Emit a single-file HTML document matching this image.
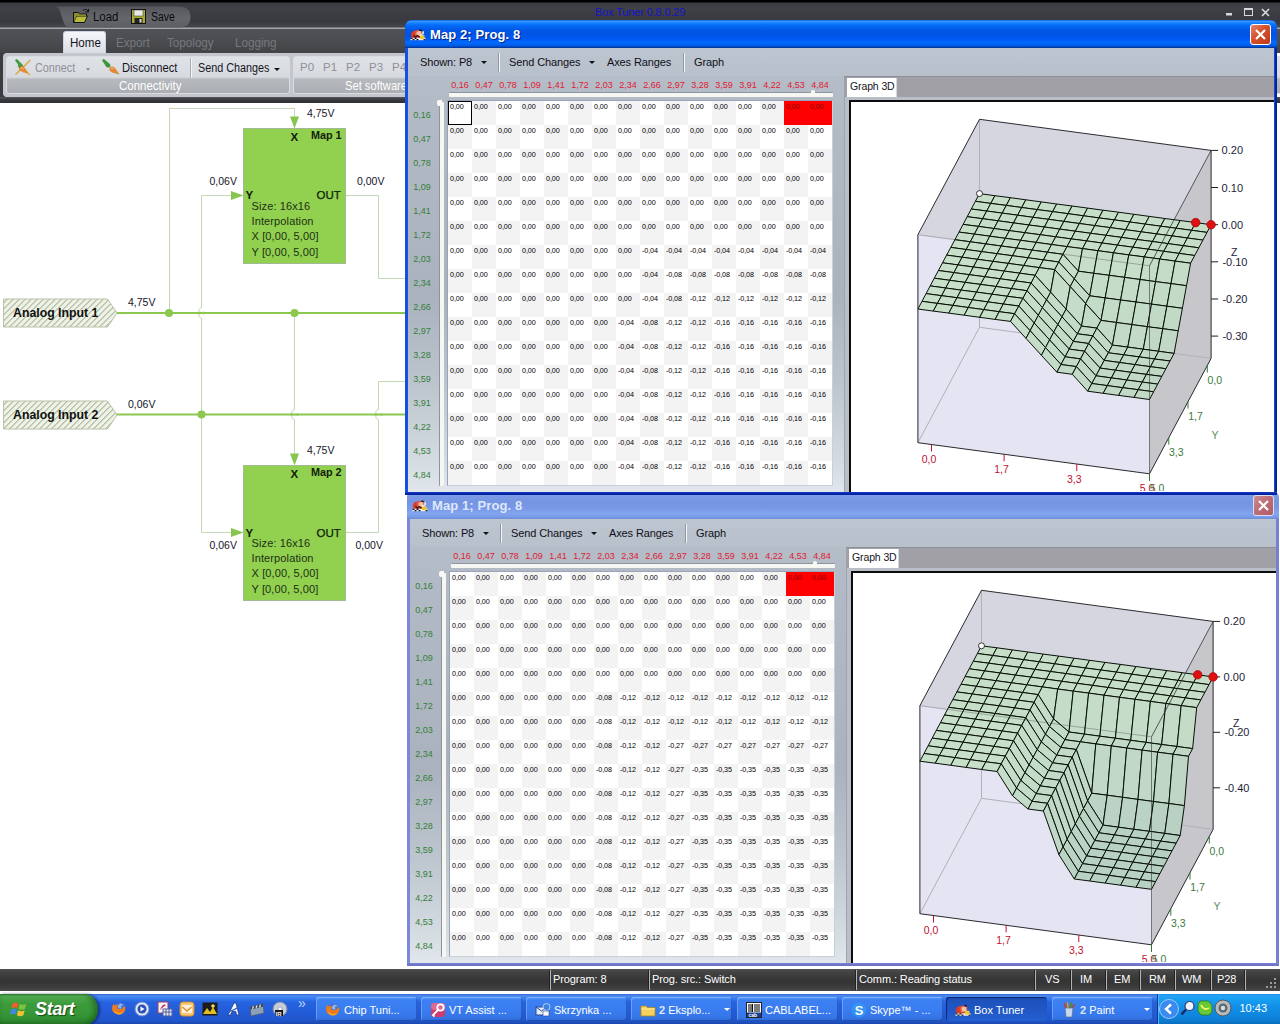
<!DOCTYPE html>
<html lang="en"><head><meta charset="utf-8"><title>Box Tuner 0.8.0.29</title>
<style>
html,body{margin:0;padding:0;}
body{width:1280px;height:1024px;overflow:hidden;position:relative;background:#fff;
 font-family:"Liberation Sans","DejaVu Sans",sans-serif;font-size:11px;color:#000;}
.abs{position:absolute;}
div,span{box-sizing:border-box;}
.t{position:absolute;white-space:nowrap;line-height:1;}
.rb{transform:scaleX(0.9);transform-origin:0 0;}
/* ---------- main app chrome ---------- */
#topbar{left:0;top:0;width:1280px;height:29px;background:linear-gradient(#000 0,#000 2px,#3a3b40 3px,#404146 8px,#3b3c41 16px,#393a3f 22px,#46474c 27px,#a4a7ac 28px,#a4a7ac 29px);}
#qat{left:55px;top:6px;width:136px;height:22px;border-radius:3px 12px 12px 3px / 3px 11px 11px 3px;background:linear-gradient(#505156,#5f6065 55%,#58595e);}
#qatcut{left:48px;top:6px;width:24px;height:22px;background:linear-gradient(#36373c,#2c2d31 60%,#3e3f44);border-radius:0 14px 0 0;transform:skewX(25deg);}
#tabrow{left:0;top:29px;width:1280px;height:24px;background:linear-gradient(#515256,#4b4c50 50%,#424347);}
#ribbon{left:3px;top:53px;width:1274px;height:44px;background:#c3c7cd;border-radius:4px 0 0 4px;}
#ribbon .grp{position:absolute;top:3px;height:38px;border-radius:3px;border:1px solid #d9dce1;background:linear-gradient(#dfe2e7 0,#d7dadf 20px,#c9ccd1 21px,#b6b9be 22px,#a9acb1 38px);overflow:hidden;}
#under{left:0;top:97px;width:1280px;height:6px;background:linear-gradient(#55565a,#3a3b3f 40%,#2e2f33);}
#hometab{left:63px;top:31px;width:43px;height:23px;border-radius:3px 3px 0 0;background:linear-gradient(#f4f6f9,#e4e7ec 60%,#d9dce2);border:1px solid #c9d3e2;border-bottom:none;}
/* ---------- status bar ---------- */
#status{left:0;top:969px;width:1280px;height:22px;background:linear-gradient(#505050 0,#434343 3px,#343434 12px,#3c3c3c 18px,#484848 22px);color:#fff;font-size:11px;}
#status .sep{position:absolute;top:1px;width:2px;height:20px;background:linear-gradient(90deg,#222 50%,#b4b4b4 50%);}
/* ---------- XP taskbar ---------- */
#taskbar{left:0;top:994px;width:1280px;height:30px;background:linear-gradient(#3168d5 0,#4e8cf0 2px,#3a80f3 4px,#2663e0 8px,#245edb 14px,#2258d2 22px,#2055c9 27px,#1941a5 31px);}
.tb{position:absolute;top:3px;height:24px;width:101px;border-radius:3px;background:linear-gradient(#5a9cff 0,#3c81f3 3px,#3a7df0 12px,#3576e8 20px,#2f6bd9 24px);box-shadow:inset 1px 1px 0 rgba(255,255,255,.25), inset -1px -1px 0 rgba(0,0,40,.25);color:#fff;font-size:11px;}
.tb.act{background:linear-gradient(#1c4fb3 0,#1e52bd 4px,#2058c6 14px,#2460cf 24px);box-shadow:inset 1px 1px 1px rgba(0,0,40,.55);}
.tb .lbl{position:absolute;left:28px;top:7px;white-space:nowrap;line-height:12px;}
.tb .ic{position:absolute;left:9px;top:5px;width:16px;height:16px;}
/* ---------- XP windows ---------- */
.win{position:absolute;overflow:hidden;}
.win .title{position:absolute;left:0;top:0;right:0;height:28px;}
.win.active .title{background:linear-gradient(#0058ee 0%,#3a93ff 4%,#288eff 8%,#127dff 12%,#036ffc 18%,#0262ee 26%,#0057e5 36%,#0054e3 46%,#0055eb 60%,#005bf5 70%,#026afe 80%,#0062ef 88%,#0052d6 94%,#0040ab 97%,#003092 100%);}
.win.inact .title{background:linear-gradient(#6f8fdc 0%,#8aa7ec 8%,#7b9ae6 18%,#7595e2 40%,#7898e5 60%,#82a5f0 80%,#7a9ce8 92%,#6c8cd8 100%);}
.win .ttext{position:absolute;left:25px;top:7px;color:#fff;font-weight:bold;font-size:13px;letter-spacing:0.1px;white-space:nowrap;line-height:15px;text-shadow:1px 1px 0 rgba(0,0,60,.6);}
.client{position:absolute;}
.tbtext{position:absolute;top:8px;font-size:11px;white-space:nowrap;line-height:13px;color:#101018;letter-spacing:-0.12px;}
.tbsep{position:absolute;top:5px;width:2px;height:19px;background:linear-gradient(90deg,#8f97a3 50%,#f4f6f8 50%);}
.caret{position:absolute;width:0;height:0;border-left:3px solid transparent;border-right:3px solid transparent;border-top:3px solid #101018;}
.cell{position:absolute;width:24px;height:24px;font-size:7.2px;line-height:8px;padding:2px 0 0 2px;color:#000;white-space:nowrap;overflow:hidden;letter-spacing:-0.1px;}
.hx{position:absolute;width:24px;text-align:center;font-size:9px;line-height:9px;color:#e02030;white-space:nowrap;}
.hy{position:absolute;width:24px;text-align:center;font-size:9px;line-height:9px;color:#35803a;white-space:nowrap;}
</style></head><body>
<div id="topbar" class="abs"></div>
<svg class="abs" style="left:50px;top:5px" width="146" height="24" viewBox="50 5 146 24"><defs><linearGradient id="qg" x1="0" y1="0" x2="0" y2="1"><stop offset="0" stop-color="#56575c"/><stop offset="0.550" stop-color="#65666b"/><stop offset="1" stop-color="#5e5f64"/></linearGradient></defs>
<path d="M55 6.500H179Q190.500 6.500 190.500 17Q190.500 27.500 179 27.500H69C61 27.500 63 6.500 55 6.500Z" fill="url(#qg)"/></svg>
<svg class="abs" style="left:72px;top:8px" width="20" height="18" viewBox="0 0 20 18">
<path d="M1.5 4.5h5l1 1.5h7v2" fill="none" stroke="#111" stroke-width="1"/>
<path d="M1.5 4.5v10h11l3-6.5h-11l-3 6.5z" fill="#b8bc3c" stroke="#111" stroke-width="1" stroke-linejoin="round"/>
<path d="M2 5h4.5l1 1.5h6.5v1.5h-9.5l-2.5 5.5z" fill="#8a8e2a"/>
<path d="M11 2.5c1.5-1.5 3.5-1.500 5 0.500" fill="none" stroke="#111" stroke-width="1"/>
<path d="M16.500 1v3h-3" fill="none" stroke="#111" stroke-width="1"/>
</svg>
<div class="t rb" style="left:92.500px;top:11px;font-size:12px;color:#0a0a0c;transform:scaleX(.95)">Load</div>
<svg class="abs" style="left:131px;top:9px" width="15" height="15" viewBox="0 0 15 15">
<rect x="0.500" y="0.500" width="14" height="14" fill="#a8ac30" stroke="#111"/>
<rect x="3" y="1" width="9" height="6" fill="#e8e8e8" stroke="#333" stroke-width="0.500"/>
<rect x="3.500" y="9" width="8" height="5" fill="#222"/>
<rect x="8.500" y="10" width="2" height="3.500" fill="#ddd"/>
</svg>
<div class="t rb" style="left:150.500px;top:11px;font-size:12px;color:#0a0a0c;transform:scaleX(.87)">Save</div>
<div class="t" style="left:595px;top:7px;font-size:11px;color:#1414c8;letter-spacing:-0.15px">Box Tuner 0.8.0.29</div>
<svg class="abs" style="left:1222px;top:5px" width="52" height="16" viewBox="0 0 52 16">
<rect x="4" y="8" width="6" height="2.500" fill="#d8d8d8"/>
<rect x="22.500" y="3.500" width="8" height="7" fill="none" stroke="#d8d8d8" stroke-width="1"/><rect x="22" y="3" width="9" height="2" fill="#d8d8d8"/>
<path d="M40 4l7 7M47 4l-7 7" stroke="#d8d8d8" stroke-width="1.600"/>
</svg>
<div id="tabrow" class="abs"></div>
<div id="hometab" class="abs"></div>
<div class="t rb" style="left:69.500px;top:37px;font-size:12px;color:#15151d;transform:scaleX(.965)">Home</div>
<div class="t rb" style="left:116px;top:37px;font-size:12px;color:#77787d;transform:scaleX(.972)">Export</div>
<div class="t rb" style="left:167px;top:37px;font-size:12px;color:#77787d;transform:scaleX(.972)">Topology</div>
<div class="t rb" style="left:235px;top:37px;font-size:12px;color:#77787d;transform:scaleX(.972)">Logging</div>
<div class="abs" style="left:0;top:53px;width:6px;height:44px;background:#3b3c40"></div>
<div id="ribbon" class="abs">
<div class="grp" style="left:3px;width:284px"></div>
<div class="grp" style="left:290px;width:990px"></div>
</div>
<svg class="abs" style="left:13px;top:58px" width="20" height="18" viewBox="0 0 20 18">
<path d="M3 16L17 2.500" stroke="#d9ac4c" stroke-width="1.700" stroke-linecap="round"/>
<path d="M12 13L16.500 16.500" stroke="#e2b85e" stroke-width="1.700" stroke-linecap="round"/>
<path d="M2.300 2.300L3.800 1.300L9.300 6.800Q10.300 8.800 8.800 10L6.300 10Q4.800 8.300 5.300 6.300Z" fill="#3fa03a" stroke="#2c7a2a" stroke-width="0.500"/>
<path d="M6.500 9.500Q9 7.800 11 9.300L14.800 14.800L13.300 14.600Q9.500 14.300 7 12.300Q6 11 6.500 9.500Z" fill="#ec8c30" stroke="#c8701c" stroke-width="0.500"/>
<path d="M7.500 10.300q1.500-.8 2.800 0" stroke="#f8c880" stroke-width="0.900" fill="none"/>
</svg>
<div class="t rb" style="left:34.500px;top:62px;font-size:12px;color:#8e9096">Connect</div>
<div class="caret" style="left:86px;top:68px;border-top-color:#8e9096;border-left-width:2.500px;border-right-width:2.500px"></div>
<svg class="abs" style="left:101px;top:58px" width="20" height="18" viewBox="0 0 20 18">
<path d="M1.300 2.300L2.800 1.300L8.300 5.800Q9.800 7.300 8.800 8.800L6.800 9.300Q4.800 8.800 4.300 6.800Z" fill="#3a9a36" stroke="#2a7828" stroke-width="0.500"/>
<path d="M8.800 9.800Q11 7.800 13.500 9.800L17.300 15.500L15.500 15.300Q11.500 14.800 9.300 12.800Q8.300 11.300 8.800 9.800Z" fill="#ea8a30" stroke="#c46c1c" stroke-width="0.500"/>
<path d="M9.800 10.500q1.500-1 3 0" stroke="#f8c880" stroke-width="0.900" fill="none"/>
<path d="M15.500 14.500l2 1.500" stroke="#b8a040" stroke-width="1.200" stroke-linecap="round"/>
</svg>
<div class="t rb" style="left:122px;top:62px;font-size:12px;color:#15151d;transform:scaleX(.933)">Disconnect</div>
<div class="abs" style="left:190px;top:58px;width:2px;height:20px;background:linear-gradient(90deg,#a8abb1 50%,#f2f4f6 50%)"></div>
<div class="t rb" style="left:198px;top:62px;font-size:12px;color:#15151d">Send Changes</div>
<div class="caret" style="left:274px;top:68px"></div>
<div class="t rb" style="left:118.500px;top:80px;font-size:12px;color:#fff;transform:scaleX(.955)">Connectivity</div>
<div class="t" style="left:300px;top:62px;font-size:11.500px;color:#8e9096">P0</div>
<div class="t" style="left:323px;top:62px;font-size:11.500px;color:#8e9096">P1</div>
<div class="t" style="left:346px;top:62px;font-size:11.500px;color:#8e9096">P2</div>
<div class="t" style="left:369px;top:62px;font-size:11.500px;color:#8e9096">P3</div>
<div class="t" style="left:392px;top:62px;font-size:11.500px;color:#8e9096">P4</div>
<div class="t rb" style="left:345px;top:80px;font-size:12px;color:#fff;transform:scaleX(.93)">Set software</div>
<div id="under" class="abs"></div>
<svg class="abs" style="left:0;top:103px" width="410" height="865" viewBox="0 103 410 865" font-family='"Liberation Sans","DejaVu Sans",sans-serif'>
<defs><pattern id="hatch" width="4.240" height="4.240" patternUnits="userSpaceOnUse" patternTransform="rotate(-45)">
<rect width="4.240" height="4.240" fill="#eef3e6"/><rect width="4.240" height="0.950" fill="#a3ad96"/></pattern></defs>
<path d="M169.500 313V108.500H294.500V118" fill="none" stroke="#c3d8b4" stroke-width="1"/>
<path d="M201.500 414V195.500H233" fill="none" stroke="#c3d8b4" stroke-width="1"/>
<path d="M294.500 313V455" fill="none" stroke="#c3d8b4" stroke-width="1"/>
<path d="M201.500 415V532.500H233" fill="none" stroke="#c3d8b4" stroke-width="1"/>
<path d="M346 195.500H378.500V278.500H410" fill="none" stroke="#c3d8b4" stroke-width="1"/>
<path d="M346 532.500H378.500V381.500H410" fill="none" stroke="#c3d8b4" stroke-width="1"/>
<path d="M116 313H410" stroke="#8cc850" stroke-width="2.200" fill="none"/>
<path d="M116 414.500H410" stroke="#8cc850" stroke-width="2.200" fill="none"/>
<rect x="199.0" y="308" width="5" height="10" fill="#fff"/>
<path d="M201.5 307q-4 3-2.500 6q-1.500 3 2.500 6" fill="none" stroke="#c3d8b4" stroke-width="1"/>
<path d="M197.5 313H205.5" stroke="#8cc850" stroke-width="2.200"/>
<rect x="292.0" y="409.5" width="5" height="10" fill="#fff"/>
<path d="M294.5 408.5q-4 3-2.500 6q-1.500 3 2.500 6" fill="none" stroke="#c3d8b4" stroke-width="1"/>
<path d="M290.5 414.5H298.5" stroke="#8cc850" stroke-width="2.200"/>
<rect x="376.0" y="409.5" width="5" height="10" fill="#fff"/>
<path d="M378.5 408.5q-4 3-2.500 6q-1.500 3 2.500 6" fill="none" stroke="#c3d8b4" stroke-width="1"/>
<path d="M374.5 414.5H382.5" stroke="#8cc850" stroke-width="2.200"/>
<circle cx="169" cy="313" r="4" fill="#8cc850"/>
<circle cx="294.5" cy="313" r="4" fill="#8cc850"/>
<circle cx="201.5" cy="414.5" r="4" fill="#8cc850"/>
<path d="M3.500 299H107.500L117 313L107.500 327H3.500Z" fill="url(#hatch)" stroke="#b7c2a6" stroke-width="1"/>
<text x="13" y="317" font-size="12.300" font-weight="bold" fill="#111">Analog Input 1</text>
<path d="M3.500 401H107.500L117 415L107.500 429H3.500Z" fill="url(#hatch)" stroke="#b7c2a6" stroke-width="1"/>
<text x="13" y="419" font-size="12.300" font-weight="bold" fill="#111">Analog Input 2</text>
<text x="128" y="306" font-size="10.500" fill="#15152a">4,75V</text>
<text x="128" y="408" font-size="10.500" fill="#15152a">0,06V</text>
<rect x="243.500" y="128.5" width="102" height="135" fill="#92d050" stroke="#a3b895" stroke-width="1"/>
<path d="M290 116.5H299L294.500 128.5Z" fill="#86c64e"/>
<path d="M231 191.0V200.0L243.500 195.5Z" fill="#86c64e"/>
<text x="290.500" y="140.5" font-size="11.500" font-weight="bold" fill="#10200c">X</text>
<text x="311" y="139.0" font-size="10.800" font-weight="bold" fill="#10200c">Map 1</text>
<text x="245.500" y="199.0" font-size="11.500" font-weight="bold" fill="#10200c">Y</text>
<text x="316.500" y="199.0" font-size="11.500" fill="#10200c" stroke="#10200c" stroke-width="0.250">OUT</text>
<text x="251.500" y="210.0" font-size="11" letter-spacing="0.120" fill="#1c3014">Size: 16x16</text>
<text x="251.500" y="225.2" font-size="11" letter-spacing="0.120" fill="#1c3014">Interpolation</text>
<text x="251.500" y="240.4" font-size="11" letter-spacing="0.120" fill="#1c3014">X [0,00, 5,00]</text>
<text x="251.500" y="255.6" font-size="11" letter-spacing="0.120" fill="#1c3014">Y [0,00, 5,00]</text>
<text x="307" y="117" font-size="10.500" fill="#15152a">4,75V</text>
<text x="209.500" y="185" font-size="10.500" fill="#15152a">0,06V</text>
<text x="357" y="185" font-size="10.500" fill="#15152a">0,00V</text>
<rect x="243.500" y="465.5" width="102" height="135" fill="#92d050" stroke="#a3b895" stroke-width="1"/>
<path d="M290 453.5H299L294.500 465.5Z" fill="#86c64e"/>
<path d="M231 528.0V537.0L243.500 532.5Z" fill="#86c64e"/>
<text x="290.500" y="477.5" font-size="11.500" font-weight="bold" fill="#10200c">X</text>
<text x="311" y="476.0" font-size="10.800" font-weight="bold" fill="#10200c">Map 2</text>
<text x="245.500" y="537.0" font-size="11.500" font-weight="bold" fill="#10200c">Y</text>
<text x="316.500" y="537.0" font-size="11.500" fill="#10200c" stroke="#10200c" stroke-width="0.250">OUT</text>
<text x="251.500" y="547.0" font-size="11" letter-spacing="0.120" fill="#1c3014">Size: 16x16</text>
<text x="251.500" y="562.2" font-size="11" letter-spacing="0.120" fill="#1c3014">Interpolation</text>
<text x="251.500" y="577.4" font-size="11" letter-spacing="0.120" fill="#1c3014">X [0,00, 5,00]</text>
<text x="251.500" y="592.6" font-size="11" letter-spacing="0.120" fill="#1c3014">Y [0,00, 5,00]</text>
<text x="307" y="454" font-size="10.500" fill="#15152a">4,75V</text>
<text x="209.500" y="549" font-size="10.500" fill="#15152a">0,06V</text>
<text x="355.5" y="549" font-size="10.500" fill="#15152a">0,00V</text>
</svg>
<div id="status" class="abs">
<div class="sep" style="left:549px"></div>
<div class="sep" style="left:648px"></div>
<div class="sep" style="left:855px"></div>
<div class="sep" style="left:1034px"></div>
<div class="sep" style="left:1070px"></div>
<div class="sep" style="left:1105px"></div>
<div class="sep" style="left:1139px"></div>
<div class="sep" style="left:1174px"></div>
<div class="sep" style="left:1210px"></div>
<div class="sep" style="left:1244px"></div>
<div class="t" style="left:553px;top:5px;font-size:11px;letter-spacing:-0.1px">Program: 8</div>
<div class="t" style="left:652px;top:5px;font-size:11px;letter-spacing:-0.1px">Prog. src.: Switch</div>
<div class="t" style="left:859px;top:5px;font-size:11px;letter-spacing:-0.1px">Comm.: Reading status</div>
<div class="t" style="left:1045px;top:5px;font-size:11px;letter-spacing:-0.1px">VS</div>
<div class="t" style="left:1080px;top:5px;font-size:11px;letter-spacing:-0.1px">IM</div>
<div class="t" style="left:1114px;top:5px;font-size:11px;letter-spacing:-0.1px">EM</div>
<div class="t" style="left:1149px;top:5px;font-size:11px;letter-spacing:-0.1px">RM</div>
<div class="t" style="left:1182px;top:5px;font-size:11px;letter-spacing:-0.1px">WM</div>
<div class="t" style="left:1217px;top:5px;font-size:11px;letter-spacing:-0.1px">P28</div>
<svg class="abs" style="left:1266px;top:9px" width="12" height="12"><g fill="#9a9a9a"><rect x="8" y="0" width="2" height="2"/><rect x="4" y="4" width="2" height="2"/><rect x="8" y="4" width="2" height="2"/><rect x="0" y="8" width="2" height="2"/><rect x="4" y="8" width="2" height="2"/><rect x="8" y="8" width="2" height="2"/></g></svg>
</div>
<div class="abs" style="left:0;top:991px;width:1280px;height:3px;background:#fff"></div>
<div id="taskbar" class="abs">
<div class="abs" style="left:0;top:0;width:98px;height:31px;border-radius:0 14px 14px 0 / 0 16px 16px 0;background:linear-gradient(#2f8b2f 0,#5cb85a 2px,#48a746 5px,#3c9c3b 10px,#389838 18px,#319031 25px,#2a7e2b 31px);box-shadow:inset -3px 0 6px rgba(0,40,0,.45), 2px 0 3px rgba(0,0,60,.5)"></div>
<svg class="abs" style="left:10px;top:6px" width="20" height="19" viewBox="0 0 20 19">
<path d="M2.500 3.500q3-2 6 0l-1.300 5q-3-2-6 0z" fill="#e8602c"/>
<path d="M9.800 3.800q3 2 6.500 0l-1.300 5q-3.500 2-6.500 0z" fill="#7ec242"/>
<path d="M1 9.800q3-2 6 0l-1.300 5q-3-2-6 0z" fill="#3f8ae0"/>
<path d="M8.200 10.200q3 2 6.500 0l-1.300 5q-3.500 2-6.500 0z" fill="#f2c030"/>
</svg>
<div class="t" style="left:35px;top:6px;font-size:18px;font-weight:bold;font-style:italic;color:#fff;text-shadow:1px 1px 1px rgba(0,40,0,.7);letter-spacing:-0.3px">Start</div>
<svg class="abs" style="left:111px;top:7px" width="16" height="16" viewBox="0 0 16 16"><circle cx="8.500" cy="7.500" r="6" fill="#3f6fd2"/><path d="M9 2.500q2.500 0 4 2q-2-.5-3 .5q1 1.500 0 2.500q-2 .5-3-1q-.5-2 2-4z" fill="#8fb4ee"/><path d="M1 7.500q0-3 2-5q0 1.500 1 2q1.500-1 3.500-.5q-1.500 1-1.500 2.500q1 2.500 4 1.500q2-.5 2.500-2.500q1 .5 1.500-.5q1 4-1.500 6.500q-3 3-7 1.500q-4.500-1.500-4.500-5.500z" fill="#ee7a1c"/><path d="M2.500 9q1 4 5.500 4.500q3.500 0 5-3q-2 2-5 1.500q-3.500-.5-5.500-3z" fill="#f8a828"/></svg>
<svg class="abs" style="left:134px;top:7px" width="16" height="16" viewBox="0 0 16 16"><circle cx="8" cy="8" r="7" fill="#dfe8f4" stroke="#6a8cc8"/><circle cx="8" cy="8" r="4.500" fill="#2c50b8"/><path d="M6.500 5.500v5l4-2.500z" fill="#fff"/></svg>
<svg class="abs" style="left:157px;top:7px" width="16" height="16" viewBox="0 0 16 16"><rect x="1" y="1" width="10" height="11" fill="#f4f4f8" stroke="#a04060"/><path d="M3 9q3-7 6-5q-2 1-6 5z" fill="#d02050"/><rect x="6" y="8" width="9" height="7" fill="#e8e8f0" stroke="#5060a0"/><path d="M6 11h9M9 8v7M12 8v7" stroke="#5060a0"/></svg>
<svg class="abs" style="left:179px;top:7px" width="16" height="16" viewBox="0 0 16 16"><rect x="1" y="1" width="14" height="14" rx="3" fill="#f6c874" stroke="#d88a28"/><rect x="3" y="4" width="10" height="8" rx="1" fill="#fdf0d8"/><path d="M3.500 6l4.500 4l4.500-4" fill="none" stroke="#e09030" stroke-width="1.400"/></svg>
<svg class="abs" style="left:202px;top:7px" width="16" height="16" viewBox="0 0 16 16"><rect x="0.500" y="1.500" width="15" height="13" fill="#1c1c1c"/><path d="M1 13l4-6l3 4l3-5l4 7z" fill="#e0c020"/><circle cx="11" cy="5" r="1.800" fill="#f0e060"/></svg>
<svg class="abs" style="left:226px;top:7px" width="16" height="16" viewBox="0 0 16 16"><path d="M2 14l6-12h2l3 12h-2.500l-.7-3.500h-3.800l-1.500 3.500z" fill="#f8f8ff" stroke="#1c3a90" stroke-width="0.800"/><path d="M1 11q7-1 14-7" stroke="#3060c0" stroke-width="1.300" fill="none"/></svg>
<svg class="abs" style="left:249px;top:7px" width="16" height="16" viewBox="0 0 16 16"><path d="M1 6l13-3l1 9l-13 3z" fill="#8ca0b8" stroke="#4a5a70" stroke-width="0.700"/><path d="M1 6l13-3l.3 2.500l-13 3z" fill="#3a4658"/><path d="M3.500 7.800l1-2.500M7 7l1-2.500M10.500 6.200l1-2.500" stroke="#e8ecf0" stroke-width="1.200"/></svg>
<svg class="abs" style="left:272px;top:7px" width="16" height="16" viewBox="0 0 16 16"><circle cx="8" cy="8" r="7" fill="#c8ccd8" stroke="#8088a0"/><circle cx="8" cy="8" r="2" fill="#fff" stroke="#8088a0" stroke-width="0.600"/><rect x="3" y="9" width="8" height="6" fill="#181820"/><text x="3.500" y="14.500" font-size="6" font-weight="bold" fill="#fff" font-family="Liberation Sans, sans-serif">IR</text></svg>
<div class="t" style="left:298px;top:2px;font-size:14px;color:#bcd6ff;letter-spacing:-1px">&#187;</div>
<div class="tb" style="left:316px"><svg class="ic" viewBox="0 0 16 16"><circle cx="8.500" cy="7.500" r="6" fill="#3f6fd2"/><path d="M9 2.500q2.500 0 4 2q-2-.5-3 .5q1 1.500 0 2.500q-2 .5-3-1q-.5-2 2-4z" fill="#8fb4ee"/><path d="M1 7.500q0-3 2-5q0 1.500 1 2q1.500-1 3.500-.5q-1.500 1-1.500 2.500q1 2.500 4 1.500q2-.5 2.500-2.500q1 .5 1.500-.5q1 4-1.500 6.500q-3 3-7 1.500q-4.500-1.500-4.500-5.500z" fill="#ee7a1c"/><path d="M2.500 9q1 4 5.500 4.500q3.500 0 5-3q-2 2-5 1.500q-3.500-.5-5.500-3z" fill="#f8a828"/></svg><div class="lbl">Chip Tuni...</div></div>
<div class="tb" style="left:421px"><svg class="ic" viewBox="0 0 16 16"><rect x="1" y="1" width="14" height="14" rx="3" fill="#cc3c70"/><rect x="1" y="1" width="14" height="7" rx="3" fill="#dc6a94"/><circle cx="10.500" cy="5.500" r="3.200" fill="none" stroke="#fff" stroke-width="1.800"/><path d="M8.500 7.500l-5.500 5.500l1.500 1.500" fill="none" stroke="#fff" stroke-width="1.800"/></svg><div class="lbl">VT Assist ...</div></div>
<div class="tb" style="left:526px"><svg class="ic" viewBox="0 0 16 16"><rect x="1" y="5" width="11" height="8" fill="#e8eef8" stroke="#2a4a98"/><path d="M1 5l5.500 4l5.500-4" fill="none" stroke="#2a4a98"/><circle cx="11.500" cy="5" r="3.500" fill="#4080e0" stroke="#fff" stroke-width="0.600"/><rect x="8" y="9" width="6" height="5" fill="#f8f8f8" stroke="#2a4a98" stroke-width="0.600"/></svg><div class="lbl">Skrzynka ...</div></div>
<div class="tb" style="left:631px"><svg class="ic" viewBox="0 0 16 16"><path d="M1 4h5l1.500 1.500h7.500v8.500h-14z" fill="#f4d060" stroke="#b08818" stroke-width="0.800"/><path d="M1 7h14" stroke="#fbe890"/></svg><div class="lbl"><b style="color:#dfe6f6">2</b> Eksplo...</div></div>
<div class="tb" style="left:737px"><svg class="ic" viewBox="0 0 16 16"><rect x="0.500" y="0.500" width="15" height="15" fill="#fff" stroke="#222"/><path d="M3 2v8M5 2v8M6.500 2v8M9 2v8M11 2v8M13 2v8" stroke="#111" stroke-width="1.100"/><rect x="1" y="10.500" width="14" height="4.500" fill="#1a3c8c"/><text x="2.500" y="14.500" font-size="5" font-weight="bold" fill="#fff" font-family="Liberation Sans, sans-serif">cab</text></svg><div class="lbl">CABLABEL...</div></div>
<div class="tb" style="left:842px"><svg class="ic" viewBox="0 0 16 16"><circle cx="8" cy="8" r="7.500" fill="#2fa4f4" fill-opacity="0.550"/><text x="3.800" y="12.800" font-size="13" font-weight="bold" fill="#f4fbff" font-family="Liberation Sans, sans-serif">S</text></svg><div class="lbl">Skype&#8482; - ...</div></div>
<div class="tb act" style="left:946px"><svg class="ic" viewBox="0 0 16 16"><g transform="translate(0,2.500)"><ellipse cx="5.800" cy="5.800" rx="5" ry="4.300" fill="#d83a22"/><path d="M4 2.500q3.500-2.500 7-1l1.500 1.500l-1 5h-6z" fill="#e0523a"/><path d="M6.500 3q2-1.500 4.500-.8l.8 4.800h-5z" fill="#f2c2a8"/><path d="M9 .8q1.500-.8 3 .3l-.5 1.200q-1.200-.8-2.500-.5z" fill="#201010"/><rect x=".5" y="8.800" width="15" height="2.400" fill="#f6f6fa"/><path d="M.5 8.800h2v1.200h-2zM4.500 8.800h2v1.200h-2zM2.500 10h2v1.200h-2zM6.500 10h2v1.200h-2zM13.500 10h2v1.200h-2z" fill="#161620"/><rect x="10" y="6.200" width="4.500" height="4" fill="#e8c838"/></g></svg><div class="lbl">Box Tuner</div></div>
<div class="tb" style="left:1052px"><svg class="ic" viewBox="0 0 16 16"><path d="M4 6h8l-1 9h-6z" fill="#c8d8f0" stroke="#5a6a90" stroke-width="0.700"/><path d="M5 6l-2-5M7 6l-.5-5.500M9 6l1.500-5.500M11 6l2.500-4" stroke="#c04020" stroke-width="1.400"/><path d="M7 6l-.5-5.500" stroke="#e0a020" stroke-width="1.400"/><path d="M9 6l1.500-5.500" stroke="#3a9a3a" stroke-width="1.400"/></svg><div class="lbl"><b style="color:#dfe6f6">2</b> Paint</div></div>
<div class="caret" style="left:724px;top:14px;border-top-color:#fff"></div>
<div class="caret" style="left:1144px;top:14px;border-top-color:#fff"></div>
<div class="abs" style="left:1157px;top:0;width:123px;height:31px;background:linear-gradient(#1c8ee6 0,#27a4f5 2px,#17a0f2 5px,#1290e8 12px,#0f85dd 22px,#0c78cc 28px,#0a62b0 31px);box-shadow:inset 1px 0 0 #0a3a8a, inset 2px 0 0 #4ab8ff"></div>
<svg class="abs" style="left:1158px;top:4px" width="22" height="22" viewBox="0 0 22 22"><circle cx="11" cy="11" r="9.500" fill="#3a8af0" stroke="#9ccaff" stroke-width="1"/><path d="M13 6.500l-5 4.500l5 4.500" fill="none" stroke="#fff" stroke-width="2.400"/></svg>
<svg class="abs" style="left:1180px;top:6px" width="16" height="16" viewBox="0 0 16 16"><circle cx="9.500" cy="6" r="4.500" fill="#eef4ff" stroke="#2a3a70" stroke-width="1.200"/><path d="M6 9.500l-4.500 5" stroke="#1a2860" stroke-width="2.400"/></svg>
<svg class="abs" style="left:1197px;top:6px" width="16" height="16" viewBox="0 0 16 16"><path d="M3 1h8l4 4v7l-3 3h-8l-3-4v-7z" fill="#68c838" stroke="#2a7a18" stroke-width="0.800"/><path d="M4 5q3 6 8 3" fill="none" stroke="#f4f860" stroke-width="1.800"/></svg>
<svg class="abs" style="left:1214px;top:5px" width="18" height="18" viewBox="0 0 18 18"><circle cx="9" cy="9" r="8" fill="#b8bcc0" stroke="#50585c"/><circle cx="9" cy="9" r="4.500" fill="#5a6a70"/><circle cx="9" cy="9" r="2.200" fill="#d8e0e4"/></svg>
<div class="t" style="left:1239.500px;top:9px;font-size:11px;color:#fff">10:43</div>
</div>
<div class="win inact" style="left:407px;top:491px;width:872px;height:475px;background:#7b86dc;border-radius:7px 7px 0 0">
<div class="abs" style="right:0;top:28px;width:3px;bottom:0;background:#7480d2"></div>
<div class="abs" style="left:0;right:0;height:3px;bottom:0;background:linear-gradient(#8084d4 0,#7478cc 1px,#6c70c4 3px)"></div>
<div class="title"></div>
<svg class="abs" style="left:5px;top:9px" width="16" height="12" viewBox="0 0 16 12">
<ellipse cx="5.800" cy="5.800" rx="5" ry="4.300" fill="#d83a22"/>
<path d="M4 2.500q3.500-2.500 7-1l1.500 1.500l-1 5h-6z" fill="#e0523a"/>
<path d="M6.500 3q2-1.500 4.500-.8l.8 4.800h-5z" fill="#f2c2a8"/>
<path d="M9 .8q1.500-.8 3 .3l-.5 1.200q-1.200-.8-2.500-.5z" fill="#201010"/>
<path d="M12.300 2.500l1.700-.3l-.3 3.300l-1.400.3z" fill="#f4f4f8"/>
<rect x=".5" y="8.800" width="15" height="2.400" fill="#f6f6fa"/>
<path d="M.5 8.800h2v1.200h-2zM4.500 8.800h2v1.200h-2zM2.500 10h2v1.200h-2zM6.500 10h2v1.200h-2zM13.500 10h2v1.200h-2z" fill="#161620"/>
<path d="M3.500 6.500l2 1.500l2-1.500l2 1.500" stroke="#301010" stroke-width="1.100" fill="none"/>
<rect x="10" y="6.200" width="4.500" height="4" fill="#e8c838"/>
<rect x="10" y="5.200" width="2.500" height="1.500" fill="#f8f0d0"/>
</svg>
<div class="ttext" style="color:#dfe7fb;text-shadow:none">Map 1; Prog. 8</div>
<div class="abs" style="right:5px;top:4px;width:21px;height:21px;border-radius:3px;background:linear-gradient(135deg,#cc8c94 0,#bc6c74 50%,#b05c66 100%);border:1px solid #d8e0f8;"><svg width="19" height="19" viewBox="0 0 19 19" style="position:absolute;left:0;top:0"><path d="M5 5l9 9M14 5l-9 9" stroke="#fff" stroke-width="2.200"/></svg></div>
<div class="client" style="left:3px;top:28px;width:866px;height:444px;background:linear-gradient(#b7bfcb 0,#b2bac6 60px,#aab2be 250px,#bdc5ce 340px,#d6dde3 420px,#e0e6ec 443px);overflow:hidden">
<div class="abs" style="left:0;top:0;width:866px;height:28px;background:linear-gradient(#bdc5d0,#b8c0cb)"></div>
<div class="abs" style="left:436px;top:28px;width:430px;height:416px;background:#b3bbc7"></div>
<div class="tbtext" style="left:12px">Shown: P8</div>
<div class="caret" style="left:73px;top:13px"></div>
<div class="tbsep" style="left:90px"></div>
<div class="tbtext" style="left:101px">Send Changes</div>
<div class="caret" style="left:181px;top:13px"></div>
<div class="tbtext" style="left:199px">Axes Ranges</div>
<div class="tbsep" style="left:275px"></div>
<div class="tbtext" style="left:286px">Graph</div>
<div class="hx" style="left:40px;top:33px">0,16</div>
<div class="hx" style="left:64px;top:33px">0,47</div>
<div class="hx" style="left:88px;top:33px">0,78</div>
<div class="hx" style="left:112px;top:33px">1,09</div>
<div class="hx" style="left:136px;top:33px">1,41</div>
<div class="hx" style="left:160px;top:33px">1,72</div>
<div class="hx" style="left:184px;top:33px">2,03</div>
<div class="hx" style="left:208px;top:33px">2,34</div>
<div class="hx" style="left:232px;top:33px">2,66</div>
<div class="hx" style="left:256px;top:33px">2,97</div>
<div class="hx" style="left:280px;top:33px">3,28</div>
<div class="hx" style="left:304px;top:33px">3,59</div>
<div class="hx" style="left:328px;top:33px">3,91</div>
<div class="hx" style="left:352px;top:33px">4,22</div>
<div class="hx" style="left:376px;top:33px">4,53</div>
<div class="hx" style="left:400px;top:33px">4,84</div>
<div class="abs" style="left:41px;top:44px;width:384px;height:5px;background:#f6f6f2;border-top:1px solid #8c949e;border-radius:1px"></div>
<div class="abs" style="left:403px;top:42px;width:4px;height:6px;background:#f8f8f4;border-radius:2px 2px 0 0"></div>
<div class="abs" style="left:31px;top:54px;width:5px;height:384px;background:#f6f6f2;border-left:1px solid #8c949e;border-radius:1px"></div>
<div class="abs" style="left:29px;top:52px;width:5px;height:6px;background:#f8f8f4;border-radius:2px 0 0 2px"></div>
<div class="hy" style="left:2px;top:63px">0,16</div>
<div class="hy" style="left:2px;top:87px">0,47</div>
<div class="hy" style="left:2px;top:111px">0,78</div>
<div class="hy" style="left:2px;top:135px">1,09</div>
<div class="hy" style="left:2px;top:159px">1,41</div>
<div class="hy" style="left:2px;top:183px">1,72</div>
<div class="hy" style="left:2px;top:207px">2,03</div>
<div class="hy" style="left:2px;top:231px">2,34</div>
<div class="hy" style="left:2px;top:255px">2,66</div>
<div class="hy" style="left:2px;top:279px">2,97</div>
<div class="hy" style="left:2px;top:303px">3,28</div>
<div class="hy" style="left:2px;top:327px">3,59</div>
<div class="hy" style="left:2px;top:351px">3,91</div>
<div class="hy" style="left:2px;top:375px">4,22</div>
<div class="hy" style="left:2px;top:399px">4,53</div>
<div class="hy" style="left:2px;top:423px">4,84</div>
<div class="abs" style="left:39px;top:52px;width:386px;height:386px;background:#fff;border:1px solid #98a4b8;border-right-color:#c8d0dc;border-bottom-color:#c8d0dc">
<div class="cell" style="left:0px;top:0px;background:#fff;color:#000">0,00</div>
<div class="cell" style="left:24px;top:0px;background:#f3f3f3;color:#000">0,00</div>
<div class="cell" style="left:48px;top:0px;background:#fff;color:#000">0,00</div>
<div class="cell" style="left:72px;top:0px;background:#f3f3f3;color:#000">0,00</div>
<div class="cell" style="left:96px;top:0px;background:#fff;color:#000">0,00</div>
<div class="cell" style="left:120px;top:0px;background:#f3f3f3;color:#000">0,00</div>
<div class="cell" style="left:144px;top:0px;background:#fff;color:#000">0,00</div>
<div class="cell" style="left:168px;top:0px;background:#f3f3f3;color:#000">0,00</div>
<div class="cell" style="left:192px;top:0px;background:#fff;color:#000">0,00</div>
<div class="cell" style="left:216px;top:0px;background:#f3f3f3;color:#000">0,00</div>
<div class="cell" style="left:240px;top:0px;background:#fff;color:#000">0,00</div>
<div class="cell" style="left:264px;top:0px;background:#f3f3f3;color:#000">0,00</div>
<div class="cell" style="left:288px;top:0px;background:#fff;color:#000">0,00</div>
<div class="cell" style="left:312px;top:0px;background:#f3f3f3;color:#000">0,00</div>
<div class="cell" style="left:336px;top:0px;background:#ff0000;color:#8a0000">0,00</div>
<div class="cell" style="left:360px;top:0px;background:#ff0000;color:#8a0000">0,00</div>
<div class="cell" style="left:0px;top:24px;background:#f3f3f3;color:#000">0,00</div>
<div class="cell" style="left:24px;top:24px;background:#fff;color:#000">0,00</div>
<div class="cell" style="left:48px;top:24px;background:#f3f3f3;color:#000">0,00</div>
<div class="cell" style="left:72px;top:24px;background:#fff;color:#000">0,00</div>
<div class="cell" style="left:96px;top:24px;background:#f3f3f3;color:#000">0,00</div>
<div class="cell" style="left:120px;top:24px;background:#fff;color:#000">0,00</div>
<div class="cell" style="left:144px;top:24px;background:#f3f3f3;color:#000">0,00</div>
<div class="cell" style="left:168px;top:24px;background:#fff;color:#000">0,00</div>
<div class="cell" style="left:192px;top:24px;background:#f3f3f3;color:#000">0,00</div>
<div class="cell" style="left:216px;top:24px;background:#fff;color:#000">0,00</div>
<div class="cell" style="left:240px;top:24px;background:#f3f3f3;color:#000">0,00</div>
<div class="cell" style="left:264px;top:24px;background:#fff;color:#000">0,00</div>
<div class="cell" style="left:288px;top:24px;background:#f3f3f3;color:#000">0,00</div>
<div class="cell" style="left:312px;top:24px;background:#fff;color:#000">0,00</div>
<div class="cell" style="left:336px;top:24px;background:#f3f3f3;color:#000">0,00</div>
<div class="cell" style="left:360px;top:24px;background:#fff;color:#000">0,00</div>
<div class="cell" style="left:0px;top:48px;background:#fff;color:#000">0,00</div>
<div class="cell" style="left:24px;top:48px;background:#f3f3f3;color:#000">0,00</div>
<div class="cell" style="left:48px;top:48px;background:#fff;color:#000">0,00</div>
<div class="cell" style="left:72px;top:48px;background:#f3f3f3;color:#000">0,00</div>
<div class="cell" style="left:96px;top:48px;background:#fff;color:#000">0,00</div>
<div class="cell" style="left:120px;top:48px;background:#f3f3f3;color:#000">0,00</div>
<div class="cell" style="left:144px;top:48px;background:#fff;color:#000">0,00</div>
<div class="cell" style="left:168px;top:48px;background:#f3f3f3;color:#000">0,00</div>
<div class="cell" style="left:192px;top:48px;background:#fff;color:#000">0,00</div>
<div class="cell" style="left:216px;top:48px;background:#f3f3f3;color:#000">0,00</div>
<div class="cell" style="left:240px;top:48px;background:#fff;color:#000">0,00</div>
<div class="cell" style="left:264px;top:48px;background:#f3f3f3;color:#000">0,00</div>
<div class="cell" style="left:288px;top:48px;background:#fff;color:#000">0,00</div>
<div class="cell" style="left:312px;top:48px;background:#f3f3f3;color:#000">0,00</div>
<div class="cell" style="left:336px;top:48px;background:#fff;color:#000">0,00</div>
<div class="cell" style="left:360px;top:48px;background:#f3f3f3;color:#000">0,00</div>
<div class="cell" style="left:0px;top:72px;background:#f3f3f3;color:#000">0,00</div>
<div class="cell" style="left:24px;top:72px;background:#fff;color:#000">0,00</div>
<div class="cell" style="left:48px;top:72px;background:#f3f3f3;color:#000">0,00</div>
<div class="cell" style="left:72px;top:72px;background:#fff;color:#000">0,00</div>
<div class="cell" style="left:96px;top:72px;background:#f3f3f3;color:#000">0,00</div>
<div class="cell" style="left:120px;top:72px;background:#fff;color:#000">0,00</div>
<div class="cell" style="left:144px;top:72px;background:#f3f3f3;color:#000">0,00</div>
<div class="cell" style="left:168px;top:72px;background:#fff;color:#000">0,00</div>
<div class="cell" style="left:192px;top:72px;background:#f3f3f3;color:#000">0,00</div>
<div class="cell" style="left:216px;top:72px;background:#fff;color:#000">0,00</div>
<div class="cell" style="left:240px;top:72px;background:#f3f3f3;color:#000">0,00</div>
<div class="cell" style="left:264px;top:72px;background:#fff;color:#000">0,00</div>
<div class="cell" style="left:288px;top:72px;background:#f3f3f3;color:#000">0,00</div>
<div class="cell" style="left:312px;top:72px;background:#fff;color:#000">0,00</div>
<div class="cell" style="left:336px;top:72px;background:#f3f3f3;color:#000">0,00</div>
<div class="cell" style="left:360px;top:72px;background:#fff;color:#000">0,00</div>
<div class="cell" style="left:0px;top:96px;background:#fff;color:#000">0,00</div>
<div class="cell" style="left:24px;top:96px;background:#f3f3f3;color:#000">0,00</div>
<div class="cell" style="left:48px;top:96px;background:#fff;color:#000">0,00</div>
<div class="cell" style="left:72px;top:96px;background:#f3f3f3;color:#000">0,00</div>
<div class="cell" style="left:96px;top:96px;background:#fff;color:#000">0,00</div>
<div class="cell" style="left:120px;top:96px;background:#f3f3f3;color:#000">0,00</div>
<div class="cell" style="left:144px;top:96px;background:#fff;color:#000">0,00</div>
<div class="cell" style="left:168px;top:96px;background:#f3f3f3;color:#000">0,00</div>
<div class="cell" style="left:192px;top:96px;background:#fff;color:#000">0,00</div>
<div class="cell" style="left:216px;top:96px;background:#f3f3f3;color:#000">0,00</div>
<div class="cell" style="left:240px;top:96px;background:#fff;color:#000">0,00</div>
<div class="cell" style="left:264px;top:96px;background:#f3f3f3;color:#000">0,00</div>
<div class="cell" style="left:288px;top:96px;background:#fff;color:#000">0,00</div>
<div class="cell" style="left:312px;top:96px;background:#f3f3f3;color:#000">0,00</div>
<div class="cell" style="left:336px;top:96px;background:#fff;color:#000">0,00</div>
<div class="cell" style="left:360px;top:96px;background:#f3f3f3;color:#000">0,00</div>
<div class="cell" style="left:0px;top:120px;background:#f3f3f3;color:#000">0,00</div>
<div class="cell" style="left:24px;top:120px;background:#fff;color:#000">0,00</div>
<div class="cell" style="left:48px;top:120px;background:#f3f3f3;color:#000">0,00</div>
<div class="cell" style="left:72px;top:120px;background:#fff;color:#000">0,00</div>
<div class="cell" style="left:96px;top:120px;background:#f3f3f3;color:#000">0,00</div>
<div class="cell" style="left:120px;top:120px;background:#fff;color:#000">0,00</div>
<div class="cell" style="left:144px;top:120px;background:#f3f3f3;color:#000">-0,08</div>
<div class="cell" style="left:168px;top:120px;background:#fff;color:#000">-0,12</div>
<div class="cell" style="left:192px;top:120px;background:#f3f3f3;color:#000">-0,12</div>
<div class="cell" style="left:216px;top:120px;background:#fff;color:#000">-0,12</div>
<div class="cell" style="left:240px;top:120px;background:#f3f3f3;color:#000">-0,12</div>
<div class="cell" style="left:264px;top:120px;background:#fff;color:#000">-0,12</div>
<div class="cell" style="left:288px;top:120px;background:#f3f3f3;color:#000">-0,12</div>
<div class="cell" style="left:312px;top:120px;background:#fff;color:#000">-0,12</div>
<div class="cell" style="left:336px;top:120px;background:#f3f3f3;color:#000">-0,12</div>
<div class="cell" style="left:360px;top:120px;background:#fff;color:#000">-0,12</div>
<div class="cell" style="left:0px;top:144px;background:#fff;color:#000">0,00</div>
<div class="cell" style="left:24px;top:144px;background:#f3f3f3;color:#000">0,00</div>
<div class="cell" style="left:48px;top:144px;background:#fff;color:#000">0,00</div>
<div class="cell" style="left:72px;top:144px;background:#f3f3f3;color:#000">0,00</div>
<div class="cell" style="left:96px;top:144px;background:#fff;color:#000">0,00</div>
<div class="cell" style="left:120px;top:144px;background:#f3f3f3;color:#000">0,00</div>
<div class="cell" style="left:144px;top:144px;background:#fff;color:#000">-0,08</div>
<div class="cell" style="left:168px;top:144px;background:#f3f3f3;color:#000">-0,12</div>
<div class="cell" style="left:192px;top:144px;background:#fff;color:#000">-0,12</div>
<div class="cell" style="left:216px;top:144px;background:#f3f3f3;color:#000">-0,12</div>
<div class="cell" style="left:240px;top:144px;background:#fff;color:#000">-0,12</div>
<div class="cell" style="left:264px;top:144px;background:#f3f3f3;color:#000">-0,12</div>
<div class="cell" style="left:288px;top:144px;background:#fff;color:#000">-0,12</div>
<div class="cell" style="left:312px;top:144px;background:#f3f3f3;color:#000">-0,12</div>
<div class="cell" style="left:336px;top:144px;background:#fff;color:#000">-0,12</div>
<div class="cell" style="left:360px;top:144px;background:#f3f3f3;color:#000">-0,12</div>
<div class="cell" style="left:0px;top:168px;background:#f3f3f3;color:#000">0,00</div>
<div class="cell" style="left:24px;top:168px;background:#fff;color:#000">0,00</div>
<div class="cell" style="left:48px;top:168px;background:#f3f3f3;color:#000">0,00</div>
<div class="cell" style="left:72px;top:168px;background:#fff;color:#000">0,00</div>
<div class="cell" style="left:96px;top:168px;background:#f3f3f3;color:#000">0,00</div>
<div class="cell" style="left:120px;top:168px;background:#fff;color:#000">0,00</div>
<div class="cell" style="left:144px;top:168px;background:#f3f3f3;color:#000">-0,08</div>
<div class="cell" style="left:168px;top:168px;background:#fff;color:#000">-0,12</div>
<div class="cell" style="left:192px;top:168px;background:#f3f3f3;color:#000">-0,12</div>
<div class="cell" style="left:216px;top:168px;background:#fff;color:#000">-0,27</div>
<div class="cell" style="left:240px;top:168px;background:#f3f3f3;color:#000">-0,27</div>
<div class="cell" style="left:264px;top:168px;background:#fff;color:#000">-0,27</div>
<div class="cell" style="left:288px;top:168px;background:#f3f3f3;color:#000">-0,27</div>
<div class="cell" style="left:312px;top:168px;background:#fff;color:#000">-0,27</div>
<div class="cell" style="left:336px;top:168px;background:#f3f3f3;color:#000">-0,27</div>
<div class="cell" style="left:360px;top:168px;background:#fff;color:#000">-0,27</div>
<div class="cell" style="left:0px;top:192px;background:#fff;color:#000">0,00</div>
<div class="cell" style="left:24px;top:192px;background:#f3f3f3;color:#000">0,00</div>
<div class="cell" style="left:48px;top:192px;background:#fff;color:#000">0,00</div>
<div class="cell" style="left:72px;top:192px;background:#f3f3f3;color:#000">0,00</div>
<div class="cell" style="left:96px;top:192px;background:#fff;color:#000">0,00</div>
<div class="cell" style="left:120px;top:192px;background:#f3f3f3;color:#000">0,00</div>
<div class="cell" style="left:144px;top:192px;background:#fff;color:#000">-0,08</div>
<div class="cell" style="left:168px;top:192px;background:#f3f3f3;color:#000">-0,12</div>
<div class="cell" style="left:192px;top:192px;background:#fff;color:#000">-0,12</div>
<div class="cell" style="left:216px;top:192px;background:#f3f3f3;color:#000">-0,27</div>
<div class="cell" style="left:240px;top:192px;background:#fff;color:#000">-0,35</div>
<div class="cell" style="left:264px;top:192px;background:#f3f3f3;color:#000">-0,35</div>
<div class="cell" style="left:288px;top:192px;background:#fff;color:#000">-0,35</div>
<div class="cell" style="left:312px;top:192px;background:#f3f3f3;color:#000">-0,35</div>
<div class="cell" style="left:336px;top:192px;background:#fff;color:#000">-0,35</div>
<div class="cell" style="left:360px;top:192px;background:#f3f3f3;color:#000">-0,35</div>
<div class="cell" style="left:0px;top:216px;background:#f3f3f3;color:#000">0,00</div>
<div class="cell" style="left:24px;top:216px;background:#fff;color:#000">0,00</div>
<div class="cell" style="left:48px;top:216px;background:#f3f3f3;color:#000">0,00</div>
<div class="cell" style="left:72px;top:216px;background:#fff;color:#000">0,00</div>
<div class="cell" style="left:96px;top:216px;background:#f3f3f3;color:#000">0,00</div>
<div class="cell" style="left:120px;top:216px;background:#fff;color:#000">0,00</div>
<div class="cell" style="left:144px;top:216px;background:#f3f3f3;color:#000">-0,08</div>
<div class="cell" style="left:168px;top:216px;background:#fff;color:#000">-0,12</div>
<div class="cell" style="left:192px;top:216px;background:#f3f3f3;color:#000">-0,12</div>
<div class="cell" style="left:216px;top:216px;background:#fff;color:#000">-0,27</div>
<div class="cell" style="left:240px;top:216px;background:#f3f3f3;color:#000">-0,35</div>
<div class="cell" style="left:264px;top:216px;background:#fff;color:#000">-0,35</div>
<div class="cell" style="left:288px;top:216px;background:#f3f3f3;color:#000">-0,35</div>
<div class="cell" style="left:312px;top:216px;background:#fff;color:#000">-0,35</div>
<div class="cell" style="left:336px;top:216px;background:#f3f3f3;color:#000">-0,35</div>
<div class="cell" style="left:360px;top:216px;background:#fff;color:#000">-0,35</div>
<div class="cell" style="left:0px;top:240px;background:#fff;color:#000">0,00</div>
<div class="cell" style="left:24px;top:240px;background:#f3f3f3;color:#000">0,00</div>
<div class="cell" style="left:48px;top:240px;background:#fff;color:#000">0,00</div>
<div class="cell" style="left:72px;top:240px;background:#f3f3f3;color:#000">0,00</div>
<div class="cell" style="left:96px;top:240px;background:#fff;color:#000">0,00</div>
<div class="cell" style="left:120px;top:240px;background:#f3f3f3;color:#000">0,00</div>
<div class="cell" style="left:144px;top:240px;background:#fff;color:#000">-0,08</div>
<div class="cell" style="left:168px;top:240px;background:#f3f3f3;color:#000">-0,12</div>
<div class="cell" style="left:192px;top:240px;background:#fff;color:#000">-0,12</div>
<div class="cell" style="left:216px;top:240px;background:#f3f3f3;color:#000">-0,27</div>
<div class="cell" style="left:240px;top:240px;background:#fff;color:#000">-0,35</div>
<div class="cell" style="left:264px;top:240px;background:#f3f3f3;color:#000">-0,35</div>
<div class="cell" style="left:288px;top:240px;background:#fff;color:#000">-0,35</div>
<div class="cell" style="left:312px;top:240px;background:#f3f3f3;color:#000">-0,35</div>
<div class="cell" style="left:336px;top:240px;background:#fff;color:#000">-0,35</div>
<div class="cell" style="left:360px;top:240px;background:#f3f3f3;color:#000">-0,35</div>
<div class="cell" style="left:0px;top:264px;background:#f3f3f3;color:#000">0,00</div>
<div class="cell" style="left:24px;top:264px;background:#fff;color:#000">0,00</div>
<div class="cell" style="left:48px;top:264px;background:#f3f3f3;color:#000">0,00</div>
<div class="cell" style="left:72px;top:264px;background:#fff;color:#000">0,00</div>
<div class="cell" style="left:96px;top:264px;background:#f3f3f3;color:#000">0,00</div>
<div class="cell" style="left:120px;top:264px;background:#fff;color:#000">0,00</div>
<div class="cell" style="left:144px;top:264px;background:#f3f3f3;color:#000">-0,08</div>
<div class="cell" style="left:168px;top:264px;background:#fff;color:#000">-0,12</div>
<div class="cell" style="left:192px;top:264px;background:#f3f3f3;color:#000">-0,12</div>
<div class="cell" style="left:216px;top:264px;background:#fff;color:#000">-0,27</div>
<div class="cell" style="left:240px;top:264px;background:#f3f3f3;color:#000">-0,35</div>
<div class="cell" style="left:264px;top:264px;background:#fff;color:#000">-0,35</div>
<div class="cell" style="left:288px;top:264px;background:#f3f3f3;color:#000">-0,35</div>
<div class="cell" style="left:312px;top:264px;background:#fff;color:#000">-0,35</div>
<div class="cell" style="left:336px;top:264px;background:#f3f3f3;color:#000">-0,35</div>
<div class="cell" style="left:360px;top:264px;background:#fff;color:#000">-0,35</div>
<div class="cell" style="left:0px;top:288px;background:#fff;color:#000">0,00</div>
<div class="cell" style="left:24px;top:288px;background:#f3f3f3;color:#000">0,00</div>
<div class="cell" style="left:48px;top:288px;background:#fff;color:#000">0,00</div>
<div class="cell" style="left:72px;top:288px;background:#f3f3f3;color:#000">0,00</div>
<div class="cell" style="left:96px;top:288px;background:#fff;color:#000">0,00</div>
<div class="cell" style="left:120px;top:288px;background:#f3f3f3;color:#000">0,00</div>
<div class="cell" style="left:144px;top:288px;background:#fff;color:#000">-0,08</div>
<div class="cell" style="left:168px;top:288px;background:#f3f3f3;color:#000">-0,12</div>
<div class="cell" style="left:192px;top:288px;background:#fff;color:#000">-0,12</div>
<div class="cell" style="left:216px;top:288px;background:#f3f3f3;color:#000">-0,27</div>
<div class="cell" style="left:240px;top:288px;background:#fff;color:#000">-0,35</div>
<div class="cell" style="left:264px;top:288px;background:#f3f3f3;color:#000">-0,35</div>
<div class="cell" style="left:288px;top:288px;background:#fff;color:#000">-0,35</div>
<div class="cell" style="left:312px;top:288px;background:#f3f3f3;color:#000">-0,35</div>
<div class="cell" style="left:336px;top:288px;background:#fff;color:#000">-0,35</div>
<div class="cell" style="left:360px;top:288px;background:#f3f3f3;color:#000">-0,35</div>
<div class="cell" style="left:0px;top:312px;background:#f3f3f3;color:#000">0,00</div>
<div class="cell" style="left:24px;top:312px;background:#fff;color:#000">0,00</div>
<div class="cell" style="left:48px;top:312px;background:#f3f3f3;color:#000">0,00</div>
<div class="cell" style="left:72px;top:312px;background:#fff;color:#000">0,00</div>
<div class="cell" style="left:96px;top:312px;background:#f3f3f3;color:#000">0,00</div>
<div class="cell" style="left:120px;top:312px;background:#fff;color:#000">0,00</div>
<div class="cell" style="left:144px;top:312px;background:#f3f3f3;color:#000">-0,08</div>
<div class="cell" style="left:168px;top:312px;background:#fff;color:#000">-0,12</div>
<div class="cell" style="left:192px;top:312px;background:#f3f3f3;color:#000">-0,12</div>
<div class="cell" style="left:216px;top:312px;background:#fff;color:#000">-0,27</div>
<div class="cell" style="left:240px;top:312px;background:#f3f3f3;color:#000">-0,35</div>
<div class="cell" style="left:264px;top:312px;background:#fff;color:#000">-0,35</div>
<div class="cell" style="left:288px;top:312px;background:#f3f3f3;color:#000">-0,35</div>
<div class="cell" style="left:312px;top:312px;background:#fff;color:#000">-0,35</div>
<div class="cell" style="left:336px;top:312px;background:#f3f3f3;color:#000">-0,35</div>
<div class="cell" style="left:360px;top:312px;background:#fff;color:#000">-0,35</div>
<div class="cell" style="left:0px;top:336px;background:#fff;color:#000">0,00</div>
<div class="cell" style="left:24px;top:336px;background:#f3f3f3;color:#000">0,00</div>
<div class="cell" style="left:48px;top:336px;background:#fff;color:#000">0,00</div>
<div class="cell" style="left:72px;top:336px;background:#f3f3f3;color:#000">0,00</div>
<div class="cell" style="left:96px;top:336px;background:#fff;color:#000">0,00</div>
<div class="cell" style="left:120px;top:336px;background:#f3f3f3;color:#000">0,00</div>
<div class="cell" style="left:144px;top:336px;background:#fff;color:#000">-0,08</div>
<div class="cell" style="left:168px;top:336px;background:#f3f3f3;color:#000">-0,12</div>
<div class="cell" style="left:192px;top:336px;background:#fff;color:#000">-0,12</div>
<div class="cell" style="left:216px;top:336px;background:#f3f3f3;color:#000">-0,27</div>
<div class="cell" style="left:240px;top:336px;background:#fff;color:#000">-0,35</div>
<div class="cell" style="left:264px;top:336px;background:#f3f3f3;color:#000">-0,35</div>
<div class="cell" style="left:288px;top:336px;background:#fff;color:#000">-0,35</div>
<div class="cell" style="left:312px;top:336px;background:#f3f3f3;color:#000">-0,35</div>
<div class="cell" style="left:336px;top:336px;background:#fff;color:#000">-0,35</div>
<div class="cell" style="left:360px;top:336px;background:#f3f3f3;color:#000">-0,35</div>
<div class="cell" style="left:0px;top:360px;background:#f3f3f3;color:#000">0,00</div>
<div class="cell" style="left:24px;top:360px;background:#fff;color:#000">0,00</div>
<div class="cell" style="left:48px;top:360px;background:#f3f3f3;color:#000">0,00</div>
<div class="cell" style="left:72px;top:360px;background:#fff;color:#000">0,00</div>
<div class="cell" style="left:96px;top:360px;background:#f3f3f3;color:#000">0,00</div>
<div class="cell" style="left:120px;top:360px;background:#fff;color:#000">0,00</div>
<div class="cell" style="left:144px;top:360px;background:#f3f3f3;color:#000">-0,08</div>
<div class="cell" style="left:168px;top:360px;background:#fff;color:#000">-0,12</div>
<div class="cell" style="left:192px;top:360px;background:#f3f3f3;color:#000">-0,12</div>
<div class="cell" style="left:216px;top:360px;background:#fff;color:#000">-0,27</div>
<div class="cell" style="left:240px;top:360px;background:#f3f3f3;color:#000">-0,35</div>
<div class="cell" style="left:264px;top:360px;background:#fff;color:#000">-0,35</div>
<div class="cell" style="left:288px;top:360px;background:#f3f3f3;color:#000">-0,35</div>
<div class="cell" style="left:312px;top:360px;background:#fff;color:#000">-0,35</div>
<div class="cell" style="left:336px;top:360px;background:#f3f3f3;color:#000">-0,35</div>
<div class="cell" style="left:360px;top:360px;background:#fff;color:#000">-0,35</div>
</div>
<div class="abs" style="left:436px;top:28px;width:434px;height:21px;background:#a0a0a6;border-top:1px solid #8e9098"></div>
<div class="abs" style="left:436px;top:49px;width:434px;height:444px;background:#b9bec7;border-left:1px solid #9ea4b0"></div>
<div class="abs" style="left:439px;top:30px;width:50px;height:19px;background:#fff;border-right:1px solid #d8d8dc"></div>
<div class="t" style="left:442px;top:33px;font-size:10.500px;color:#15151d;letter-spacing:-0.12px">Graph 3D</div>
<div class="abs" style="left:441px;top:52px;width:430px;height:444px;background:#fff;border-left:2px solid #0c0c0c;border-top:2px solid #0c0c0c"></div>
</div>
</div>
<svg class="abs" style="left:853px;top:573px;width:423px;height:389px" viewBox="853 573 423 389" font-family='"Liberation Sans","DejaVu Sans",sans-serif'>
<polygon points="981.5,590.3 1213.1,621.4 1213.1,829.4 1151.5,944.8 919.9,913.7 919.9,705.7" fill="#d6d6e0"/>
<polygon points="919.9,705.7 1151.5,736.8 1151.5,944.8 919.9,913.7" fill="#e4e4f2"/>
<polygon points="1151.5,736.8 1213.1,621.4 1213.1,829.4 1151.5,944.8" fill="#c7c7cb"/>
<line x1="981.5" y1="590.3" x2="981.5" y2="798.3" stroke="#b0b0ba" stroke-width="1"/>
<line x1="981.5" y1="798.3" x2="1213.1" y2="829.4" stroke="#b0b0ba" stroke-width="1"/>
<line x1="981.5" y1="798.3" x2="919.9" y2="913.7" stroke="#b0b0ba" stroke-width="1"/>
<polygon points="981.5,645.8 996.9,647.8 992.8,655.5 977.4,653.5" fill="rgb(198,223,198)" fill-opacity="0.93" stroke="#061006" stroke-width="1" stroke-linejoin="round"/>
<polygon points="996.9,647.8 1012.4,649.9 1008.3,657.6 992.8,655.5" fill="rgb(198,223,198)" fill-opacity="0.93" stroke="#061006" stroke-width="1" stroke-linejoin="round"/>
<polygon points="1012.4,649.9 1027.8,652.0 1023.7,659.7 1008.3,657.6" fill="rgb(198,223,198)" fill-opacity="0.93" stroke="#061006" stroke-width="1" stroke-linejoin="round"/>
<polygon points="1027.8,652.0 1043.3,654.1 1039.2,661.8 1023.7,659.7" fill="rgb(198,223,198)" fill-opacity="0.93" stroke="#061006" stroke-width="1" stroke-linejoin="round"/>
<polygon points="1043.3,654.1 1058.7,656.1 1054.6,663.8 1039.2,661.8" fill="rgb(198,223,198)" fill-opacity="0.93" stroke="#061006" stroke-width="1" stroke-linejoin="round"/>
<polygon points="1058.7,656.1 1074.1,658.2 1070.0,665.9 1054.6,663.8" fill="rgb(198,223,198)" fill-opacity="0.93" stroke="#061006" stroke-width="1" stroke-linejoin="round"/>
<polygon points="1074.1,658.2 1089.6,660.3 1085.5,668.0 1070.0,665.9" fill="rgb(198,223,198)" fill-opacity="0.93" stroke="#061006" stroke-width="1" stroke-linejoin="round"/>
<polygon points="1089.6,660.3 1105.0,662.4 1100.9,670.0 1085.5,668.0" fill="rgb(198,223,198)" fill-opacity="0.93" stroke="#061006" stroke-width="1" stroke-linejoin="round"/>
<polygon points="1105.0,662.4 1120.5,664.4 1116.4,672.1 1100.9,670.0" fill="rgb(198,223,198)" fill-opacity="0.93" stroke="#061006" stroke-width="1" stroke-linejoin="round"/>
<polygon points="1120.5,664.4 1135.9,666.5 1131.8,674.2 1116.4,672.1" fill="rgb(198,223,198)" fill-opacity="0.93" stroke="#061006" stroke-width="1" stroke-linejoin="round"/>
<polygon points="1135.9,666.5 1151.3,668.6 1147.2,676.3 1131.8,674.2" fill="rgb(198,223,198)" fill-opacity="0.93" stroke="#061006" stroke-width="1" stroke-linejoin="round"/>
<polygon points="1151.3,668.6 1166.8,670.6 1162.7,678.3 1147.2,676.3" fill="rgb(198,223,198)" fill-opacity="0.93" stroke="#061006" stroke-width="1" stroke-linejoin="round"/>
<polygon points="1166.8,670.6 1182.2,672.7 1178.1,680.4 1162.7,678.3" fill="rgb(198,223,198)" fill-opacity="0.93" stroke="#061006" stroke-width="1" stroke-linejoin="round"/>
<polygon points="1182.2,672.7 1197.7,674.8 1193.6,682.5 1178.1,680.4" fill="rgb(198,223,198)" fill-opacity="0.93" stroke="#061006" stroke-width="1" stroke-linejoin="round"/>
<polygon points="1197.7,674.8 1213.1,676.9 1209.0,684.6 1193.6,682.5" fill="rgb(198,223,198)" fill-opacity="0.93" stroke="#061006" stroke-width="1" stroke-linejoin="round"/>
<polygon points="977.4,653.5 992.8,655.5 988.7,663.2 973.3,661.2" fill="rgb(198,223,198)" fill-opacity="0.93" stroke="#061006" stroke-width="1" stroke-linejoin="round"/>
<polygon points="992.8,655.5 1008.3,657.6 1004.2,665.3 988.7,663.2" fill="rgb(198,223,198)" fill-opacity="0.93" stroke="#061006" stroke-width="1" stroke-linejoin="round"/>
<polygon points="1008.3,657.6 1023.7,659.7 1019.6,667.4 1004.2,665.3" fill="rgb(198,223,198)" fill-opacity="0.93" stroke="#061006" stroke-width="1" stroke-linejoin="round"/>
<polygon points="1023.7,659.7 1039.2,661.8 1035.0,669.4 1019.6,667.4" fill="rgb(198,223,198)" fill-opacity="0.93" stroke="#061006" stroke-width="1" stroke-linejoin="round"/>
<polygon points="1039.2,661.8 1054.6,663.8 1050.5,671.5 1035.0,669.4" fill="rgb(198,223,198)" fill-opacity="0.93" stroke="#061006" stroke-width="1" stroke-linejoin="round"/>
<polygon points="1054.6,663.8 1070.0,665.9 1065.9,673.6 1050.5,671.5" fill="rgb(198,223,198)" fill-opacity="0.93" stroke="#061006" stroke-width="1" stroke-linejoin="round"/>
<polygon points="1070.0,665.9 1085.5,668.0 1081.4,675.7 1065.9,673.6" fill="rgb(198,223,198)" fill-opacity="0.93" stroke="#061006" stroke-width="1" stroke-linejoin="round"/>
<polygon points="1085.5,668.0 1100.9,670.0 1096.8,677.7 1081.4,675.7" fill="rgb(198,223,198)" fill-opacity="0.93" stroke="#061006" stroke-width="1" stroke-linejoin="round"/>
<polygon points="1100.9,670.0 1116.4,672.1 1112.2,679.8 1096.8,677.7" fill="rgb(198,223,198)" fill-opacity="0.93" stroke="#061006" stroke-width="1" stroke-linejoin="round"/>
<polygon points="1116.4,672.1 1131.8,674.2 1127.7,681.9 1112.2,679.8" fill="rgb(198,223,198)" fill-opacity="0.93" stroke="#061006" stroke-width="1" stroke-linejoin="round"/>
<polygon points="1131.8,674.2 1147.2,676.3 1143.1,684.0 1127.7,681.9" fill="rgb(198,223,198)" fill-opacity="0.93" stroke="#061006" stroke-width="1" stroke-linejoin="round"/>
<polygon points="1147.2,676.3 1162.7,678.3 1158.6,686.0 1143.1,684.0" fill="rgb(198,223,198)" fill-opacity="0.93" stroke="#061006" stroke-width="1" stroke-linejoin="round"/>
<polygon points="1162.7,678.3 1178.1,680.4 1174.0,688.1 1158.6,686.0" fill="rgb(198,223,198)" fill-opacity="0.93" stroke="#061006" stroke-width="1" stroke-linejoin="round"/>
<polygon points="1178.1,680.4 1193.6,682.5 1189.4,690.2 1174.0,688.1" fill="rgb(198,223,198)" fill-opacity="0.93" stroke="#061006" stroke-width="1" stroke-linejoin="round"/>
<polygon points="1193.6,682.5 1209.0,684.6 1204.9,692.3 1189.4,690.2" fill="rgb(198,223,198)" fill-opacity="0.93" stroke="#061006" stroke-width="1" stroke-linejoin="round"/>
<polygon points="973.3,661.2 988.7,663.2 984.6,670.9 969.2,668.8" fill="rgb(198,223,198)" fill-opacity="0.93" stroke="#061006" stroke-width="1" stroke-linejoin="round"/>
<polygon points="988.7,663.2 1004.2,665.3 1000.1,673.0 984.6,670.9" fill="rgb(198,223,198)" fill-opacity="0.93" stroke="#061006" stroke-width="1" stroke-linejoin="round"/>
<polygon points="1004.2,665.3 1019.6,667.4 1015.5,675.1 1000.1,673.0" fill="rgb(198,223,198)" fill-opacity="0.93" stroke="#061006" stroke-width="1" stroke-linejoin="round"/>
<polygon points="1019.6,667.4 1035.0,669.4 1030.9,677.1 1015.5,675.1" fill="rgb(198,223,198)" fill-opacity="0.93" stroke="#061006" stroke-width="1" stroke-linejoin="round"/>
<polygon points="1035.0,669.4 1050.5,671.5 1046.4,679.2 1030.9,677.1" fill="rgb(198,223,198)" fill-opacity="0.93" stroke="#061006" stroke-width="1" stroke-linejoin="round"/>
<polygon points="1050.5,671.5 1065.9,673.6 1061.8,681.3 1046.4,679.2" fill="rgb(198,223,198)" fill-opacity="0.93" stroke="#061006" stroke-width="1" stroke-linejoin="round"/>
<polygon points="1065.9,673.6 1081.4,675.7 1077.3,683.4 1061.8,681.3" fill="rgb(198,223,198)" fill-opacity="0.93" stroke="#061006" stroke-width="1" stroke-linejoin="round"/>
<polygon points="1081.4,675.7 1096.8,677.7 1092.7,685.4 1077.3,683.4" fill="rgb(198,223,198)" fill-opacity="0.93" stroke="#061006" stroke-width="1" stroke-linejoin="round"/>
<polygon points="1096.8,677.7 1112.2,679.8 1108.1,687.5 1092.7,685.4" fill="rgb(198,223,198)" fill-opacity="0.93" stroke="#061006" stroke-width="1" stroke-linejoin="round"/>
<polygon points="1112.2,679.8 1127.7,681.9 1123.6,689.6 1108.1,687.5" fill="rgb(198,223,198)" fill-opacity="0.93" stroke="#061006" stroke-width="1" stroke-linejoin="round"/>
<polygon points="1127.7,681.9 1143.1,684.0 1139.0,691.7 1123.6,689.6" fill="rgb(198,223,198)" fill-opacity="0.93" stroke="#061006" stroke-width="1" stroke-linejoin="round"/>
<polygon points="1143.1,684.0 1158.6,686.0 1154.5,693.7 1139.0,691.7" fill="rgb(198,223,198)" fill-opacity="0.93" stroke="#061006" stroke-width="1" stroke-linejoin="round"/>
<polygon points="1158.6,686.0 1174.0,688.1 1169.9,695.8 1154.5,693.7" fill="rgb(198,223,198)" fill-opacity="0.93" stroke="#061006" stroke-width="1" stroke-linejoin="round"/>
<polygon points="1174.0,688.1 1189.4,690.2 1185.3,697.9 1169.9,695.8" fill="rgb(198,223,198)" fill-opacity="0.93" stroke="#061006" stroke-width="1" stroke-linejoin="round"/>
<polygon points="1189.4,690.2 1204.9,692.3 1200.8,699.9 1185.3,697.9" fill="rgb(198,223,198)" fill-opacity="0.93" stroke="#061006" stroke-width="1" stroke-linejoin="round"/>
<polygon points="969.2,668.8 984.6,670.9 980.5,678.6 965.1,676.5" fill="rgb(198,223,198)" fill-opacity="0.93" stroke="#061006" stroke-width="1" stroke-linejoin="round"/>
<polygon points="984.6,670.9 1000.1,673.0 996.0,680.7 980.5,678.6" fill="rgb(198,223,198)" fill-opacity="0.93" stroke="#061006" stroke-width="1" stroke-linejoin="round"/>
<polygon points="1000.1,673.0 1015.5,675.1 1011.4,682.8 996.0,680.7" fill="rgb(198,223,198)" fill-opacity="0.93" stroke="#061006" stroke-width="1" stroke-linejoin="round"/>
<polygon points="1015.5,675.1 1030.9,677.1 1026.8,684.8 1011.4,682.8" fill="rgb(198,223,198)" fill-opacity="0.93" stroke="#061006" stroke-width="1" stroke-linejoin="round"/>
<polygon points="1030.9,677.1 1046.4,679.2 1042.3,686.9 1026.8,684.8" fill="rgb(198,223,198)" fill-opacity="0.93" stroke="#061006" stroke-width="1" stroke-linejoin="round"/>
<polygon points="1046.4,679.2 1061.8,681.3 1057.7,689.0 1042.3,686.9" fill="rgb(198,223,198)" fill-opacity="0.93" stroke="#061006" stroke-width="1" stroke-linejoin="round"/>
<polygon points="1061.8,681.3 1077.3,683.4 1073.2,691.1 1057.7,689.0" fill="rgb(198,223,198)" fill-opacity="0.93" stroke="#061006" stroke-width="1" stroke-linejoin="round"/>
<polygon points="1077.3,683.4 1092.7,685.4 1088.6,693.1 1073.2,691.1" fill="rgb(198,223,198)" fill-opacity="0.93" stroke="#061006" stroke-width="1" stroke-linejoin="round"/>
<polygon points="1092.7,685.4 1108.1,687.5 1104.0,695.2 1088.6,693.1" fill="rgb(198,223,198)" fill-opacity="0.93" stroke="#061006" stroke-width="1" stroke-linejoin="round"/>
<polygon points="1108.1,687.5 1123.6,689.6 1119.5,697.3 1104.0,695.2" fill="rgb(198,223,198)" fill-opacity="0.93" stroke="#061006" stroke-width="1" stroke-linejoin="round"/>
<polygon points="1123.6,689.6 1139.0,691.7 1134.9,699.3 1119.5,697.3" fill="rgb(198,223,198)" fill-opacity="0.93" stroke="#061006" stroke-width="1" stroke-linejoin="round"/>
<polygon points="1139.0,691.7 1154.5,693.7 1150.4,701.4 1134.9,699.3" fill="rgb(198,223,198)" fill-opacity="0.93" stroke="#061006" stroke-width="1" stroke-linejoin="round"/>
<polygon points="1154.5,693.7 1169.9,695.8 1165.8,703.5 1150.4,701.4" fill="rgb(198,223,198)" fill-opacity="0.93" stroke="#061006" stroke-width="1" stroke-linejoin="round"/>
<polygon points="1169.9,695.8 1185.3,697.9 1181.2,705.6 1165.8,703.5" fill="rgb(198,223,198)" fill-opacity="0.93" stroke="#061006" stroke-width="1" stroke-linejoin="round"/>
<polygon points="1185.3,697.9 1200.8,699.9 1196.7,707.6 1181.2,705.6" fill="rgb(198,223,198)" fill-opacity="0.93" stroke="#061006" stroke-width="1" stroke-linejoin="round"/>
<polygon points="965.1,676.5 980.5,678.6 976.4,686.3 961.0,684.2" fill="rgb(198,223,198)" fill-opacity="0.93" stroke="#061006" stroke-width="1" stroke-linejoin="round"/>
<polygon points="980.5,678.6 996.0,680.7 991.8,688.4 976.4,686.3" fill="rgb(198,223,198)" fill-opacity="0.93" stroke="#061006" stroke-width="1" stroke-linejoin="round"/>
<polygon points="996.0,680.7 1011.4,682.8 1007.3,690.5 991.8,688.4" fill="rgb(198,223,198)" fill-opacity="0.93" stroke="#061006" stroke-width="1" stroke-linejoin="round"/>
<polygon points="1011.4,682.8 1026.8,684.8 1022.7,692.5 1007.3,690.5" fill="rgb(198,223,198)" fill-opacity="0.93" stroke="#061006" stroke-width="1" stroke-linejoin="round"/>
<polygon points="1026.8,684.8 1042.3,686.9 1038.2,694.6 1022.7,692.5" fill="rgb(198,223,198)" fill-opacity="0.93" stroke="#061006" stroke-width="1" stroke-linejoin="round"/>
<polygon points="1042.3,686.9 1057.7,689.0 1053.6,718.9 1038.2,694.6" fill="rgb(197,222,198)" fill-opacity="0.93" stroke="#061006" stroke-width="1" stroke-linejoin="round"/>
<polygon points="1057.7,689.0 1073.2,691.1 1069.0,732.0 1053.6,718.9" fill="rgb(196,221,199)" fill-opacity="0.93" stroke="#061006" stroke-width="1" stroke-linejoin="round"/>
<polygon points="1073.2,691.1 1088.6,693.1 1084.5,734.1 1069.0,732.0" fill="rgb(196,221,199)" fill-opacity="0.93" stroke="#061006" stroke-width="1" stroke-linejoin="round"/>
<polygon points="1088.6,693.1 1104.0,695.2 1099.9,736.2 1084.5,734.1" fill="rgb(196,221,199)" fill-opacity="0.93" stroke="#061006" stroke-width="1" stroke-linejoin="round"/>
<polygon points="1104.0,695.2 1119.5,697.3 1115.4,738.2 1099.9,736.2" fill="rgb(196,221,199)" fill-opacity="0.93" stroke="#061006" stroke-width="1" stroke-linejoin="round"/>
<polygon points="1119.5,697.3 1134.9,699.3 1130.8,740.3 1115.4,738.2" fill="rgb(196,221,199)" fill-opacity="0.93" stroke="#061006" stroke-width="1" stroke-linejoin="round"/>
<polygon points="1134.9,699.3 1150.4,701.4 1146.2,742.4 1130.8,740.3" fill="rgb(196,221,199)" fill-opacity="0.93" stroke="#061006" stroke-width="1" stroke-linejoin="round"/>
<polygon points="1150.4,701.4 1165.8,703.5 1161.7,744.5 1146.2,742.4" fill="rgb(196,221,199)" fill-opacity="0.93" stroke="#061006" stroke-width="1" stroke-linejoin="round"/>
<polygon points="1165.8,703.5 1181.2,705.6 1177.1,746.5 1161.7,744.5" fill="rgb(196,221,199)" fill-opacity="0.93" stroke="#061006" stroke-width="1" stroke-linejoin="round"/>
<polygon points="1181.2,705.6 1196.7,707.6 1192.6,748.6 1177.1,746.5" fill="rgb(196,221,199)" fill-opacity="0.93" stroke="#061006" stroke-width="1" stroke-linejoin="round"/>
<polygon points="961.0,684.2 976.4,686.3 972.3,694.0 956.9,691.9" fill="rgb(198,223,198)" fill-opacity="0.93" stroke="#061006" stroke-width="1" stroke-linejoin="round"/>
<polygon points="976.4,686.3 991.8,688.4 987.7,696.1 972.3,694.0" fill="rgb(198,223,198)" fill-opacity="0.93" stroke="#061006" stroke-width="1" stroke-linejoin="round"/>
<polygon points="991.8,688.4 1007.3,690.5 1003.2,698.1 987.7,696.1" fill="rgb(198,223,198)" fill-opacity="0.93" stroke="#061006" stroke-width="1" stroke-linejoin="round"/>
<polygon points="1007.3,690.5 1022.7,692.5 1018.6,700.2 1003.2,698.1" fill="rgb(198,223,198)" fill-opacity="0.93" stroke="#061006" stroke-width="1" stroke-linejoin="round"/>
<polygon points="1022.7,692.5 1038.2,694.6 1034.1,702.3 1018.6,700.2" fill="rgb(198,223,198)" fill-opacity="0.93" stroke="#061006" stroke-width="1" stroke-linejoin="round"/>
<polygon points="1038.2,694.6 1053.6,718.9 1049.5,726.6 1034.1,702.3" fill="rgb(196,221,198)" fill-opacity="0.93" stroke="#061006" stroke-width="1" stroke-linejoin="round"/>
<polygon points="1053.6,718.9 1069.0,732.0 1064.9,739.7 1049.5,726.6" fill="rgb(193,219,197)" fill-opacity="0.93" stroke="#061006" stroke-width="1" stroke-linejoin="round"/>
<polygon points="1069.0,732.0 1084.5,734.1 1080.4,741.8 1064.9,739.7" fill="rgb(192,217,196)" fill-opacity="0.93" stroke="#061006" stroke-width="1" stroke-linejoin="round"/>
<polygon points="1084.5,734.1 1099.9,736.2 1095.8,743.9 1080.4,741.8" fill="rgb(192,217,196)" fill-opacity="0.93" stroke="#061006" stroke-width="1" stroke-linejoin="round"/>
<polygon points="1099.9,736.2 1115.4,738.2 1111.3,745.9 1095.8,743.9" fill="rgb(192,217,196)" fill-opacity="0.93" stroke="#061006" stroke-width="1" stroke-linejoin="round"/>
<polygon points="1115.4,738.2 1130.8,740.3 1126.7,748.0 1111.3,745.9" fill="rgb(192,217,196)" fill-opacity="0.93" stroke="#061006" stroke-width="1" stroke-linejoin="round"/>
<polygon points="1130.8,740.3 1146.2,742.4 1142.1,750.1 1126.7,748.0" fill="rgb(192,217,196)" fill-opacity="0.93" stroke="#061006" stroke-width="1" stroke-linejoin="round"/>
<polygon points="1146.2,742.4 1161.7,744.5 1157.6,752.2 1142.1,750.1" fill="rgb(192,217,196)" fill-opacity="0.93" stroke="#061006" stroke-width="1" stroke-linejoin="round"/>
<polygon points="1161.7,744.5 1177.1,746.5 1173.0,754.2 1157.6,752.2" fill="rgb(192,217,196)" fill-opacity="0.93" stroke="#061006" stroke-width="1" stroke-linejoin="round"/>
<polygon points="1177.1,746.5 1192.6,748.6 1188.5,756.3 1173.0,754.2" fill="rgb(192,217,196)" fill-opacity="0.93" stroke="#061006" stroke-width="1" stroke-linejoin="round"/>
<polygon points="956.9,691.9 972.3,694.0 968.2,701.7 952.8,699.6" fill="rgb(198,223,198)" fill-opacity="0.93" stroke="#061006" stroke-width="1" stroke-linejoin="round"/>
<polygon points="972.3,694.0 987.7,696.1 983.6,703.8 968.2,701.7" fill="rgb(198,223,198)" fill-opacity="0.93" stroke="#061006" stroke-width="1" stroke-linejoin="round"/>
<polygon points="987.7,696.1 1003.2,698.1 999.1,705.8 983.6,703.8" fill="rgb(198,223,198)" fill-opacity="0.93" stroke="#061006" stroke-width="1" stroke-linejoin="round"/>
<polygon points="1003.2,698.1 1018.6,700.2 1014.5,707.9 999.1,705.8" fill="rgb(198,223,198)" fill-opacity="0.93" stroke="#061006" stroke-width="1" stroke-linejoin="round"/>
<polygon points="1018.6,700.2 1034.1,702.3 1030.0,710.0 1014.5,707.9" fill="rgb(198,223,198)" fill-opacity="0.93" stroke="#061006" stroke-width="1" stroke-linejoin="round"/>
<polygon points="1034.1,702.3 1049.5,726.6 1045.4,734.2 1030.0,710.0" fill="rgb(196,221,198)" fill-opacity="0.93" stroke="#061006" stroke-width="1" stroke-linejoin="round"/>
<polygon points="1049.5,726.6 1064.9,739.7 1060.8,747.4 1045.4,734.2" fill="rgb(193,219,197)" fill-opacity="0.93" stroke="#061006" stroke-width="1" stroke-linejoin="round"/>
<polygon points="1064.9,739.7 1080.4,741.8 1076.3,749.5 1060.8,747.4" fill="rgb(192,217,196)" fill-opacity="0.93" stroke="#061006" stroke-width="1" stroke-linejoin="round"/>
<polygon points="1080.4,741.8 1095.8,743.9 1091.7,793.2 1076.3,749.5" fill="rgb(191,217,198)" fill-opacity="0.93" stroke="#061006" stroke-width="1" stroke-linejoin="round"/>
<polygon points="1095.8,743.9 1111.3,745.9 1107.2,795.2 1091.7,793.2" fill="rgb(190,215,197)" fill-opacity="0.93" stroke="#061006" stroke-width="1" stroke-linejoin="round"/>
<polygon points="1111.3,745.9 1126.7,748.0 1122.6,797.3 1107.2,795.2" fill="rgb(190,215,197)" fill-opacity="0.93" stroke="#061006" stroke-width="1" stroke-linejoin="round"/>
<polygon points="1126.7,748.0 1142.1,750.1 1138.0,799.4 1122.6,797.3" fill="rgb(190,215,197)" fill-opacity="0.93" stroke="#061006" stroke-width="1" stroke-linejoin="round"/>
<polygon points="1142.1,750.1 1157.6,752.2 1153.5,801.5 1138.0,799.4" fill="rgb(190,215,197)" fill-opacity="0.93" stroke="#061006" stroke-width="1" stroke-linejoin="round"/>
<polygon points="1157.6,752.2 1173.0,754.2 1168.9,803.5 1153.5,801.5" fill="rgb(190,215,197)" fill-opacity="0.93" stroke="#061006" stroke-width="1" stroke-linejoin="round"/>
<polygon points="1173.0,754.2 1188.5,756.3 1184.4,805.6 1168.9,803.5" fill="rgb(190,215,197)" fill-opacity="0.93" stroke="#061006" stroke-width="1" stroke-linejoin="round"/>
<polygon points="952.8,699.6 968.2,701.7 964.1,709.4 948.6,707.3" fill="rgb(198,223,198)" fill-opacity="0.93" stroke="#061006" stroke-width="1" stroke-linejoin="round"/>
<polygon points="968.2,701.7 983.6,703.8 979.5,711.5 964.1,709.4" fill="rgb(198,223,198)" fill-opacity="0.93" stroke="#061006" stroke-width="1" stroke-linejoin="round"/>
<polygon points="983.6,703.8 999.1,705.8 995.0,713.5 979.5,711.5" fill="rgb(198,223,198)" fill-opacity="0.93" stroke="#061006" stroke-width="1" stroke-linejoin="round"/>
<polygon points="999.1,705.8 1014.5,707.9 1010.4,715.6 995.0,713.5" fill="rgb(198,223,198)" fill-opacity="0.93" stroke="#061006" stroke-width="1" stroke-linejoin="round"/>
<polygon points="1014.5,707.9 1030.0,710.0 1025.8,717.7 1010.4,715.6" fill="rgb(198,223,198)" fill-opacity="0.93" stroke="#061006" stroke-width="1" stroke-linejoin="round"/>
<polygon points="1030.0,710.0 1045.4,734.2 1041.3,741.9 1025.8,717.7" fill="rgb(196,221,198)" fill-opacity="0.93" stroke="#061006" stroke-width="1" stroke-linejoin="round"/>
<polygon points="1045.4,734.2 1060.8,747.4 1056.7,755.1 1041.3,741.9" fill="rgb(193,219,197)" fill-opacity="0.93" stroke="#061006" stroke-width="1" stroke-linejoin="round"/>
<polygon points="1060.8,747.4 1076.3,749.5 1072.2,757.2 1056.7,755.1" fill="rgb(192,217,196)" fill-opacity="0.93" stroke="#061006" stroke-width="1" stroke-linejoin="round"/>
<polygon points="1076.3,749.5 1091.7,793.2 1087.6,800.9 1072.2,757.2" fill="rgb(190,215,197)" fill-opacity="0.93" stroke="#061006" stroke-width="1" stroke-linejoin="round"/>
<polygon points="1091.7,793.2 1107.2,795.2 1103.0,825.1 1087.6,800.9" fill="rgb(184,211,194)" fill-opacity="0.93" stroke="#061006" stroke-width="1" stroke-linejoin="round"/>
<polygon points="1107.2,795.2 1122.6,797.3 1118.5,827.2 1103.0,825.1" fill="rgb(183,210,194)" fill-opacity="0.93" stroke="#061006" stroke-width="1" stroke-linejoin="round"/>
<polygon points="1122.6,797.3 1138.0,799.4 1133.9,829.3 1118.5,827.2" fill="rgb(183,210,194)" fill-opacity="0.93" stroke="#061006" stroke-width="1" stroke-linejoin="round"/>
<polygon points="1138.0,799.4 1153.5,801.5 1149.4,831.3 1133.9,829.3" fill="rgb(183,210,194)" fill-opacity="0.93" stroke="#061006" stroke-width="1" stroke-linejoin="round"/>
<polygon points="1153.5,801.5 1168.9,803.5 1164.8,833.4 1149.4,831.3" fill="rgb(183,210,194)" fill-opacity="0.93" stroke="#061006" stroke-width="1" stroke-linejoin="round"/>
<polygon points="1168.9,803.5 1184.4,805.6 1180.2,835.5 1164.8,833.4" fill="rgb(183,210,194)" fill-opacity="0.93" stroke="#061006" stroke-width="1" stroke-linejoin="round"/>
<polygon points="948.6,707.3 964.1,709.4 960.0,717.1 944.5,715.0" fill="rgb(198,223,198)" fill-opacity="0.93" stroke="#061006" stroke-width="1" stroke-linejoin="round"/>
<polygon points="964.1,709.4 979.5,711.5 975.4,719.2 960.0,717.1" fill="rgb(198,223,198)" fill-opacity="0.93" stroke="#061006" stroke-width="1" stroke-linejoin="round"/>
<polygon points="979.5,711.5 995.0,713.5 990.9,721.2 975.4,719.2" fill="rgb(198,223,198)" fill-opacity="0.93" stroke="#061006" stroke-width="1" stroke-linejoin="round"/>
<polygon points="995.0,713.5 1010.4,715.6 1006.3,723.3 990.9,721.2" fill="rgb(198,223,198)" fill-opacity="0.93" stroke="#061006" stroke-width="1" stroke-linejoin="round"/>
<polygon points="1010.4,715.6 1025.8,717.7 1021.7,725.4 1006.3,723.3" fill="rgb(198,223,198)" fill-opacity="0.93" stroke="#061006" stroke-width="1" stroke-linejoin="round"/>
<polygon points="1025.8,717.7 1041.3,741.9 1037.2,749.6 1021.7,725.4" fill="rgb(196,221,198)" fill-opacity="0.93" stroke="#061006" stroke-width="1" stroke-linejoin="round"/>
<polygon points="1041.3,741.9 1056.7,755.1 1052.6,762.8 1037.2,749.6" fill="rgb(193,219,197)" fill-opacity="0.93" stroke="#061006" stroke-width="1" stroke-linejoin="round"/>
<polygon points="1056.7,755.1 1072.2,757.2 1068.1,764.9 1052.6,762.8" fill="rgb(192,217,196)" fill-opacity="0.93" stroke="#061006" stroke-width="1" stroke-linejoin="round"/>
<polygon points="1072.2,757.2 1087.6,800.9 1083.5,808.5 1068.1,764.9" fill="rgb(190,215,197)" fill-opacity="0.93" stroke="#061006" stroke-width="1" stroke-linejoin="round"/>
<polygon points="1087.6,800.9 1103.0,825.1 1098.9,832.8 1083.5,808.5" fill="rgb(183,210,194)" fill-opacity="0.93" stroke="#061006" stroke-width="1" stroke-linejoin="round"/>
<polygon points="1103.0,825.1 1118.5,827.2 1114.4,834.9 1098.9,832.8" fill="rgb(180,208,192)" fill-opacity="0.93" stroke="#061006" stroke-width="1" stroke-linejoin="round"/>
<polygon points="1118.5,827.2 1133.9,829.3 1129.8,837.0 1114.4,834.9" fill="rgb(180,208,192)" fill-opacity="0.93" stroke="#061006" stroke-width="1" stroke-linejoin="round"/>
<polygon points="1133.9,829.3 1149.4,831.3 1145.3,839.0 1129.8,837.0" fill="rgb(180,208,192)" fill-opacity="0.93" stroke="#061006" stroke-width="1" stroke-linejoin="round"/>
<polygon points="1149.4,831.3 1164.8,833.4 1160.7,841.1 1145.3,839.0" fill="rgb(180,208,192)" fill-opacity="0.93" stroke="#061006" stroke-width="1" stroke-linejoin="round"/>
<polygon points="1164.8,833.4 1180.2,835.5 1176.1,843.2 1160.7,841.1" fill="rgb(180,208,192)" fill-opacity="0.93" stroke="#061006" stroke-width="1" stroke-linejoin="round"/>
<polygon points="944.5,715.0 960.0,717.1 955.9,724.8 940.4,722.7" fill="rgb(198,223,198)" fill-opacity="0.93" stroke="#061006" stroke-width="1" stroke-linejoin="round"/>
<polygon points="960.0,717.1 975.4,719.2 971.3,726.8 955.9,724.8" fill="rgb(198,223,198)" fill-opacity="0.93" stroke="#061006" stroke-width="1" stroke-linejoin="round"/>
<polygon points="975.4,719.2 990.9,721.2 986.8,728.9 971.3,726.8" fill="rgb(198,223,198)" fill-opacity="0.93" stroke="#061006" stroke-width="1" stroke-linejoin="round"/>
<polygon points="990.9,721.2 1006.3,723.3 1002.2,731.0 986.8,728.9" fill="rgb(198,223,198)" fill-opacity="0.93" stroke="#061006" stroke-width="1" stroke-linejoin="round"/>
<polygon points="1006.3,723.3 1021.7,725.4 1017.6,733.1 1002.2,731.0" fill="rgb(198,223,198)" fill-opacity="0.93" stroke="#061006" stroke-width="1" stroke-linejoin="round"/>
<polygon points="1021.7,725.4 1037.2,749.6 1033.1,757.3 1017.6,733.1" fill="rgb(196,221,198)" fill-opacity="0.93" stroke="#061006" stroke-width="1" stroke-linejoin="round"/>
<polygon points="1037.2,749.6 1052.6,762.8 1048.5,770.5 1033.1,757.3" fill="rgb(193,219,197)" fill-opacity="0.93" stroke="#061006" stroke-width="1" stroke-linejoin="round"/>
<polygon points="1052.6,762.8 1068.1,764.9 1064.0,772.6 1048.5,770.5" fill="rgb(192,217,196)" fill-opacity="0.93" stroke="#061006" stroke-width="1" stroke-linejoin="round"/>
<polygon points="1068.1,764.9 1083.5,808.5 1079.4,816.2 1064.0,772.6" fill="rgb(190,215,197)" fill-opacity="0.93" stroke="#061006" stroke-width="1" stroke-linejoin="round"/>
<polygon points="1083.5,808.5 1098.9,832.8 1094.8,840.5 1079.4,816.2" fill="rgb(183,210,194)" fill-opacity="0.93" stroke="#061006" stroke-width="1" stroke-linejoin="round"/>
<polygon points="1098.9,832.8 1114.4,834.9 1110.3,842.6 1094.8,840.5" fill="rgb(180,208,192)" fill-opacity="0.93" stroke="#061006" stroke-width="1" stroke-linejoin="round"/>
<polygon points="1114.4,834.9 1129.8,837.0 1125.7,844.6 1110.3,842.6" fill="rgb(180,208,192)" fill-opacity="0.93" stroke="#061006" stroke-width="1" stroke-linejoin="round"/>
<polygon points="1129.8,837.0 1145.3,839.0 1141.2,846.7 1125.7,844.6" fill="rgb(180,208,192)" fill-opacity="0.93" stroke="#061006" stroke-width="1" stroke-linejoin="round"/>
<polygon points="1145.3,839.0 1160.7,841.1 1156.6,848.8 1141.2,846.7" fill="rgb(180,208,192)" fill-opacity="0.93" stroke="#061006" stroke-width="1" stroke-linejoin="round"/>
<polygon points="1160.7,841.1 1176.1,843.2 1172.0,850.9 1156.6,848.8" fill="rgb(180,208,192)" fill-opacity="0.93" stroke="#061006" stroke-width="1" stroke-linejoin="round"/>
<polygon points="940.4,722.7 955.9,724.8 951.8,732.5 936.3,730.4" fill="rgb(198,223,198)" fill-opacity="0.93" stroke="#061006" stroke-width="1" stroke-linejoin="round"/>
<polygon points="955.9,724.8 971.3,726.8 967.2,734.5 951.8,732.5" fill="rgb(198,223,198)" fill-opacity="0.93" stroke="#061006" stroke-width="1" stroke-linejoin="round"/>
<polygon points="971.3,726.8 986.8,728.9 982.6,736.6 967.2,734.5" fill="rgb(198,223,198)" fill-opacity="0.93" stroke="#061006" stroke-width="1" stroke-linejoin="round"/>
<polygon points="986.8,728.9 1002.2,731.0 998.1,738.7 982.6,736.6" fill="rgb(198,223,198)" fill-opacity="0.93" stroke="#061006" stroke-width="1" stroke-linejoin="round"/>
<polygon points="1002.2,731.0 1017.6,733.1 1013.5,740.8 998.1,738.7" fill="rgb(198,223,198)" fill-opacity="0.93" stroke="#061006" stroke-width="1" stroke-linejoin="round"/>
<polygon points="1017.6,733.1 1033.1,757.3 1029.0,765.0 1013.5,740.8" fill="rgb(196,221,198)" fill-opacity="0.93" stroke="#061006" stroke-width="1" stroke-linejoin="round"/>
<polygon points="1033.1,757.3 1048.5,770.5 1044.4,778.2 1029.0,765.0" fill="rgb(193,219,197)" fill-opacity="0.93" stroke="#061006" stroke-width="1" stroke-linejoin="round"/>
<polygon points="1048.5,770.5 1064.0,772.6 1059.8,780.3 1044.4,778.2" fill="rgb(192,217,196)" fill-opacity="0.93" stroke="#061006" stroke-width="1" stroke-linejoin="round"/>
<polygon points="1064.0,772.6 1079.4,816.2 1075.3,823.9 1059.8,780.3" fill="rgb(190,215,197)" fill-opacity="0.93" stroke="#061006" stroke-width="1" stroke-linejoin="round"/>
<polygon points="1079.4,816.2 1094.8,840.5 1090.7,848.2 1075.3,823.9" fill="rgb(183,210,194)" fill-opacity="0.93" stroke="#061006" stroke-width="1" stroke-linejoin="round"/>
<polygon points="1094.8,840.5 1110.3,842.6 1106.2,850.3 1090.7,848.2" fill="rgb(180,208,192)" fill-opacity="0.93" stroke="#061006" stroke-width="1" stroke-linejoin="round"/>
<polygon points="1110.3,842.6 1125.7,844.6 1121.6,852.3 1106.2,850.3" fill="rgb(180,208,192)" fill-opacity="0.93" stroke="#061006" stroke-width="1" stroke-linejoin="round"/>
<polygon points="1125.7,844.6 1141.2,846.7 1137.0,854.4 1121.6,852.3" fill="rgb(180,208,192)" fill-opacity="0.93" stroke="#061006" stroke-width="1" stroke-linejoin="round"/>
<polygon points="1141.2,846.7 1156.6,848.8 1152.5,856.5 1137.0,854.4" fill="rgb(180,208,192)" fill-opacity="0.93" stroke="#061006" stroke-width="1" stroke-linejoin="round"/>
<polygon points="1156.6,848.8 1172.0,850.9 1167.9,858.6 1152.5,856.5" fill="rgb(180,208,192)" fill-opacity="0.93" stroke="#061006" stroke-width="1" stroke-linejoin="round"/>
<polygon points="936.3,730.4 951.8,732.5 947.7,740.2 932.2,738.1" fill="rgb(198,223,198)" fill-opacity="0.93" stroke="#061006" stroke-width="1" stroke-linejoin="round"/>
<polygon points="951.8,732.5 967.2,734.5 963.1,742.2 947.7,740.2" fill="rgb(198,223,198)" fill-opacity="0.93" stroke="#061006" stroke-width="1" stroke-linejoin="round"/>
<polygon points="967.2,734.5 982.6,736.6 978.5,744.3 963.1,742.2" fill="rgb(198,223,198)" fill-opacity="0.93" stroke="#061006" stroke-width="1" stroke-linejoin="round"/>
<polygon points="982.6,736.6 998.1,738.7 994.0,746.4 978.5,744.3" fill="rgb(198,223,198)" fill-opacity="0.93" stroke="#061006" stroke-width="1" stroke-linejoin="round"/>
<polygon points="998.1,738.7 1013.5,740.8 1009.4,748.5 994.0,746.4" fill="rgb(198,223,198)" fill-opacity="0.93" stroke="#061006" stroke-width="1" stroke-linejoin="round"/>
<polygon points="1013.5,740.8 1029.0,765.0 1024.9,772.7 1009.4,748.5" fill="rgb(196,221,198)" fill-opacity="0.93" stroke="#061006" stroke-width="1" stroke-linejoin="round"/>
<polygon points="1029.0,765.0 1044.4,778.2 1040.3,785.9 1024.9,772.7" fill="rgb(193,219,197)" fill-opacity="0.93" stroke="#061006" stroke-width="1" stroke-linejoin="round"/>
<polygon points="1044.4,778.2 1059.8,780.3 1055.7,788.0 1040.3,785.9" fill="rgb(192,217,196)" fill-opacity="0.93" stroke="#061006" stroke-width="1" stroke-linejoin="round"/>
<polygon points="1059.8,780.3 1075.3,823.9 1071.2,831.6 1055.7,788.0" fill="rgb(190,215,197)" fill-opacity="0.93" stroke="#061006" stroke-width="1" stroke-linejoin="round"/>
<polygon points="1075.3,823.9 1090.7,848.2 1086.6,855.9 1071.2,831.6" fill="rgb(183,210,194)" fill-opacity="0.93" stroke="#061006" stroke-width="1" stroke-linejoin="round"/>
<polygon points="1090.7,848.2 1106.2,850.3 1102.1,858.0 1086.6,855.9" fill="rgb(180,208,192)" fill-opacity="0.93" stroke="#061006" stroke-width="1" stroke-linejoin="round"/>
<polygon points="1106.2,850.3 1121.6,852.3 1117.5,860.0 1102.1,858.0" fill="rgb(180,208,192)" fill-opacity="0.93" stroke="#061006" stroke-width="1" stroke-linejoin="round"/>
<polygon points="1121.6,852.3 1137.0,854.4 1132.9,862.1 1117.5,860.0" fill="rgb(180,208,192)" fill-opacity="0.93" stroke="#061006" stroke-width="1" stroke-linejoin="round"/>
<polygon points="1137.0,854.4 1152.5,856.5 1148.4,864.2 1132.9,862.1" fill="rgb(180,208,192)" fill-opacity="0.93" stroke="#061006" stroke-width="1" stroke-linejoin="round"/>
<polygon points="1152.5,856.5 1167.9,858.6 1163.8,866.3 1148.4,864.2" fill="rgb(180,208,192)" fill-opacity="0.93" stroke="#061006" stroke-width="1" stroke-linejoin="round"/>
<polygon points="932.2,738.1 947.7,740.2 943.6,747.9 928.1,745.8" fill="rgb(198,223,198)" fill-opacity="0.93" stroke="#061006" stroke-width="1" stroke-linejoin="round"/>
<polygon points="947.7,740.2 963.1,742.2 959.0,749.9 943.6,747.9" fill="rgb(198,223,198)" fill-opacity="0.93" stroke="#061006" stroke-width="1" stroke-linejoin="round"/>
<polygon points="963.1,742.2 978.5,744.3 974.4,752.0 959.0,749.9" fill="rgb(198,223,198)" fill-opacity="0.93" stroke="#061006" stroke-width="1" stroke-linejoin="round"/>
<polygon points="978.5,744.3 994.0,746.4 989.9,754.1 974.4,752.0" fill="rgb(198,223,198)" fill-opacity="0.93" stroke="#061006" stroke-width="1" stroke-linejoin="round"/>
<polygon points="994.0,746.4 1009.4,748.5 1005.3,756.1 989.9,754.1" fill="rgb(198,223,198)" fill-opacity="0.93" stroke="#061006" stroke-width="1" stroke-linejoin="round"/>
<polygon points="1009.4,748.5 1024.9,772.7 1020.8,780.4 1005.3,756.1" fill="rgb(196,221,198)" fill-opacity="0.93" stroke="#061006" stroke-width="1" stroke-linejoin="round"/>
<polygon points="1024.9,772.7 1040.3,785.9 1036.2,793.6 1020.8,780.4" fill="rgb(193,219,197)" fill-opacity="0.93" stroke="#061006" stroke-width="1" stroke-linejoin="round"/>
<polygon points="1040.3,785.9 1055.7,788.0 1051.6,795.6 1036.2,793.6" fill="rgb(192,217,196)" fill-opacity="0.93" stroke="#061006" stroke-width="1" stroke-linejoin="round"/>
<polygon points="1055.7,788.0 1071.2,831.6 1067.1,839.3 1051.6,795.6" fill="rgb(190,215,197)" fill-opacity="0.93" stroke="#061006" stroke-width="1" stroke-linejoin="round"/>
<polygon points="1071.2,831.6 1086.6,855.9 1082.5,863.6 1067.1,839.3" fill="rgb(183,210,194)" fill-opacity="0.93" stroke="#061006" stroke-width="1" stroke-linejoin="round"/>
<polygon points="1086.6,855.9 1102.1,858.0 1098.0,865.7 1082.5,863.6" fill="rgb(180,208,192)" fill-opacity="0.93" stroke="#061006" stroke-width="1" stroke-linejoin="round"/>
<polygon points="1102.1,858.0 1117.5,860.0 1113.4,867.7 1098.0,865.7" fill="rgb(180,208,192)" fill-opacity="0.93" stroke="#061006" stroke-width="1" stroke-linejoin="round"/>
<polygon points="1117.5,860.0 1132.9,862.1 1128.8,869.8 1113.4,867.7" fill="rgb(180,208,192)" fill-opacity="0.93" stroke="#061006" stroke-width="1" stroke-linejoin="round"/>
<polygon points="1132.9,862.1 1148.4,864.2 1144.3,871.9 1128.8,869.8" fill="rgb(180,208,192)" fill-opacity="0.93" stroke="#061006" stroke-width="1" stroke-linejoin="round"/>
<polygon points="1148.4,864.2 1163.8,866.3 1159.7,873.9 1144.3,871.9" fill="rgb(180,208,192)" fill-opacity="0.93" stroke="#061006" stroke-width="1" stroke-linejoin="round"/>
<polygon points="928.1,745.8 943.6,747.9 939.4,755.5 924.0,753.5" fill="rgb(198,223,198)" fill-opacity="0.93" stroke="#061006" stroke-width="1" stroke-linejoin="round"/>
<polygon points="943.6,747.9 959.0,749.9 954.9,757.6 939.4,755.5" fill="rgb(198,223,198)" fill-opacity="0.93" stroke="#061006" stroke-width="1" stroke-linejoin="round"/>
<polygon points="959.0,749.9 974.4,752.0 970.3,759.7 954.9,757.6" fill="rgb(198,223,198)" fill-opacity="0.93" stroke="#061006" stroke-width="1" stroke-linejoin="round"/>
<polygon points="974.4,752.0 989.9,754.1 985.8,761.8 970.3,759.7" fill="rgb(198,223,198)" fill-opacity="0.93" stroke="#061006" stroke-width="1" stroke-linejoin="round"/>
<polygon points="989.9,754.1 1005.3,756.1 1001.2,763.8 985.8,761.8" fill="rgb(198,223,198)" fill-opacity="0.93" stroke="#061006" stroke-width="1" stroke-linejoin="round"/>
<polygon points="1005.3,756.1 1020.8,780.4 1016.6,788.1 1001.2,763.8" fill="rgb(196,221,198)" fill-opacity="0.93" stroke="#061006" stroke-width="1" stroke-linejoin="round"/>
<polygon points="1020.8,780.4 1036.2,793.6 1032.1,801.3 1016.6,788.1" fill="rgb(193,219,197)" fill-opacity="0.93" stroke="#061006" stroke-width="1" stroke-linejoin="round"/>
<polygon points="1036.2,793.6 1051.6,795.6 1047.5,803.3 1032.1,801.3" fill="rgb(192,217,196)" fill-opacity="0.93" stroke="#061006" stroke-width="1" stroke-linejoin="round"/>
<polygon points="1051.6,795.6 1067.1,839.3 1063.0,847.0 1047.5,803.3" fill="rgb(190,215,197)" fill-opacity="0.93" stroke="#061006" stroke-width="1" stroke-linejoin="round"/>
<polygon points="1067.1,839.3 1082.5,863.6 1078.4,871.3 1063.0,847.0" fill="rgb(183,210,194)" fill-opacity="0.93" stroke="#061006" stroke-width="1" stroke-linejoin="round"/>
<polygon points="1082.5,863.6 1098.0,865.7 1093.8,873.3 1078.4,871.3" fill="rgb(180,208,192)" fill-opacity="0.93" stroke="#061006" stroke-width="1" stroke-linejoin="round"/>
<polygon points="1098.0,865.7 1113.4,867.7 1109.3,875.4 1093.8,873.3" fill="rgb(180,208,192)" fill-opacity="0.93" stroke="#061006" stroke-width="1" stroke-linejoin="round"/>
<polygon points="1113.4,867.7 1128.8,869.8 1124.7,877.5 1109.3,875.4" fill="rgb(180,208,192)" fill-opacity="0.93" stroke="#061006" stroke-width="1" stroke-linejoin="round"/>
<polygon points="1128.8,869.8 1144.3,871.9 1140.2,879.6 1124.7,877.5" fill="rgb(180,208,192)" fill-opacity="0.93" stroke="#061006" stroke-width="1" stroke-linejoin="round"/>
<polygon points="1144.3,871.9 1159.7,873.9 1155.6,881.6 1140.2,879.6" fill="rgb(180,208,192)" fill-opacity="0.93" stroke="#061006" stroke-width="1" stroke-linejoin="round"/>
<polygon points="924.0,753.5 939.4,755.5 935.3,763.2 919.9,761.2" fill="rgb(198,223,198)" fill-opacity="0.93" stroke="#061006" stroke-width="1" stroke-linejoin="round"/>
<polygon points="939.4,755.5 954.9,757.6 950.8,765.3 935.3,763.2" fill="rgb(198,223,198)" fill-opacity="0.93" stroke="#061006" stroke-width="1" stroke-linejoin="round"/>
<polygon points="954.9,757.6 970.3,759.7 966.2,767.4 950.8,765.3" fill="rgb(198,223,198)" fill-opacity="0.93" stroke="#061006" stroke-width="1" stroke-linejoin="round"/>
<polygon points="970.3,759.7 985.8,761.8 981.7,769.5 966.2,767.4" fill="rgb(198,223,198)" fill-opacity="0.93" stroke="#061006" stroke-width="1" stroke-linejoin="round"/>
<polygon points="985.8,761.8 1001.2,763.8 997.1,771.5 981.7,769.5" fill="rgb(198,223,198)" fill-opacity="0.93" stroke="#061006" stroke-width="1" stroke-linejoin="round"/>
<polygon points="1001.2,763.8 1016.6,788.1 1012.5,795.8 997.1,771.5" fill="rgb(196,221,198)" fill-opacity="0.93" stroke="#061006" stroke-width="1" stroke-linejoin="round"/>
<polygon points="1016.6,788.1 1032.1,801.3 1028.0,809.0 1012.5,795.8" fill="rgb(193,219,197)" fill-opacity="0.93" stroke="#061006" stroke-width="1" stroke-linejoin="round"/>
<polygon points="1032.1,801.3 1047.5,803.3 1043.4,811.0 1028.0,809.0" fill="rgb(192,217,196)" fill-opacity="0.93" stroke="#061006" stroke-width="1" stroke-linejoin="round"/>
<polygon points="1047.5,803.3 1063.0,847.0 1058.9,854.7 1043.4,811.0" fill="rgb(190,215,197)" fill-opacity="0.93" stroke="#061006" stroke-width="1" stroke-linejoin="round"/>
<polygon points="1063.0,847.0 1078.4,871.3 1074.3,879.0 1058.9,854.7" fill="rgb(183,210,194)" fill-opacity="0.93" stroke="#061006" stroke-width="1" stroke-linejoin="round"/>
<polygon points="1078.4,871.3 1093.8,873.3 1089.7,881.0 1074.3,879.0" fill="rgb(180,208,192)" fill-opacity="0.93" stroke="#061006" stroke-width="1" stroke-linejoin="round"/>
<polygon points="1093.8,873.3 1109.3,875.4 1105.2,883.1 1089.7,881.0" fill="rgb(180,208,192)" fill-opacity="0.93" stroke="#061006" stroke-width="1" stroke-linejoin="round"/>
<polygon points="1109.3,875.4 1124.7,877.5 1120.6,885.2 1105.2,883.1" fill="rgb(180,208,192)" fill-opacity="0.93" stroke="#061006" stroke-width="1" stroke-linejoin="round"/>
<polygon points="1124.7,877.5 1140.2,879.6 1136.1,887.3 1120.6,885.2" fill="rgb(180,208,192)" fill-opacity="0.93" stroke="#061006" stroke-width="1" stroke-linejoin="round"/>
<polygon points="1140.2,879.6 1155.6,881.6 1151.5,889.3 1136.1,887.3" fill="rgb(180,208,192)" fill-opacity="0.93" stroke="#061006" stroke-width="1" stroke-linejoin="round"/>
<line x1="981.5" y1="590.3" x2="1213.1" y2="621.4" stroke="#2a2a30" stroke-width="1" stroke-opacity="1"/>
<line x1="981.5" y1="590.3" x2="919.9" y2="705.7" stroke="#2a2a30" stroke-width="1" stroke-opacity="1"/>
<line x1="919.9" y1="705.7" x2="919.9" y2="913.7" stroke="#2a2a30" stroke-width="1" stroke-opacity="1"/>
<line x1="919.9" y1="913.7" x2="1151.5" y2="944.8" stroke="#2a2a30" stroke-width="1" stroke-opacity="1"/>
<line x1="1151.5" y1="944.8" x2="1213.1" y2="829.4" stroke="#2a2a30" stroke-width="1" stroke-opacity="1"/>
<line x1="1213.1" y1="829.4" x2="1213.1" y2="621.4" stroke="#2a2a30" stroke-width="1" stroke-opacity="1"/>
<line x1="1151.5" y1="944.8" x2="1151.5" y2="736.8" stroke="#2a2a30" stroke-width="1" stroke-opacity="0.55"/>
<line x1="919.9" y1="705.7" x2="1151.5" y2="736.8" stroke="#2a2a30" stroke-width="1" stroke-opacity="0.3"/>
<line x1="1151.5" y1="736.8" x2="1213.1" y2="621.4" stroke="#2a2a30" stroke-width="1" stroke-opacity="0.75"/>
<line x1="1213.1" y1="621.4" x2="1220.1" y2="621.4" stroke="#222" stroke-width="1"/>
<text x="1223.6" y="625.4" font-size="11" fill="#1c1c38">0.20</text>
<line x1="1213.1" y1="676.9" x2="1220.1" y2="676.9" stroke="#222" stroke-width="1"/>
<text x="1223.6" y="680.9" font-size="11" fill="#1c1c38">0.00</text>
<line x1="1213.1" y1="732.3" x2="1220.1" y2="732.3" stroke="#222" stroke-width="1"/>
<text x="1224.4" y="736.3" font-size="11" fill="#1c1c38">-0.20</text>
<line x1="1213.1" y1="787.8" x2="1220.1" y2="787.8" stroke="#222" stroke-width="1"/>
<text x="1224.4" y="791.8" font-size="11" fill="#1c1c38">-0.40</text>
<text x="1233.1" y="726.9" font-size="10.500" fill="#1c1c38">Z</text>
<line x1="933.5" y1="915.5" x2="933.5" y2="922.5" stroke="#c01030" stroke-width="1"/>
<text x="931.0" y="934.0" text-anchor="middle" font-size="10.500" fill="#c01030">0,0</text>
<line x1="1006.1" y1="925.3" x2="1006.1" y2="932.3" stroke="#c01030" stroke-width="1"/>
<text x="1003.6" y="943.8" text-anchor="middle" font-size="10.500" fill="#c01030">1,7</text>
<line x1="1078.8" y1="935.0" x2="1078.8" y2="942.0" stroke="#c01030" stroke-width="1"/>
<text x="1076.3" y="953.5" text-anchor="middle" font-size="10.500" fill="#c01030">3,3</text>
<line x1="1151.5" y1="944.8" x2="1151.5" y2="951.8" stroke="#c01030" stroke-width="1"/>
<text x="1149.0" y="963.3" text-anchor="middle" font-size="10.500" fill="#c01030">5,0</text>
<line x1="1209.3" y1="836.6" x2="1209.3" y2="843.6" stroke="#2e7d32" stroke-width="1"/>
<text x="1216.8" y="854.6" text-anchor="middle" font-size="10.500" fill="#3a7a3a">0,0</text>
<line x1="1190.0" y1="872.6" x2="1190.0" y2="879.6" stroke="#2e7d32" stroke-width="1"/>
<text x="1197.5" y="890.6" text-anchor="middle" font-size="10.500" fill="#3a7a3a">1,7</text>
<line x1="1170.8" y1="908.7" x2="1170.8" y2="915.7" stroke="#2e7d32" stroke-width="1"/>
<text x="1178.3" y="926.7" text-anchor="middle" font-size="10.500" fill="#3a7a3a">3,3</text>
<line x1="1151.5" y1="944.8" x2="1151.5" y2="951.8" stroke="#2e7d32" stroke-width="1"/>
<text x="1159.0" y="962.8" text-anchor="middle" font-size="10.500" fill="#3a7a3a">5,0</text>
<text x="1213.6" y="910.4" font-size="10.500" fill="#5a8a5a">Y</text>
<circle cx="981.5" cy="645.8" r="3" fill="#fff" stroke="#222" stroke-width="0.9"/>
<circle cx="1197.7" cy="674.8" r="4.300" fill="#e01010" stroke="#900" stroke-width="0.600"/>
<circle cx="1213.1" cy="676.9" r="4.300" fill="#e01010" stroke="#900" stroke-width="0.600"/>
</svg>
<div class="win active" style="left:405px;top:20px;width:872px;height:475px;background:#1650e2;border-radius:7px 7px 0 0">
<div class="abs" style="right:0;top:28px;width:3px;bottom:0;background:linear-gradient(90deg,#2a62e6 0,#0a2aa6 1px,#001f96 3px)"></div>
<div class="abs" style="left:0;right:0;height:3px;bottom:0;background:linear-gradient(#1a44cc 0,#0a28b0 1px,#001f9c 3px)"></div>
<div class="title"></div>
<svg class="abs" style="left:5px;top:9px" width="16" height="12" viewBox="0 0 16 12">
<ellipse cx="5.800" cy="5.800" rx="5" ry="4.300" fill="#d83a22"/>
<path d="M4 2.500q3.500-2.500 7-1l1.500 1.500l-1 5h-6z" fill="#e0523a"/>
<path d="M6.500 3q2-1.500 4.500-.8l.8 4.800h-5z" fill="#f2c2a8"/>
<path d="M9 .8q1.500-.8 3 .3l-.5 1.200q-1.200-.8-2.500-.5z" fill="#201010"/>
<path d="M12.300 2.500l1.700-.3l-.3 3.300l-1.400.3z" fill="#f4f4f8"/>
<rect x=".5" y="8.800" width="15" height="2.400" fill="#f6f6fa"/>
<path d="M.5 8.800h2v1.200h-2zM4.500 8.800h2v1.200h-2zM2.500 10h2v1.200h-2zM6.500 10h2v1.200h-2zM13.500 10h2v1.200h-2z" fill="#161620"/>
<path d="M3.500 6.500l2 1.500l2-1.500l2 1.500" stroke="#301010" stroke-width="1.100" fill="none"/>
<rect x="10" y="6.200" width="4.500" height="4" fill="#e8c838"/>
<rect x="10" y="5.200" width="2.500" height="1.500" fill="#f8f0d0"/>
</svg>
<div class="ttext">Map 2; Prog. 8</div>
<div class="abs" style="right:6px;top:4px;width:21px;height:21px;border-radius:3px;background:linear-gradient(135deg,#e8846a 0,#d4502c 45%,#c03818 100%);border:1px solid #fff;"><svg width="19" height="19" viewBox="0 0 19 19" style="position:absolute;left:0;top:0"><path d="M5 5l9 9M14 5l-9 9" stroke="#fff" stroke-width="2.200"/></svg></div>
<div class="client" style="left:3px;top:28px;width:866px;height:444px;background:linear-gradient(#b7bfcb 0,#b2bac6 60px,#aab2be 250px,#bdc5ce 340px,#d6dde3 420px,#e0e6ec 443px);overflow:hidden">
<div class="abs" style="left:0;top:0;width:866px;height:28px;background:linear-gradient(#bdc5d0,#b8c0cb)"></div>
<div class="abs" style="left:436px;top:28px;width:430px;height:416px;background:#b3bbc7"></div>
<div class="tbtext" style="left:12px">Shown: P8</div>
<div class="caret" style="left:73px;top:13px"></div>
<div class="tbsep" style="left:90px"></div>
<div class="tbtext" style="left:101px">Send Changes</div>
<div class="caret" style="left:181px;top:13px"></div>
<div class="tbtext" style="left:199px">Axes Ranges</div>
<div class="tbsep" style="left:275px"></div>
<div class="tbtext" style="left:286px">Graph</div>
<div class="hx" style="left:40px;top:33px">0,16</div>
<div class="hx" style="left:64px;top:33px">0,47</div>
<div class="hx" style="left:88px;top:33px">0,78</div>
<div class="hx" style="left:112px;top:33px">1,09</div>
<div class="hx" style="left:136px;top:33px">1,41</div>
<div class="hx" style="left:160px;top:33px">1,72</div>
<div class="hx" style="left:184px;top:33px">2,03</div>
<div class="hx" style="left:208px;top:33px">2,34</div>
<div class="hx" style="left:232px;top:33px">2,66</div>
<div class="hx" style="left:256px;top:33px">2,97</div>
<div class="hx" style="left:280px;top:33px">3,28</div>
<div class="hx" style="left:304px;top:33px">3,59</div>
<div class="hx" style="left:328px;top:33px">3,91</div>
<div class="hx" style="left:352px;top:33px">4,22</div>
<div class="hx" style="left:376px;top:33px">4,53</div>
<div class="hx" style="left:400px;top:33px">4,84</div>
<div class="abs" style="left:41px;top:44px;width:384px;height:5px;background:#f6f6f2;border-top:1px solid #8c949e;border-radius:1px"></div>
<div class="abs" style="left:403px;top:42px;width:4px;height:6px;background:#f8f8f4;border-radius:2px 2px 0 0"></div>
<div class="abs" style="left:31px;top:54px;width:5px;height:384px;background:#f6f6f2;border-left:1px solid #8c949e;border-radius:1px"></div>
<div class="abs" style="left:29px;top:52px;width:5px;height:6px;background:#f8f8f4;border-radius:2px 0 0 2px"></div>
<div class="hy" style="left:2px;top:63px">0,16</div>
<div class="hy" style="left:2px;top:87px">0,47</div>
<div class="hy" style="left:2px;top:111px">0,78</div>
<div class="hy" style="left:2px;top:135px">1,09</div>
<div class="hy" style="left:2px;top:159px">1,41</div>
<div class="hy" style="left:2px;top:183px">1,72</div>
<div class="hy" style="left:2px;top:207px">2,03</div>
<div class="hy" style="left:2px;top:231px">2,34</div>
<div class="hy" style="left:2px;top:255px">2,66</div>
<div class="hy" style="left:2px;top:279px">2,97</div>
<div class="hy" style="left:2px;top:303px">3,28</div>
<div class="hy" style="left:2px;top:327px">3,59</div>
<div class="hy" style="left:2px;top:351px">3,91</div>
<div class="hy" style="left:2px;top:375px">4,22</div>
<div class="hy" style="left:2px;top:399px">4,53</div>
<div class="hy" style="left:2px;top:423px">4,84</div>
<div class="abs" style="left:39px;top:52px;width:386px;height:386px;background:#fff;border:1px solid #98a4b8;border-right-color:#c8d0dc;border-bottom-color:#c8d0dc">
<div class="cell" style="left:0px;top:0px;background:#fff;color:#000">0,00</div>
<div class="cell" style="left:24px;top:0px;background:#f3f3f3;color:#000">0,00</div>
<div class="cell" style="left:48px;top:0px;background:#fff;color:#000">0,00</div>
<div class="cell" style="left:72px;top:0px;background:#f3f3f3;color:#000">0,00</div>
<div class="cell" style="left:96px;top:0px;background:#fff;color:#000">0,00</div>
<div class="cell" style="left:120px;top:0px;background:#f3f3f3;color:#000">0,00</div>
<div class="cell" style="left:144px;top:0px;background:#fff;color:#000">0,00</div>
<div class="cell" style="left:168px;top:0px;background:#f3f3f3;color:#000">0,00</div>
<div class="cell" style="left:192px;top:0px;background:#fff;color:#000">0,00</div>
<div class="cell" style="left:216px;top:0px;background:#f3f3f3;color:#000">0,00</div>
<div class="cell" style="left:240px;top:0px;background:#fff;color:#000">0,00</div>
<div class="cell" style="left:264px;top:0px;background:#f3f3f3;color:#000">0,00</div>
<div class="cell" style="left:288px;top:0px;background:#fff;color:#000">0,00</div>
<div class="cell" style="left:312px;top:0px;background:#f3f3f3;color:#000">0,00</div>
<div class="cell" style="left:336px;top:0px;background:#ff0000;color:#8a0000">0,00</div>
<div class="cell" style="left:360px;top:0px;background:#ff0000;color:#8a0000">0,00</div>
<div class="cell" style="left:0px;top:24px;background:#f3f3f3;color:#000">0,00</div>
<div class="cell" style="left:24px;top:24px;background:#fff;color:#000">0,00</div>
<div class="cell" style="left:48px;top:24px;background:#f3f3f3;color:#000">0,00</div>
<div class="cell" style="left:72px;top:24px;background:#fff;color:#000">0,00</div>
<div class="cell" style="left:96px;top:24px;background:#f3f3f3;color:#000">0,00</div>
<div class="cell" style="left:120px;top:24px;background:#fff;color:#000">0,00</div>
<div class="cell" style="left:144px;top:24px;background:#f3f3f3;color:#000">0,00</div>
<div class="cell" style="left:168px;top:24px;background:#fff;color:#000">0,00</div>
<div class="cell" style="left:192px;top:24px;background:#f3f3f3;color:#000">0,00</div>
<div class="cell" style="left:216px;top:24px;background:#fff;color:#000">0,00</div>
<div class="cell" style="left:240px;top:24px;background:#f3f3f3;color:#000">0,00</div>
<div class="cell" style="left:264px;top:24px;background:#fff;color:#000">0,00</div>
<div class="cell" style="left:288px;top:24px;background:#f3f3f3;color:#000">0,00</div>
<div class="cell" style="left:312px;top:24px;background:#fff;color:#000">0,00</div>
<div class="cell" style="left:336px;top:24px;background:#f3f3f3;color:#000">0,00</div>
<div class="cell" style="left:360px;top:24px;background:#fff;color:#000">0,00</div>
<div class="cell" style="left:0px;top:48px;background:#fff;color:#000">0,00</div>
<div class="cell" style="left:24px;top:48px;background:#f3f3f3;color:#000">0,00</div>
<div class="cell" style="left:48px;top:48px;background:#fff;color:#000">0,00</div>
<div class="cell" style="left:72px;top:48px;background:#f3f3f3;color:#000">0,00</div>
<div class="cell" style="left:96px;top:48px;background:#fff;color:#000">0,00</div>
<div class="cell" style="left:120px;top:48px;background:#f3f3f3;color:#000">0,00</div>
<div class="cell" style="left:144px;top:48px;background:#fff;color:#000">0,00</div>
<div class="cell" style="left:168px;top:48px;background:#f3f3f3;color:#000">0,00</div>
<div class="cell" style="left:192px;top:48px;background:#fff;color:#000">0,00</div>
<div class="cell" style="left:216px;top:48px;background:#f3f3f3;color:#000">0,00</div>
<div class="cell" style="left:240px;top:48px;background:#fff;color:#000">0,00</div>
<div class="cell" style="left:264px;top:48px;background:#f3f3f3;color:#000">0,00</div>
<div class="cell" style="left:288px;top:48px;background:#fff;color:#000">0,00</div>
<div class="cell" style="left:312px;top:48px;background:#f3f3f3;color:#000">0,00</div>
<div class="cell" style="left:336px;top:48px;background:#fff;color:#000">0,00</div>
<div class="cell" style="left:360px;top:48px;background:#f3f3f3;color:#000">0,00</div>
<div class="cell" style="left:0px;top:72px;background:#f3f3f3;color:#000">0,00</div>
<div class="cell" style="left:24px;top:72px;background:#fff;color:#000">0,00</div>
<div class="cell" style="left:48px;top:72px;background:#f3f3f3;color:#000">0,00</div>
<div class="cell" style="left:72px;top:72px;background:#fff;color:#000">0,00</div>
<div class="cell" style="left:96px;top:72px;background:#f3f3f3;color:#000">0,00</div>
<div class="cell" style="left:120px;top:72px;background:#fff;color:#000">0,00</div>
<div class="cell" style="left:144px;top:72px;background:#f3f3f3;color:#000">0,00</div>
<div class="cell" style="left:168px;top:72px;background:#fff;color:#000">0,00</div>
<div class="cell" style="left:192px;top:72px;background:#f3f3f3;color:#000">0,00</div>
<div class="cell" style="left:216px;top:72px;background:#fff;color:#000">0,00</div>
<div class="cell" style="left:240px;top:72px;background:#f3f3f3;color:#000">0,00</div>
<div class="cell" style="left:264px;top:72px;background:#fff;color:#000">0,00</div>
<div class="cell" style="left:288px;top:72px;background:#f3f3f3;color:#000">0,00</div>
<div class="cell" style="left:312px;top:72px;background:#fff;color:#000">0,00</div>
<div class="cell" style="left:336px;top:72px;background:#f3f3f3;color:#000">0,00</div>
<div class="cell" style="left:360px;top:72px;background:#fff;color:#000">0,00</div>
<div class="cell" style="left:0px;top:96px;background:#fff;color:#000">0,00</div>
<div class="cell" style="left:24px;top:96px;background:#f3f3f3;color:#000">0,00</div>
<div class="cell" style="left:48px;top:96px;background:#fff;color:#000">0,00</div>
<div class="cell" style="left:72px;top:96px;background:#f3f3f3;color:#000">0,00</div>
<div class="cell" style="left:96px;top:96px;background:#fff;color:#000">0,00</div>
<div class="cell" style="left:120px;top:96px;background:#f3f3f3;color:#000">0,00</div>
<div class="cell" style="left:144px;top:96px;background:#fff;color:#000">0,00</div>
<div class="cell" style="left:168px;top:96px;background:#f3f3f3;color:#000">0,00</div>
<div class="cell" style="left:192px;top:96px;background:#fff;color:#000">0,00</div>
<div class="cell" style="left:216px;top:96px;background:#f3f3f3;color:#000">0,00</div>
<div class="cell" style="left:240px;top:96px;background:#fff;color:#000">0,00</div>
<div class="cell" style="left:264px;top:96px;background:#f3f3f3;color:#000">0,00</div>
<div class="cell" style="left:288px;top:96px;background:#fff;color:#000">0,00</div>
<div class="cell" style="left:312px;top:96px;background:#f3f3f3;color:#000">0,00</div>
<div class="cell" style="left:336px;top:96px;background:#fff;color:#000">0,00</div>
<div class="cell" style="left:360px;top:96px;background:#f3f3f3;color:#000">0,00</div>
<div class="cell" style="left:0px;top:120px;background:#f3f3f3;color:#000">0,00</div>
<div class="cell" style="left:24px;top:120px;background:#fff;color:#000">0,00</div>
<div class="cell" style="left:48px;top:120px;background:#f3f3f3;color:#000">0,00</div>
<div class="cell" style="left:72px;top:120px;background:#fff;color:#000">0,00</div>
<div class="cell" style="left:96px;top:120px;background:#f3f3f3;color:#000">0,00</div>
<div class="cell" style="left:120px;top:120px;background:#fff;color:#000">0,00</div>
<div class="cell" style="left:144px;top:120px;background:#f3f3f3;color:#000">0,00</div>
<div class="cell" style="left:168px;top:120px;background:#fff;color:#000">0,00</div>
<div class="cell" style="left:192px;top:120px;background:#f3f3f3;color:#000">0,00</div>
<div class="cell" style="left:216px;top:120px;background:#fff;color:#000">0,00</div>
<div class="cell" style="left:240px;top:120px;background:#f3f3f3;color:#000">0,00</div>
<div class="cell" style="left:264px;top:120px;background:#fff;color:#000">0,00</div>
<div class="cell" style="left:288px;top:120px;background:#f3f3f3;color:#000">0,00</div>
<div class="cell" style="left:312px;top:120px;background:#fff;color:#000">0,00</div>
<div class="cell" style="left:336px;top:120px;background:#f3f3f3;color:#000">0,00</div>
<div class="cell" style="left:360px;top:120px;background:#fff;color:#000">0,00</div>
<div class="cell" style="left:0px;top:144px;background:#fff;color:#000">0,00</div>
<div class="cell" style="left:24px;top:144px;background:#f3f3f3;color:#000">0,00</div>
<div class="cell" style="left:48px;top:144px;background:#fff;color:#000">0,00</div>
<div class="cell" style="left:72px;top:144px;background:#f3f3f3;color:#000">0,00</div>
<div class="cell" style="left:96px;top:144px;background:#fff;color:#000">0,00</div>
<div class="cell" style="left:120px;top:144px;background:#f3f3f3;color:#000">0,00</div>
<div class="cell" style="left:144px;top:144px;background:#fff;color:#000">0,00</div>
<div class="cell" style="left:168px;top:144px;background:#f3f3f3;color:#000">0,00</div>
<div class="cell" style="left:192px;top:144px;background:#fff;color:#000">-0,04</div>
<div class="cell" style="left:216px;top:144px;background:#f3f3f3;color:#000">-0,04</div>
<div class="cell" style="left:240px;top:144px;background:#fff;color:#000">-0,04</div>
<div class="cell" style="left:264px;top:144px;background:#f3f3f3;color:#000">-0,04</div>
<div class="cell" style="left:288px;top:144px;background:#fff;color:#000">-0,04</div>
<div class="cell" style="left:312px;top:144px;background:#f3f3f3;color:#000">-0,04</div>
<div class="cell" style="left:336px;top:144px;background:#fff;color:#000">-0,04</div>
<div class="cell" style="left:360px;top:144px;background:#f3f3f3;color:#000">-0,04</div>
<div class="cell" style="left:0px;top:168px;background:#f3f3f3;color:#000">0,00</div>
<div class="cell" style="left:24px;top:168px;background:#fff;color:#000">0,00</div>
<div class="cell" style="left:48px;top:168px;background:#f3f3f3;color:#000">0,00</div>
<div class="cell" style="left:72px;top:168px;background:#fff;color:#000">0,00</div>
<div class="cell" style="left:96px;top:168px;background:#f3f3f3;color:#000">0,00</div>
<div class="cell" style="left:120px;top:168px;background:#fff;color:#000">0,00</div>
<div class="cell" style="left:144px;top:168px;background:#f3f3f3;color:#000">0,00</div>
<div class="cell" style="left:168px;top:168px;background:#fff;color:#000">0,00</div>
<div class="cell" style="left:192px;top:168px;background:#f3f3f3;color:#000">-0,04</div>
<div class="cell" style="left:216px;top:168px;background:#fff;color:#000">-0,08</div>
<div class="cell" style="left:240px;top:168px;background:#f3f3f3;color:#000">-0,08</div>
<div class="cell" style="left:264px;top:168px;background:#fff;color:#000">-0,08</div>
<div class="cell" style="left:288px;top:168px;background:#f3f3f3;color:#000">-0,08</div>
<div class="cell" style="left:312px;top:168px;background:#fff;color:#000">-0,08</div>
<div class="cell" style="left:336px;top:168px;background:#f3f3f3;color:#000">-0,08</div>
<div class="cell" style="left:360px;top:168px;background:#fff;color:#000">-0,08</div>
<div class="cell" style="left:0px;top:192px;background:#fff;color:#000">0,00</div>
<div class="cell" style="left:24px;top:192px;background:#f3f3f3;color:#000">0,00</div>
<div class="cell" style="left:48px;top:192px;background:#fff;color:#000">0,00</div>
<div class="cell" style="left:72px;top:192px;background:#f3f3f3;color:#000">0,00</div>
<div class="cell" style="left:96px;top:192px;background:#fff;color:#000">0,00</div>
<div class="cell" style="left:120px;top:192px;background:#f3f3f3;color:#000">0,00</div>
<div class="cell" style="left:144px;top:192px;background:#fff;color:#000">0,00</div>
<div class="cell" style="left:168px;top:192px;background:#f3f3f3;color:#000">0,00</div>
<div class="cell" style="left:192px;top:192px;background:#fff;color:#000">-0,04</div>
<div class="cell" style="left:216px;top:192px;background:#f3f3f3;color:#000">-0,08</div>
<div class="cell" style="left:240px;top:192px;background:#fff;color:#000">-0,12</div>
<div class="cell" style="left:264px;top:192px;background:#f3f3f3;color:#000">-0,12</div>
<div class="cell" style="left:288px;top:192px;background:#fff;color:#000">-0,12</div>
<div class="cell" style="left:312px;top:192px;background:#f3f3f3;color:#000">-0,12</div>
<div class="cell" style="left:336px;top:192px;background:#fff;color:#000">-0,12</div>
<div class="cell" style="left:360px;top:192px;background:#f3f3f3;color:#000">-0,12</div>
<div class="cell" style="left:0px;top:216px;background:#f3f3f3;color:#000">0,00</div>
<div class="cell" style="left:24px;top:216px;background:#fff;color:#000">0,00</div>
<div class="cell" style="left:48px;top:216px;background:#f3f3f3;color:#000">0,00</div>
<div class="cell" style="left:72px;top:216px;background:#fff;color:#000">0,00</div>
<div class="cell" style="left:96px;top:216px;background:#f3f3f3;color:#000">0,00</div>
<div class="cell" style="left:120px;top:216px;background:#fff;color:#000">0,00</div>
<div class="cell" style="left:144px;top:216px;background:#f3f3f3;color:#000">0,00</div>
<div class="cell" style="left:168px;top:216px;background:#fff;color:#000">-0,04</div>
<div class="cell" style="left:192px;top:216px;background:#f3f3f3;color:#000">-0,08</div>
<div class="cell" style="left:216px;top:216px;background:#fff;color:#000">-0,12</div>
<div class="cell" style="left:240px;top:216px;background:#f3f3f3;color:#000">-0,12</div>
<div class="cell" style="left:264px;top:216px;background:#fff;color:#000">-0,16</div>
<div class="cell" style="left:288px;top:216px;background:#f3f3f3;color:#000">-0,16</div>
<div class="cell" style="left:312px;top:216px;background:#fff;color:#000">-0,16</div>
<div class="cell" style="left:336px;top:216px;background:#f3f3f3;color:#000">-0,16</div>
<div class="cell" style="left:360px;top:216px;background:#fff;color:#000">-0,16</div>
<div class="cell" style="left:0px;top:240px;background:#fff;color:#000">0,00</div>
<div class="cell" style="left:24px;top:240px;background:#f3f3f3;color:#000">0,00</div>
<div class="cell" style="left:48px;top:240px;background:#fff;color:#000">0,00</div>
<div class="cell" style="left:72px;top:240px;background:#f3f3f3;color:#000">0,00</div>
<div class="cell" style="left:96px;top:240px;background:#fff;color:#000">0,00</div>
<div class="cell" style="left:120px;top:240px;background:#f3f3f3;color:#000">0,00</div>
<div class="cell" style="left:144px;top:240px;background:#fff;color:#000">0,00</div>
<div class="cell" style="left:168px;top:240px;background:#f3f3f3;color:#000">-0,04</div>
<div class="cell" style="left:192px;top:240px;background:#fff;color:#000">-0,08</div>
<div class="cell" style="left:216px;top:240px;background:#f3f3f3;color:#000">-0,12</div>
<div class="cell" style="left:240px;top:240px;background:#fff;color:#000">-0,12</div>
<div class="cell" style="left:264px;top:240px;background:#f3f3f3;color:#000">-0,16</div>
<div class="cell" style="left:288px;top:240px;background:#fff;color:#000">-0,16</div>
<div class="cell" style="left:312px;top:240px;background:#f3f3f3;color:#000">-0,16</div>
<div class="cell" style="left:336px;top:240px;background:#fff;color:#000">-0,16</div>
<div class="cell" style="left:360px;top:240px;background:#f3f3f3;color:#000">-0,16</div>
<div class="cell" style="left:0px;top:264px;background:#f3f3f3;color:#000">0,00</div>
<div class="cell" style="left:24px;top:264px;background:#fff;color:#000">0,00</div>
<div class="cell" style="left:48px;top:264px;background:#f3f3f3;color:#000">0,00</div>
<div class="cell" style="left:72px;top:264px;background:#fff;color:#000">0,00</div>
<div class="cell" style="left:96px;top:264px;background:#f3f3f3;color:#000">0,00</div>
<div class="cell" style="left:120px;top:264px;background:#fff;color:#000">0,00</div>
<div class="cell" style="left:144px;top:264px;background:#f3f3f3;color:#000">0,00</div>
<div class="cell" style="left:168px;top:264px;background:#fff;color:#000">-0,04</div>
<div class="cell" style="left:192px;top:264px;background:#f3f3f3;color:#000">-0,08</div>
<div class="cell" style="left:216px;top:264px;background:#fff;color:#000">-0,12</div>
<div class="cell" style="left:240px;top:264px;background:#f3f3f3;color:#000">-0,12</div>
<div class="cell" style="left:264px;top:264px;background:#fff;color:#000">-0,16</div>
<div class="cell" style="left:288px;top:264px;background:#f3f3f3;color:#000">-0,16</div>
<div class="cell" style="left:312px;top:264px;background:#fff;color:#000">-0,16</div>
<div class="cell" style="left:336px;top:264px;background:#f3f3f3;color:#000">-0,16</div>
<div class="cell" style="left:360px;top:264px;background:#fff;color:#000">-0,16</div>
<div class="cell" style="left:0px;top:288px;background:#fff;color:#000">0,00</div>
<div class="cell" style="left:24px;top:288px;background:#f3f3f3;color:#000">0,00</div>
<div class="cell" style="left:48px;top:288px;background:#fff;color:#000">0,00</div>
<div class="cell" style="left:72px;top:288px;background:#f3f3f3;color:#000">0,00</div>
<div class="cell" style="left:96px;top:288px;background:#fff;color:#000">0,00</div>
<div class="cell" style="left:120px;top:288px;background:#f3f3f3;color:#000">0,00</div>
<div class="cell" style="left:144px;top:288px;background:#fff;color:#000">0,00</div>
<div class="cell" style="left:168px;top:288px;background:#f3f3f3;color:#000">-0,04</div>
<div class="cell" style="left:192px;top:288px;background:#fff;color:#000">-0,08</div>
<div class="cell" style="left:216px;top:288px;background:#f3f3f3;color:#000">-0,12</div>
<div class="cell" style="left:240px;top:288px;background:#fff;color:#000">-0,12</div>
<div class="cell" style="left:264px;top:288px;background:#f3f3f3;color:#000">-0,16</div>
<div class="cell" style="left:288px;top:288px;background:#fff;color:#000">-0,16</div>
<div class="cell" style="left:312px;top:288px;background:#f3f3f3;color:#000">-0,16</div>
<div class="cell" style="left:336px;top:288px;background:#fff;color:#000">-0,16</div>
<div class="cell" style="left:360px;top:288px;background:#f3f3f3;color:#000">-0,16</div>
<div class="cell" style="left:0px;top:312px;background:#f3f3f3;color:#000">0,00</div>
<div class="cell" style="left:24px;top:312px;background:#fff;color:#000">0,00</div>
<div class="cell" style="left:48px;top:312px;background:#f3f3f3;color:#000">0,00</div>
<div class="cell" style="left:72px;top:312px;background:#fff;color:#000">0,00</div>
<div class="cell" style="left:96px;top:312px;background:#f3f3f3;color:#000">0,00</div>
<div class="cell" style="left:120px;top:312px;background:#fff;color:#000">0,00</div>
<div class="cell" style="left:144px;top:312px;background:#f3f3f3;color:#000">0,00</div>
<div class="cell" style="left:168px;top:312px;background:#fff;color:#000">-0,04</div>
<div class="cell" style="left:192px;top:312px;background:#f3f3f3;color:#000">-0,08</div>
<div class="cell" style="left:216px;top:312px;background:#fff;color:#000">-0,12</div>
<div class="cell" style="left:240px;top:312px;background:#f3f3f3;color:#000">-0,12</div>
<div class="cell" style="left:264px;top:312px;background:#fff;color:#000">-0,16</div>
<div class="cell" style="left:288px;top:312px;background:#f3f3f3;color:#000">-0,16</div>
<div class="cell" style="left:312px;top:312px;background:#fff;color:#000">-0,16</div>
<div class="cell" style="left:336px;top:312px;background:#f3f3f3;color:#000">-0,16</div>
<div class="cell" style="left:360px;top:312px;background:#fff;color:#000">-0,16</div>
<div class="cell" style="left:0px;top:336px;background:#fff;color:#000">0,00</div>
<div class="cell" style="left:24px;top:336px;background:#f3f3f3;color:#000">0,00</div>
<div class="cell" style="left:48px;top:336px;background:#fff;color:#000">0,00</div>
<div class="cell" style="left:72px;top:336px;background:#f3f3f3;color:#000">0,00</div>
<div class="cell" style="left:96px;top:336px;background:#fff;color:#000">0,00</div>
<div class="cell" style="left:120px;top:336px;background:#f3f3f3;color:#000">0,00</div>
<div class="cell" style="left:144px;top:336px;background:#fff;color:#000">0,00</div>
<div class="cell" style="left:168px;top:336px;background:#f3f3f3;color:#000">-0,04</div>
<div class="cell" style="left:192px;top:336px;background:#fff;color:#000">-0,08</div>
<div class="cell" style="left:216px;top:336px;background:#f3f3f3;color:#000">-0,12</div>
<div class="cell" style="left:240px;top:336px;background:#fff;color:#000">-0,12</div>
<div class="cell" style="left:264px;top:336px;background:#f3f3f3;color:#000">-0,16</div>
<div class="cell" style="left:288px;top:336px;background:#fff;color:#000">-0,16</div>
<div class="cell" style="left:312px;top:336px;background:#f3f3f3;color:#000">-0,16</div>
<div class="cell" style="left:336px;top:336px;background:#fff;color:#000">-0,16</div>
<div class="cell" style="left:360px;top:336px;background:#f3f3f3;color:#000">-0,16</div>
<div class="cell" style="left:0px;top:360px;background:#f3f3f3;color:#000">0,00</div>
<div class="cell" style="left:24px;top:360px;background:#fff;color:#000">0,00</div>
<div class="cell" style="left:48px;top:360px;background:#f3f3f3;color:#000">0,00</div>
<div class="cell" style="left:72px;top:360px;background:#fff;color:#000">0,00</div>
<div class="cell" style="left:96px;top:360px;background:#f3f3f3;color:#000">0,00</div>
<div class="cell" style="left:120px;top:360px;background:#fff;color:#000">0,00</div>
<div class="cell" style="left:144px;top:360px;background:#f3f3f3;color:#000">0,00</div>
<div class="cell" style="left:168px;top:360px;background:#fff;color:#000">-0,04</div>
<div class="cell" style="left:192px;top:360px;background:#f3f3f3;color:#000">-0,08</div>
<div class="cell" style="left:216px;top:360px;background:#fff;color:#000">-0,12</div>
<div class="cell" style="left:240px;top:360px;background:#f3f3f3;color:#000">-0,12</div>
<div class="cell" style="left:264px;top:360px;background:#fff;color:#000">-0,16</div>
<div class="cell" style="left:288px;top:360px;background:#f3f3f3;color:#000">-0,16</div>
<div class="cell" style="left:312px;top:360px;background:#fff;color:#000">-0,16</div>
<div class="cell" style="left:336px;top:360px;background:#f3f3f3;color:#000">-0,16</div>
<div class="cell" style="left:360px;top:360px;background:#fff;color:#000">-0,16</div>
<div class="abs" style="left:0;top:0;width:24px;height:24px;border:1px dotted #000;outline:1px solid #000;outline-offset:-1px;border:none"></div>
<div class="abs" style="left:1px;top:1px;width:22px;height:22px;border:1px dotted #fff"></div>
</div>
<div class="abs" style="left:436px;top:28px;width:434px;height:21px;background:#a0a0a6;border-top:1px solid #8e9098"></div>
<div class="abs" style="left:436px;top:49px;width:434px;height:444px;background:#b9bec7;border-left:1px solid #9ea4b0"></div>
<div class="abs" style="left:439px;top:30px;width:50px;height:19px;background:#fff;border-right:1px solid #d8d8dc"></div>
<div class="t" style="left:442px;top:33px;font-size:10.500px;color:#15151d;letter-spacing:-0.12px">Graph 3D</div>
<div class="abs" style="left:441px;top:52px;width:430px;height:444px;background:#fff;border-left:2px solid #0c0c0c;border-top:2px solid #0c0c0c"></div>
</div>
</div>
<svg class="abs" style="left:851px;top:102px;width:423px;height:389px" viewBox="851 102 423 389" font-family='"Liberation Sans","DejaVu Sans",sans-serif'>
<polygon points="979.5,119.3 1211.1,150.4 1211.1,358.4 1149.5,473.8 917.9,442.7 917.9,234.7" fill="#d6d6e0"/>
<polygon points="917.9,234.7 1149.5,265.8 1149.5,473.8 917.9,442.7" fill="#e4e4f2"/>
<polygon points="1149.5,265.8 1211.1,150.4 1211.1,358.4 1149.5,473.8" fill="#c7c7cb"/>
<line x1="979.5" y1="119.3" x2="979.5" y2="327.3" stroke="#b0b0ba" stroke-width="1"/>
<line x1="979.5" y1="327.3" x2="1211.1" y2="358.4" stroke="#b0b0ba" stroke-width="1"/>
<line x1="979.5" y1="327.3" x2="917.9" y2="442.7" stroke="#b0b0ba" stroke-width="1"/>
<polygon points="979.5,193.6 994.9,195.7 990.8,203.4 975.4,201.3" fill="rgb(198,223,198)" fill-opacity="0.93" stroke="#061006" stroke-width="1" stroke-linejoin="round"/>
<polygon points="994.9,195.7 1010.4,197.7 1006.3,205.4 990.8,203.4" fill="rgb(198,223,198)" fill-opacity="0.93" stroke="#061006" stroke-width="1" stroke-linejoin="round"/>
<polygon points="1010.4,197.7 1025.8,199.8 1021.7,207.5 1006.3,205.4" fill="rgb(198,223,198)" fill-opacity="0.93" stroke="#061006" stroke-width="1" stroke-linejoin="round"/>
<polygon points="1025.8,199.8 1041.3,201.9 1037.2,209.6 1021.7,207.5" fill="rgb(198,223,198)" fill-opacity="0.93" stroke="#061006" stroke-width="1" stroke-linejoin="round"/>
<polygon points="1041.3,201.9 1056.7,204.0 1052.6,211.6 1037.2,209.6" fill="rgb(198,223,198)" fill-opacity="0.93" stroke="#061006" stroke-width="1" stroke-linejoin="round"/>
<polygon points="1056.7,204.0 1072.1,206.0 1068.0,213.7 1052.6,211.6" fill="rgb(198,223,198)" fill-opacity="0.93" stroke="#061006" stroke-width="1" stroke-linejoin="round"/>
<polygon points="1072.1,206.0 1087.6,208.1 1083.5,215.8 1068.0,213.7" fill="rgb(198,223,198)" fill-opacity="0.93" stroke="#061006" stroke-width="1" stroke-linejoin="round"/>
<polygon points="1087.6,208.1 1103.0,210.2 1098.9,217.9 1083.5,215.8" fill="rgb(198,223,198)" fill-opacity="0.93" stroke="#061006" stroke-width="1" stroke-linejoin="round"/>
<polygon points="1103.0,210.2 1118.5,212.2 1114.4,219.9 1098.9,217.9" fill="rgb(198,223,198)" fill-opacity="0.93" stroke="#061006" stroke-width="1" stroke-linejoin="round"/>
<polygon points="1118.5,212.2 1133.9,214.3 1129.8,222.0 1114.4,219.9" fill="rgb(198,223,198)" fill-opacity="0.93" stroke="#061006" stroke-width="1" stroke-linejoin="round"/>
<polygon points="1133.9,214.3 1149.3,216.4 1145.2,224.1 1129.8,222.0" fill="rgb(198,223,198)" fill-opacity="0.93" stroke="#061006" stroke-width="1" stroke-linejoin="round"/>
<polygon points="1149.3,216.4 1164.8,218.5 1160.7,226.2 1145.2,224.1" fill="rgb(198,223,198)" fill-opacity="0.93" stroke="#061006" stroke-width="1" stroke-linejoin="round"/>
<polygon points="1164.8,218.5 1180.2,220.5 1176.1,228.2 1160.7,226.2" fill="rgb(198,223,198)" fill-opacity="0.93" stroke="#061006" stroke-width="1" stroke-linejoin="round"/>
<polygon points="1180.2,220.5 1195.7,222.6 1191.6,230.3 1176.1,228.2" fill="rgb(198,223,198)" fill-opacity="0.93" stroke="#061006" stroke-width="1" stroke-linejoin="round"/>
<polygon points="1195.7,222.6 1211.1,224.7 1207.0,232.4 1191.6,230.3" fill="rgb(198,223,198)" fill-opacity="0.93" stroke="#061006" stroke-width="1" stroke-linejoin="round"/>
<polygon points="975.4,201.3 990.8,203.4 986.7,211.0 971.3,209.0" fill="rgb(198,223,198)" fill-opacity="0.93" stroke="#061006" stroke-width="1" stroke-linejoin="round"/>
<polygon points="990.8,203.4 1006.3,205.4 1002.2,213.1 986.7,211.0" fill="rgb(198,223,198)" fill-opacity="0.93" stroke="#061006" stroke-width="1" stroke-linejoin="round"/>
<polygon points="1006.3,205.4 1021.7,207.5 1017.6,215.2 1002.2,213.1" fill="rgb(198,223,198)" fill-opacity="0.93" stroke="#061006" stroke-width="1" stroke-linejoin="round"/>
<polygon points="1021.7,207.5 1037.2,209.6 1033.0,217.3 1017.6,215.2" fill="rgb(198,223,198)" fill-opacity="0.93" stroke="#061006" stroke-width="1" stroke-linejoin="round"/>
<polygon points="1037.2,209.6 1052.6,211.6 1048.5,219.3 1033.0,217.3" fill="rgb(198,223,198)" fill-opacity="0.93" stroke="#061006" stroke-width="1" stroke-linejoin="round"/>
<polygon points="1052.6,211.6 1068.0,213.7 1063.9,221.4 1048.5,219.3" fill="rgb(198,223,198)" fill-opacity="0.93" stroke="#061006" stroke-width="1" stroke-linejoin="round"/>
<polygon points="1068.0,213.7 1083.5,215.8 1079.4,223.5 1063.9,221.4" fill="rgb(198,223,198)" fill-opacity="0.93" stroke="#061006" stroke-width="1" stroke-linejoin="round"/>
<polygon points="1083.5,215.8 1098.9,217.9 1094.8,225.6 1079.4,223.5" fill="rgb(198,223,198)" fill-opacity="0.93" stroke="#061006" stroke-width="1" stroke-linejoin="round"/>
<polygon points="1098.9,217.9 1114.4,219.9 1110.2,227.6 1094.8,225.6" fill="rgb(198,223,198)" fill-opacity="0.93" stroke="#061006" stroke-width="1" stroke-linejoin="round"/>
<polygon points="1114.4,219.9 1129.8,222.0 1125.7,229.7 1110.2,227.6" fill="rgb(198,223,198)" fill-opacity="0.93" stroke="#061006" stroke-width="1" stroke-linejoin="round"/>
<polygon points="1129.8,222.0 1145.2,224.1 1141.1,231.8 1125.7,229.7" fill="rgb(198,223,198)" fill-opacity="0.93" stroke="#061006" stroke-width="1" stroke-linejoin="round"/>
<polygon points="1145.2,224.1 1160.7,226.2 1156.6,233.9 1141.1,231.8" fill="rgb(198,223,198)" fill-opacity="0.93" stroke="#061006" stroke-width="1" stroke-linejoin="round"/>
<polygon points="1160.7,226.2 1176.1,228.2 1172.0,235.9 1156.6,233.9" fill="rgb(198,223,198)" fill-opacity="0.93" stroke="#061006" stroke-width="1" stroke-linejoin="round"/>
<polygon points="1176.1,228.2 1191.6,230.3 1187.4,238.0 1172.0,235.9" fill="rgb(198,223,198)" fill-opacity="0.93" stroke="#061006" stroke-width="1" stroke-linejoin="round"/>
<polygon points="1191.6,230.3 1207.0,232.4 1202.9,240.1 1187.4,238.0" fill="rgb(198,223,198)" fill-opacity="0.93" stroke="#061006" stroke-width="1" stroke-linejoin="round"/>
<polygon points="971.3,209.0 986.7,211.0 982.6,218.7 967.2,216.7" fill="rgb(198,223,198)" fill-opacity="0.93" stroke="#061006" stroke-width="1" stroke-linejoin="round"/>
<polygon points="986.7,211.0 1002.2,213.1 998.1,220.8 982.6,218.7" fill="rgb(198,223,198)" fill-opacity="0.93" stroke="#061006" stroke-width="1" stroke-linejoin="round"/>
<polygon points="1002.2,213.1 1017.6,215.2 1013.5,222.9 998.1,220.8" fill="rgb(198,223,198)" fill-opacity="0.93" stroke="#061006" stroke-width="1" stroke-linejoin="round"/>
<polygon points="1017.6,215.2 1033.0,217.3 1028.9,225.0 1013.5,222.9" fill="rgb(198,223,198)" fill-opacity="0.93" stroke="#061006" stroke-width="1" stroke-linejoin="round"/>
<polygon points="1033.0,217.3 1048.5,219.3 1044.4,227.0 1028.9,225.0" fill="rgb(198,223,198)" fill-opacity="0.93" stroke="#061006" stroke-width="1" stroke-linejoin="round"/>
<polygon points="1048.5,219.3 1063.9,221.4 1059.8,229.1 1044.4,227.0" fill="rgb(198,223,198)" fill-opacity="0.93" stroke="#061006" stroke-width="1" stroke-linejoin="round"/>
<polygon points="1063.9,221.4 1079.4,223.5 1075.3,231.2 1059.8,229.1" fill="rgb(198,223,198)" fill-opacity="0.93" stroke="#061006" stroke-width="1" stroke-linejoin="round"/>
<polygon points="1079.4,223.5 1094.8,225.6 1090.7,233.3 1075.3,231.2" fill="rgb(198,223,198)" fill-opacity="0.93" stroke="#061006" stroke-width="1" stroke-linejoin="round"/>
<polygon points="1094.8,225.6 1110.2,227.6 1106.1,235.3 1090.7,233.3" fill="rgb(198,223,198)" fill-opacity="0.93" stroke="#061006" stroke-width="1" stroke-linejoin="round"/>
<polygon points="1110.2,227.6 1125.7,229.7 1121.6,237.4 1106.1,235.3" fill="rgb(198,223,198)" fill-opacity="0.93" stroke="#061006" stroke-width="1" stroke-linejoin="round"/>
<polygon points="1125.7,229.7 1141.1,231.8 1137.0,239.5 1121.6,237.4" fill="rgb(198,223,198)" fill-opacity="0.93" stroke="#061006" stroke-width="1" stroke-linejoin="round"/>
<polygon points="1141.1,231.8 1156.6,233.9 1152.5,241.5 1137.0,239.5" fill="rgb(198,223,198)" fill-opacity="0.93" stroke="#061006" stroke-width="1" stroke-linejoin="round"/>
<polygon points="1156.6,233.9 1172.0,235.9 1167.9,243.6 1152.5,241.5" fill="rgb(198,223,198)" fill-opacity="0.93" stroke="#061006" stroke-width="1" stroke-linejoin="round"/>
<polygon points="1172.0,235.9 1187.4,238.0 1183.3,245.7 1167.9,243.6" fill="rgb(198,223,198)" fill-opacity="0.93" stroke="#061006" stroke-width="1" stroke-linejoin="round"/>
<polygon points="1187.4,238.0 1202.9,240.1 1198.8,247.8 1183.3,245.7" fill="rgb(198,223,198)" fill-opacity="0.93" stroke="#061006" stroke-width="1" stroke-linejoin="round"/>
<polygon points="967.2,216.7 982.6,218.7 978.5,226.4 963.1,224.4" fill="rgb(198,223,198)" fill-opacity="0.93" stroke="#061006" stroke-width="1" stroke-linejoin="round"/>
<polygon points="982.6,218.7 998.1,220.8 994.0,228.5 978.5,226.4" fill="rgb(198,223,198)" fill-opacity="0.93" stroke="#061006" stroke-width="1" stroke-linejoin="round"/>
<polygon points="998.1,220.8 1013.5,222.9 1009.4,230.6 994.0,228.5" fill="rgb(198,223,198)" fill-opacity="0.93" stroke="#061006" stroke-width="1" stroke-linejoin="round"/>
<polygon points="1013.5,222.9 1028.9,225.0 1024.8,232.7 1009.4,230.6" fill="rgb(198,223,198)" fill-opacity="0.93" stroke="#061006" stroke-width="1" stroke-linejoin="round"/>
<polygon points="1028.9,225.0 1044.4,227.0 1040.3,234.7 1024.8,232.7" fill="rgb(198,223,198)" fill-opacity="0.93" stroke="#061006" stroke-width="1" stroke-linejoin="round"/>
<polygon points="1044.4,227.0 1059.8,229.1 1055.7,236.8 1040.3,234.7" fill="rgb(198,223,198)" fill-opacity="0.93" stroke="#061006" stroke-width="1" stroke-linejoin="round"/>
<polygon points="1059.8,229.1 1075.3,231.2 1071.2,238.9 1055.7,236.8" fill="rgb(198,223,198)" fill-opacity="0.93" stroke="#061006" stroke-width="1" stroke-linejoin="round"/>
<polygon points="1075.3,231.2 1090.7,233.3 1086.6,240.9 1071.2,238.9" fill="rgb(198,223,198)" fill-opacity="0.93" stroke="#061006" stroke-width="1" stroke-linejoin="round"/>
<polygon points="1090.7,233.3 1106.1,235.3 1102.0,243.0 1086.6,240.9" fill="rgb(198,223,198)" fill-opacity="0.93" stroke="#061006" stroke-width="1" stroke-linejoin="round"/>
<polygon points="1106.1,235.3 1121.6,237.4 1117.5,245.1 1102.0,243.0" fill="rgb(198,223,198)" fill-opacity="0.93" stroke="#061006" stroke-width="1" stroke-linejoin="round"/>
<polygon points="1121.6,237.4 1137.0,239.5 1132.9,247.2 1117.5,245.1" fill="rgb(198,223,198)" fill-opacity="0.93" stroke="#061006" stroke-width="1" stroke-linejoin="round"/>
<polygon points="1137.0,239.5 1152.5,241.5 1148.4,249.2 1132.9,247.2" fill="rgb(198,223,198)" fill-opacity="0.93" stroke="#061006" stroke-width="1" stroke-linejoin="round"/>
<polygon points="1152.5,241.5 1167.9,243.6 1163.8,251.3 1148.4,249.2" fill="rgb(198,223,198)" fill-opacity="0.93" stroke="#061006" stroke-width="1" stroke-linejoin="round"/>
<polygon points="1167.9,243.6 1183.3,245.7 1179.2,253.4 1163.8,251.3" fill="rgb(198,223,198)" fill-opacity="0.93" stroke="#061006" stroke-width="1" stroke-linejoin="round"/>
<polygon points="1183.3,245.7 1198.8,247.8 1194.7,255.5 1179.2,253.4" fill="rgb(198,223,198)" fill-opacity="0.93" stroke="#061006" stroke-width="1" stroke-linejoin="round"/>
<polygon points="963.1,224.4 978.5,226.4 974.4,234.1 959.0,232.1" fill="rgb(198,223,198)" fill-opacity="0.93" stroke="#061006" stroke-width="1" stroke-linejoin="round"/>
<polygon points="978.5,226.4 994.0,228.5 989.8,236.2 974.4,234.1" fill="rgb(198,223,198)" fill-opacity="0.93" stroke="#061006" stroke-width="1" stroke-linejoin="round"/>
<polygon points="994.0,228.5 1009.4,230.6 1005.3,238.3 989.8,236.2" fill="rgb(198,223,198)" fill-opacity="0.93" stroke="#061006" stroke-width="1" stroke-linejoin="round"/>
<polygon points="1009.4,230.6 1024.8,232.7 1020.7,240.3 1005.3,238.3" fill="rgb(198,223,198)" fill-opacity="0.93" stroke="#061006" stroke-width="1" stroke-linejoin="round"/>
<polygon points="1024.8,232.7 1040.3,234.7 1036.2,242.4 1020.7,240.3" fill="rgb(198,223,198)" fill-opacity="0.93" stroke="#061006" stroke-width="1" stroke-linejoin="round"/>
<polygon points="1040.3,234.7 1055.7,236.8 1051.6,244.5 1036.2,242.4" fill="rgb(198,223,198)" fill-opacity="0.93" stroke="#061006" stroke-width="1" stroke-linejoin="round"/>
<polygon points="1055.7,236.8 1071.2,238.9 1067.0,246.6 1051.6,244.5" fill="rgb(198,223,198)" fill-opacity="0.93" stroke="#061006" stroke-width="1" stroke-linejoin="round"/>
<polygon points="1071.2,238.9 1086.6,240.9 1082.5,248.6 1067.0,246.6" fill="rgb(198,223,198)" fill-opacity="0.93" stroke="#061006" stroke-width="1" stroke-linejoin="round"/>
<polygon points="1086.6,240.9 1102.0,243.0 1097.9,250.7 1082.5,248.6" fill="rgb(198,223,198)" fill-opacity="0.93" stroke="#061006" stroke-width="1" stroke-linejoin="round"/>
<polygon points="1102.0,243.0 1117.5,245.1 1113.4,252.8 1097.9,250.7" fill="rgb(198,223,198)" fill-opacity="0.93" stroke="#061006" stroke-width="1" stroke-linejoin="round"/>
<polygon points="1117.5,245.1 1132.9,247.2 1128.8,254.9 1113.4,252.8" fill="rgb(198,223,198)" fill-opacity="0.93" stroke="#061006" stroke-width="1" stroke-linejoin="round"/>
<polygon points="1132.9,247.2 1148.4,249.2 1144.2,256.9 1128.8,254.9" fill="rgb(198,223,198)" fill-opacity="0.93" stroke="#061006" stroke-width="1" stroke-linejoin="round"/>
<polygon points="1148.4,249.2 1163.8,251.3 1159.7,259.0 1144.2,256.9" fill="rgb(198,223,198)" fill-opacity="0.93" stroke="#061006" stroke-width="1" stroke-linejoin="round"/>
<polygon points="1163.8,251.3 1179.2,253.4 1175.1,261.1 1159.7,259.0" fill="rgb(198,223,198)" fill-opacity="0.93" stroke="#061006" stroke-width="1" stroke-linejoin="round"/>
<polygon points="1179.2,253.4 1194.7,255.5 1190.6,263.2 1175.1,261.1" fill="rgb(198,223,198)" fill-opacity="0.93" stroke="#061006" stroke-width="1" stroke-linejoin="round"/>
<polygon points="959.0,232.1 974.4,234.1 970.3,241.8 954.9,239.7" fill="rgb(198,223,198)" fill-opacity="0.93" stroke="#061006" stroke-width="1" stroke-linejoin="round"/>
<polygon points="974.4,234.1 989.8,236.2 985.7,243.9 970.3,241.8" fill="rgb(198,223,198)" fill-opacity="0.93" stroke="#061006" stroke-width="1" stroke-linejoin="round"/>
<polygon points="989.8,236.2 1005.3,238.3 1001.2,246.0 985.7,243.9" fill="rgb(198,223,198)" fill-opacity="0.93" stroke="#061006" stroke-width="1" stroke-linejoin="round"/>
<polygon points="1005.3,238.3 1020.7,240.3 1016.6,248.0 1001.2,246.0" fill="rgb(198,223,198)" fill-opacity="0.93" stroke="#061006" stroke-width="1" stroke-linejoin="round"/>
<polygon points="1020.7,240.3 1036.2,242.4 1032.1,250.1 1016.6,248.0" fill="rgb(198,223,198)" fill-opacity="0.93" stroke="#061006" stroke-width="1" stroke-linejoin="round"/>
<polygon points="1036.2,242.4 1051.6,244.5 1047.5,252.2 1032.1,250.1" fill="rgb(198,223,198)" fill-opacity="0.93" stroke="#061006" stroke-width="1" stroke-linejoin="round"/>
<polygon points="1051.6,244.5 1067.0,246.6 1062.9,254.3 1047.5,252.2" fill="rgb(198,223,198)" fill-opacity="0.93" stroke="#061006" stroke-width="1" stroke-linejoin="round"/>
<polygon points="1067.0,246.6 1082.5,248.6 1078.4,271.2 1062.9,254.3" fill="rgb(197,222,198)" fill-opacity="0.93" stroke="#061006" stroke-width="1" stroke-linejoin="round"/>
<polygon points="1082.5,248.6 1097.9,250.7 1093.8,273.3 1078.4,271.2" fill="rgb(197,222,198)" fill-opacity="0.93" stroke="#061006" stroke-width="1" stroke-linejoin="round"/>
<polygon points="1097.9,250.7 1113.4,252.8 1109.3,275.3 1093.8,273.3" fill="rgb(197,222,198)" fill-opacity="0.93" stroke="#061006" stroke-width="1" stroke-linejoin="round"/>
<polygon points="1113.4,252.8 1128.8,254.9 1124.7,277.4 1109.3,275.3" fill="rgb(197,222,198)" fill-opacity="0.93" stroke="#061006" stroke-width="1" stroke-linejoin="round"/>
<polygon points="1128.8,254.9 1144.2,256.9 1140.1,279.5 1124.7,277.4" fill="rgb(197,222,198)" fill-opacity="0.93" stroke="#061006" stroke-width="1" stroke-linejoin="round"/>
<polygon points="1144.2,256.9 1159.7,259.0 1155.6,281.6 1140.1,279.5" fill="rgb(197,222,198)" fill-opacity="0.93" stroke="#061006" stroke-width="1" stroke-linejoin="round"/>
<polygon points="1159.7,259.0 1175.1,261.1 1171.0,283.6 1155.6,281.6" fill="rgb(197,222,198)" fill-opacity="0.93" stroke="#061006" stroke-width="1" stroke-linejoin="round"/>
<polygon points="1175.1,261.1 1190.6,263.2 1186.5,285.7 1171.0,283.6" fill="rgb(197,222,198)" fill-opacity="0.93" stroke="#061006" stroke-width="1" stroke-linejoin="round"/>
<polygon points="954.9,239.7 970.3,241.8 966.2,249.5 950.8,247.4" fill="rgb(198,223,198)" fill-opacity="0.93" stroke="#061006" stroke-width="1" stroke-linejoin="round"/>
<polygon points="970.3,241.8 985.7,243.9 981.6,251.6 966.2,249.5" fill="rgb(198,223,198)" fill-opacity="0.93" stroke="#061006" stroke-width="1" stroke-linejoin="round"/>
<polygon points="985.7,243.9 1001.2,246.0 997.1,253.7 981.6,251.6" fill="rgb(198,223,198)" fill-opacity="0.93" stroke="#061006" stroke-width="1" stroke-linejoin="round"/>
<polygon points="1001.2,246.0 1016.6,248.0 1012.5,255.7 997.1,253.7" fill="rgb(198,223,198)" fill-opacity="0.93" stroke="#061006" stroke-width="1" stroke-linejoin="round"/>
<polygon points="1016.6,248.0 1032.1,250.1 1028.0,257.8 1012.5,255.7" fill="rgb(198,223,198)" fill-opacity="0.93" stroke="#061006" stroke-width="1" stroke-linejoin="round"/>
<polygon points="1032.1,250.1 1047.5,252.2 1043.4,259.9 1028.0,257.8" fill="rgb(198,223,198)" fill-opacity="0.93" stroke="#061006" stroke-width="1" stroke-linejoin="round"/>
<polygon points="1047.5,252.2 1062.9,254.3 1058.8,262.0 1043.4,259.9" fill="rgb(198,223,198)" fill-opacity="0.93" stroke="#061006" stroke-width="1" stroke-linejoin="round"/>
<polygon points="1062.9,254.3 1078.4,271.2 1074.3,278.9 1058.8,262.0" fill="rgb(197,222,198)" fill-opacity="0.93" stroke="#061006" stroke-width="1" stroke-linejoin="round"/>
<polygon points="1078.4,271.2 1093.8,273.3 1089.7,295.8 1074.3,278.9" fill="rgb(195,221,197)" fill-opacity="0.93" stroke="#061006" stroke-width="1" stroke-linejoin="round"/>
<polygon points="1093.8,273.3 1109.3,275.3 1105.2,297.9 1089.7,295.8" fill="rgb(195,220,197)" fill-opacity="0.93" stroke="#061006" stroke-width="1" stroke-linejoin="round"/>
<polygon points="1109.3,275.3 1124.7,277.4 1120.6,300.0 1105.2,297.9" fill="rgb(195,220,197)" fill-opacity="0.93" stroke="#061006" stroke-width="1" stroke-linejoin="round"/>
<polygon points="1124.7,277.4 1140.1,279.5 1136.0,302.0 1120.6,300.0" fill="rgb(195,220,197)" fill-opacity="0.93" stroke="#061006" stroke-width="1" stroke-linejoin="round"/>
<polygon points="1140.1,279.5 1155.6,281.6 1151.5,304.1 1136.0,302.0" fill="rgb(195,220,197)" fill-opacity="0.93" stroke="#061006" stroke-width="1" stroke-linejoin="round"/>
<polygon points="1155.6,281.6 1171.0,283.6 1166.9,306.2 1151.5,304.1" fill="rgb(195,220,197)" fill-opacity="0.93" stroke="#061006" stroke-width="1" stroke-linejoin="round"/>
<polygon points="1171.0,283.6 1186.5,285.7 1182.4,308.3 1166.9,306.2" fill="rgb(195,220,197)" fill-opacity="0.93" stroke="#061006" stroke-width="1" stroke-linejoin="round"/>
<polygon points="950.8,247.4 966.2,249.5 962.1,257.2 946.6,255.1" fill="rgb(198,223,198)" fill-opacity="0.93" stroke="#061006" stroke-width="1" stroke-linejoin="round"/>
<polygon points="966.2,249.5 981.6,251.6 977.5,259.3 962.1,257.2" fill="rgb(198,223,198)" fill-opacity="0.93" stroke="#061006" stroke-width="1" stroke-linejoin="round"/>
<polygon points="981.6,251.6 997.1,253.7 993.0,261.4 977.5,259.3" fill="rgb(198,223,198)" fill-opacity="0.93" stroke="#061006" stroke-width="1" stroke-linejoin="round"/>
<polygon points="997.1,253.7 1012.5,255.7 1008.4,263.4 993.0,261.4" fill="rgb(198,223,198)" fill-opacity="0.93" stroke="#061006" stroke-width="1" stroke-linejoin="round"/>
<polygon points="1012.5,255.7 1028.0,257.8 1023.8,265.5 1008.4,263.4" fill="rgb(198,223,198)" fill-opacity="0.93" stroke="#061006" stroke-width="1" stroke-linejoin="round"/>
<polygon points="1028.0,257.8 1043.4,259.9 1039.3,267.6 1023.8,265.5" fill="rgb(198,223,198)" fill-opacity="0.93" stroke="#061006" stroke-width="1" stroke-linejoin="round"/>
<polygon points="1043.4,259.9 1058.8,262.0 1054.7,269.6 1039.3,267.6" fill="rgb(198,223,198)" fill-opacity="0.93" stroke="#061006" stroke-width="1" stroke-linejoin="round"/>
<polygon points="1058.8,262.0 1074.3,278.9 1070.2,286.6 1054.7,269.6" fill="rgb(197,222,198)" fill-opacity="0.93" stroke="#061006" stroke-width="1" stroke-linejoin="round"/>
<polygon points="1074.3,278.9 1089.7,295.8 1085.6,303.5 1070.2,286.6" fill="rgb(195,220,197)" fill-opacity="0.93" stroke="#061006" stroke-width="1" stroke-linejoin="round"/>
<polygon points="1089.7,295.8 1105.2,297.9 1101.0,320.4 1085.6,303.5" fill="rgb(193,219,197)" fill-opacity="0.93" stroke="#061006" stroke-width="1" stroke-linejoin="round"/>
<polygon points="1105.2,297.9 1120.6,300.0 1116.5,322.5 1101.0,320.4" fill="rgb(193,219,197)" fill-opacity="0.93" stroke="#061006" stroke-width="1" stroke-linejoin="round"/>
<polygon points="1120.6,300.0 1136.0,302.0 1131.9,324.6 1116.5,322.5" fill="rgb(193,219,197)" fill-opacity="0.93" stroke="#061006" stroke-width="1" stroke-linejoin="round"/>
<polygon points="1136.0,302.0 1151.5,304.1 1147.4,326.7 1131.9,324.6" fill="rgb(193,219,197)" fill-opacity="0.93" stroke="#061006" stroke-width="1" stroke-linejoin="round"/>
<polygon points="1151.5,304.1 1166.9,306.2 1162.8,328.7 1147.4,326.7" fill="rgb(193,219,197)" fill-opacity="0.93" stroke="#061006" stroke-width="1" stroke-linejoin="round"/>
<polygon points="1166.9,306.2 1182.4,308.3 1178.2,330.8 1162.8,328.7" fill="rgb(193,219,197)" fill-opacity="0.93" stroke="#061006" stroke-width="1" stroke-linejoin="round"/>
<polygon points="946.6,255.1 962.1,257.2 958.0,264.9 942.5,262.8" fill="rgb(198,223,198)" fill-opacity="0.93" stroke="#061006" stroke-width="1" stroke-linejoin="round"/>
<polygon points="962.1,257.2 977.5,259.3 973.4,267.0 958.0,264.9" fill="rgb(198,223,198)" fill-opacity="0.93" stroke="#061006" stroke-width="1" stroke-linejoin="round"/>
<polygon points="977.5,259.3 993.0,261.4 988.9,269.0 973.4,267.0" fill="rgb(198,223,198)" fill-opacity="0.93" stroke="#061006" stroke-width="1" stroke-linejoin="round"/>
<polygon points="993.0,261.4 1008.4,263.4 1004.3,271.1 988.9,269.0" fill="rgb(198,223,198)" fill-opacity="0.93" stroke="#061006" stroke-width="1" stroke-linejoin="round"/>
<polygon points="1008.4,263.4 1023.8,265.5 1019.7,273.2 1004.3,271.1" fill="rgb(198,223,198)" fill-opacity="0.93" stroke="#061006" stroke-width="1" stroke-linejoin="round"/>
<polygon points="1023.8,265.5 1039.3,267.6 1035.2,275.3 1019.7,273.2" fill="rgb(198,223,198)" fill-opacity="0.93" stroke="#061006" stroke-width="1" stroke-linejoin="round"/>
<polygon points="1039.3,267.6 1054.7,269.6 1050.6,292.2 1035.2,275.3" fill="rgb(197,222,198)" fill-opacity="0.93" stroke="#061006" stroke-width="1" stroke-linejoin="round"/>
<polygon points="1054.7,269.6 1070.2,286.6 1066.1,309.1 1050.6,292.2" fill="rgb(196,221,198)" fill-opacity="0.93" stroke="#061006" stroke-width="1" stroke-linejoin="round"/>
<polygon points="1070.2,286.6 1085.6,303.5 1081.5,326.1 1066.1,309.1" fill="rgb(194,220,198)" fill-opacity="0.93" stroke="#061006" stroke-width="1" stroke-linejoin="round"/>
<polygon points="1085.6,303.5 1101.0,320.4 1096.9,328.1 1081.5,326.1" fill="rgb(192,218,196)" fill-opacity="0.93" stroke="#061006" stroke-width="1" stroke-linejoin="round"/>
<polygon points="1101.0,320.4 1116.5,322.5 1112.4,345.1 1096.9,328.1" fill="rgb(191,217,196)" fill-opacity="0.93" stroke="#061006" stroke-width="1" stroke-linejoin="round"/>
<polygon points="1116.5,322.5 1131.9,324.6 1127.8,347.1 1112.4,345.1" fill="rgb(191,217,196)" fill-opacity="0.93" stroke="#061006" stroke-width="1" stroke-linejoin="round"/>
<polygon points="1131.9,324.6 1147.4,326.7 1143.3,349.2 1127.8,347.1" fill="rgb(191,217,196)" fill-opacity="0.93" stroke="#061006" stroke-width="1" stroke-linejoin="round"/>
<polygon points="1147.4,326.7 1162.8,328.7 1158.7,351.3 1143.3,349.2" fill="rgb(191,217,196)" fill-opacity="0.93" stroke="#061006" stroke-width="1" stroke-linejoin="round"/>
<polygon points="1162.8,328.7 1178.2,330.8 1174.1,353.4 1158.7,351.3" fill="rgb(191,217,196)" fill-opacity="0.93" stroke="#061006" stroke-width="1" stroke-linejoin="round"/>
<polygon points="942.5,262.8 958.0,264.9 953.9,272.6 938.4,270.5" fill="rgb(198,223,198)" fill-opacity="0.93" stroke="#061006" stroke-width="1" stroke-linejoin="round"/>
<polygon points="958.0,264.9 973.4,267.0 969.3,274.7 953.9,272.6" fill="rgb(198,223,198)" fill-opacity="0.93" stroke="#061006" stroke-width="1" stroke-linejoin="round"/>
<polygon points="973.4,267.0 988.9,269.0 984.8,276.7 969.3,274.7" fill="rgb(198,223,198)" fill-opacity="0.93" stroke="#061006" stroke-width="1" stroke-linejoin="round"/>
<polygon points="988.9,269.0 1004.3,271.1 1000.2,278.8 984.8,276.7" fill="rgb(198,223,198)" fill-opacity="0.93" stroke="#061006" stroke-width="1" stroke-linejoin="round"/>
<polygon points="1004.3,271.1 1019.7,273.2 1015.6,280.9 1000.2,278.8" fill="rgb(198,223,198)" fill-opacity="0.93" stroke="#061006" stroke-width="1" stroke-linejoin="round"/>
<polygon points="1019.7,273.2 1035.2,275.3 1031.1,283.0 1015.6,280.9" fill="rgb(198,223,198)" fill-opacity="0.93" stroke="#061006" stroke-width="1" stroke-linejoin="round"/>
<polygon points="1035.2,275.3 1050.6,292.2 1046.5,299.9 1031.1,283.0" fill="rgb(197,222,198)" fill-opacity="0.93" stroke="#061006" stroke-width="1" stroke-linejoin="round"/>
<polygon points="1050.6,292.2 1066.1,309.1 1062.0,316.8 1046.5,299.9" fill="rgb(195,220,197)" fill-opacity="0.93" stroke="#061006" stroke-width="1" stroke-linejoin="round"/>
<polygon points="1066.1,309.1 1081.5,326.1 1077.4,333.8 1062.0,316.8" fill="rgb(193,219,197)" fill-opacity="0.93" stroke="#061006" stroke-width="1" stroke-linejoin="round"/>
<polygon points="1081.5,326.1 1096.9,328.1 1092.8,335.8 1077.4,333.8" fill="rgb(192,217,196)" fill-opacity="0.93" stroke="#061006" stroke-width="1" stroke-linejoin="round"/>
<polygon points="1096.9,328.1 1112.4,345.1 1108.3,352.8 1092.8,335.8" fill="rgb(191,217,196)" fill-opacity="0.93" stroke="#061006" stroke-width="1" stroke-linejoin="round"/>
<polygon points="1112.4,345.1 1127.8,347.1 1123.7,354.8 1108.3,352.8" fill="rgb(190,216,195)" fill-opacity="0.93" stroke="#061006" stroke-width="1" stroke-linejoin="round"/>
<polygon points="1127.8,347.1 1143.3,349.2 1139.2,356.9 1123.7,354.8" fill="rgb(190,216,195)" fill-opacity="0.93" stroke="#061006" stroke-width="1" stroke-linejoin="round"/>
<polygon points="1143.3,349.2 1158.7,351.3 1154.6,359.0 1139.2,356.9" fill="rgb(190,216,195)" fill-opacity="0.93" stroke="#061006" stroke-width="1" stroke-linejoin="round"/>
<polygon points="1158.7,351.3 1174.1,353.4 1170.0,361.0 1154.6,359.0" fill="rgb(190,216,195)" fill-opacity="0.93" stroke="#061006" stroke-width="1" stroke-linejoin="round"/>
<polygon points="938.4,270.5 953.9,272.6 949.8,280.3 934.3,278.2" fill="rgb(198,223,198)" fill-opacity="0.93" stroke="#061006" stroke-width="1" stroke-linejoin="round"/>
<polygon points="953.9,272.6 969.3,274.7 965.2,282.4 949.8,280.3" fill="rgb(198,223,198)" fill-opacity="0.93" stroke="#061006" stroke-width="1" stroke-linejoin="round"/>
<polygon points="969.3,274.7 984.8,276.7 980.6,284.4 965.2,282.4" fill="rgb(198,223,198)" fill-opacity="0.93" stroke="#061006" stroke-width="1" stroke-linejoin="round"/>
<polygon points="984.8,276.7 1000.2,278.8 996.1,286.5 980.6,284.4" fill="rgb(198,223,198)" fill-opacity="0.93" stroke="#061006" stroke-width="1" stroke-linejoin="round"/>
<polygon points="1000.2,278.8 1015.6,280.9 1011.5,288.6 996.1,286.5" fill="rgb(198,223,198)" fill-opacity="0.93" stroke="#061006" stroke-width="1" stroke-linejoin="round"/>
<polygon points="1015.6,280.9 1031.1,283.0 1027.0,290.7 1011.5,288.6" fill="rgb(198,223,198)" fill-opacity="0.93" stroke="#061006" stroke-width="1" stroke-linejoin="round"/>
<polygon points="1031.1,283.0 1046.5,299.9 1042.4,307.6 1027.0,290.7" fill="rgb(197,222,198)" fill-opacity="0.93" stroke="#061006" stroke-width="1" stroke-linejoin="round"/>
<polygon points="1046.5,299.9 1062.0,316.8 1057.8,324.5 1042.4,307.6" fill="rgb(195,220,197)" fill-opacity="0.93" stroke="#061006" stroke-width="1" stroke-linejoin="round"/>
<polygon points="1062.0,316.8 1077.4,333.8 1073.3,341.4 1057.8,324.5" fill="rgb(193,219,197)" fill-opacity="0.93" stroke="#061006" stroke-width="1" stroke-linejoin="round"/>
<polygon points="1077.4,333.8 1092.8,335.8 1088.7,343.5 1073.3,341.4" fill="rgb(192,217,196)" fill-opacity="0.93" stroke="#061006" stroke-width="1" stroke-linejoin="round"/>
<polygon points="1092.8,335.8 1108.3,352.8 1104.2,360.4 1088.7,343.5" fill="rgb(191,217,196)" fill-opacity="0.93" stroke="#061006" stroke-width="1" stroke-linejoin="round"/>
<polygon points="1108.3,352.8 1123.7,354.8 1119.6,362.5 1104.2,360.4" fill="rgb(190,216,195)" fill-opacity="0.93" stroke="#061006" stroke-width="1" stroke-linejoin="round"/>
<polygon points="1123.7,354.8 1139.2,356.9 1135.0,364.6 1119.6,362.5" fill="rgb(190,216,195)" fill-opacity="0.93" stroke="#061006" stroke-width="1" stroke-linejoin="round"/>
<polygon points="1139.2,356.9 1154.6,359.0 1150.5,366.7 1135.0,364.6" fill="rgb(190,216,195)" fill-opacity="0.93" stroke="#061006" stroke-width="1" stroke-linejoin="round"/>
<polygon points="1154.6,359.0 1170.0,361.0 1165.9,368.7 1150.5,366.7" fill="rgb(190,216,195)" fill-opacity="0.93" stroke="#061006" stroke-width="1" stroke-linejoin="round"/>
<polygon points="934.3,278.2 949.8,280.3 945.7,288.0 930.2,285.9" fill="rgb(198,223,198)" fill-opacity="0.93" stroke="#061006" stroke-width="1" stroke-linejoin="round"/>
<polygon points="949.8,280.3 965.2,282.4 961.1,290.1 945.7,288.0" fill="rgb(198,223,198)" fill-opacity="0.93" stroke="#061006" stroke-width="1" stroke-linejoin="round"/>
<polygon points="965.2,282.4 980.6,284.4 976.5,292.1 961.1,290.1" fill="rgb(198,223,198)" fill-opacity="0.93" stroke="#061006" stroke-width="1" stroke-linejoin="round"/>
<polygon points="980.6,284.4 996.1,286.5 992.0,294.2 976.5,292.1" fill="rgb(198,223,198)" fill-opacity="0.93" stroke="#061006" stroke-width="1" stroke-linejoin="round"/>
<polygon points="996.1,286.5 1011.5,288.6 1007.4,296.3 992.0,294.2" fill="rgb(198,223,198)" fill-opacity="0.93" stroke="#061006" stroke-width="1" stroke-linejoin="round"/>
<polygon points="1011.5,288.6 1027.0,290.7 1022.9,298.3 1007.4,296.3" fill="rgb(198,223,198)" fill-opacity="0.93" stroke="#061006" stroke-width="1" stroke-linejoin="round"/>
<polygon points="1027.0,290.7 1042.4,307.6 1038.3,315.3 1022.9,298.3" fill="rgb(197,222,198)" fill-opacity="0.93" stroke="#061006" stroke-width="1" stroke-linejoin="round"/>
<polygon points="1042.4,307.6 1057.8,324.5 1053.7,332.2 1038.3,315.3" fill="rgb(195,220,197)" fill-opacity="0.93" stroke="#061006" stroke-width="1" stroke-linejoin="round"/>
<polygon points="1057.8,324.5 1073.3,341.4 1069.2,349.1 1053.7,332.2" fill="rgb(193,219,197)" fill-opacity="0.93" stroke="#061006" stroke-width="1" stroke-linejoin="round"/>
<polygon points="1073.3,341.4 1088.7,343.5 1084.6,351.2 1069.2,349.1" fill="rgb(192,217,196)" fill-opacity="0.93" stroke="#061006" stroke-width="1" stroke-linejoin="round"/>
<polygon points="1088.7,343.5 1104.2,360.4 1100.1,368.1 1084.6,351.2" fill="rgb(191,217,196)" fill-opacity="0.93" stroke="#061006" stroke-width="1" stroke-linejoin="round"/>
<polygon points="1104.2,360.4 1119.6,362.5 1115.5,370.2 1100.1,368.1" fill="rgb(190,216,195)" fill-opacity="0.93" stroke="#061006" stroke-width="1" stroke-linejoin="round"/>
<polygon points="1119.6,362.5 1135.0,364.6 1130.9,372.3 1115.5,370.2" fill="rgb(190,216,195)" fill-opacity="0.93" stroke="#061006" stroke-width="1" stroke-linejoin="round"/>
<polygon points="1135.0,364.6 1150.5,366.7 1146.4,374.4 1130.9,372.3" fill="rgb(190,216,195)" fill-opacity="0.93" stroke="#061006" stroke-width="1" stroke-linejoin="round"/>
<polygon points="1150.5,366.7 1165.9,368.7 1161.8,376.4 1146.4,374.4" fill="rgb(190,216,195)" fill-opacity="0.93" stroke="#061006" stroke-width="1" stroke-linejoin="round"/>
<polygon points="930.2,285.9 945.7,288.0 941.6,295.7 926.1,293.6" fill="rgb(198,223,198)" fill-opacity="0.93" stroke="#061006" stroke-width="1" stroke-linejoin="round"/>
<polygon points="945.7,288.0 961.1,290.1 957.0,297.7 941.6,295.7" fill="rgb(198,223,198)" fill-opacity="0.93" stroke="#061006" stroke-width="1" stroke-linejoin="round"/>
<polygon points="961.1,290.1 976.5,292.1 972.4,299.8 957.0,297.7" fill="rgb(198,223,198)" fill-opacity="0.93" stroke="#061006" stroke-width="1" stroke-linejoin="round"/>
<polygon points="976.5,292.1 992.0,294.2 987.9,301.9 972.4,299.8" fill="rgb(198,223,198)" fill-opacity="0.93" stroke="#061006" stroke-width="1" stroke-linejoin="round"/>
<polygon points="992.0,294.2 1007.4,296.3 1003.3,304.0 987.9,301.9" fill="rgb(198,223,198)" fill-opacity="0.93" stroke="#061006" stroke-width="1" stroke-linejoin="round"/>
<polygon points="1007.4,296.3 1022.9,298.3 1018.8,306.0 1003.3,304.0" fill="rgb(198,223,198)" fill-opacity="0.93" stroke="#061006" stroke-width="1" stroke-linejoin="round"/>
<polygon points="1022.9,298.3 1038.3,315.3 1034.2,323.0 1018.8,306.0" fill="rgb(197,222,198)" fill-opacity="0.93" stroke="#061006" stroke-width="1" stroke-linejoin="round"/>
<polygon points="1038.3,315.3 1053.7,332.2 1049.6,339.9 1034.2,323.0" fill="rgb(195,220,197)" fill-opacity="0.93" stroke="#061006" stroke-width="1" stroke-linejoin="round"/>
<polygon points="1053.7,332.2 1069.2,349.1 1065.1,356.8 1049.6,339.9" fill="rgb(193,219,197)" fill-opacity="0.93" stroke="#061006" stroke-width="1" stroke-linejoin="round"/>
<polygon points="1069.2,349.1 1084.6,351.2 1080.5,358.9 1065.1,356.8" fill="rgb(192,217,196)" fill-opacity="0.93" stroke="#061006" stroke-width="1" stroke-linejoin="round"/>
<polygon points="1084.6,351.2 1100.1,368.1 1096.0,375.8 1080.5,358.9" fill="rgb(191,217,196)" fill-opacity="0.93" stroke="#061006" stroke-width="1" stroke-linejoin="round"/>
<polygon points="1100.1,368.1 1115.5,370.2 1111.4,377.9 1096.0,375.8" fill="rgb(190,216,195)" fill-opacity="0.93" stroke="#061006" stroke-width="1" stroke-linejoin="round"/>
<polygon points="1115.5,370.2 1130.9,372.3 1126.8,380.0 1111.4,377.9" fill="rgb(190,216,195)" fill-opacity="0.93" stroke="#061006" stroke-width="1" stroke-linejoin="round"/>
<polygon points="1130.9,372.3 1146.4,374.4 1142.3,382.1 1126.8,380.0" fill="rgb(190,216,195)" fill-opacity="0.93" stroke="#061006" stroke-width="1" stroke-linejoin="round"/>
<polygon points="1146.4,374.4 1161.8,376.4 1157.7,384.1 1142.3,382.1" fill="rgb(190,216,195)" fill-opacity="0.93" stroke="#061006" stroke-width="1" stroke-linejoin="round"/>
<polygon points="926.1,293.6 941.6,295.7 937.4,303.4 922.0,301.3" fill="rgb(198,223,198)" fill-opacity="0.93" stroke="#061006" stroke-width="1" stroke-linejoin="round"/>
<polygon points="941.6,295.7 957.0,297.7 952.9,305.4 937.4,303.4" fill="rgb(198,223,198)" fill-opacity="0.93" stroke="#061006" stroke-width="1" stroke-linejoin="round"/>
<polygon points="957.0,297.7 972.4,299.8 968.3,307.5 952.9,305.4" fill="rgb(198,223,198)" fill-opacity="0.93" stroke="#061006" stroke-width="1" stroke-linejoin="round"/>
<polygon points="972.4,299.8 987.9,301.9 983.8,309.6 968.3,307.5" fill="rgb(198,223,198)" fill-opacity="0.93" stroke="#061006" stroke-width="1" stroke-linejoin="round"/>
<polygon points="987.9,301.9 1003.3,304.0 999.2,311.7 983.8,309.6" fill="rgb(198,223,198)" fill-opacity="0.93" stroke="#061006" stroke-width="1" stroke-linejoin="round"/>
<polygon points="1003.3,304.0 1018.8,306.0 1014.6,313.7 999.2,311.7" fill="rgb(198,223,198)" fill-opacity="0.93" stroke="#061006" stroke-width="1" stroke-linejoin="round"/>
<polygon points="1018.8,306.0 1034.2,323.0 1030.1,330.7 1014.6,313.7" fill="rgb(197,222,198)" fill-opacity="0.93" stroke="#061006" stroke-width="1" stroke-linejoin="round"/>
<polygon points="1034.2,323.0 1049.6,339.9 1045.5,347.6 1030.1,330.7" fill="rgb(195,220,197)" fill-opacity="0.93" stroke="#061006" stroke-width="1" stroke-linejoin="round"/>
<polygon points="1049.6,339.9 1065.1,356.8 1061.0,364.5 1045.5,347.6" fill="rgb(193,219,197)" fill-opacity="0.93" stroke="#061006" stroke-width="1" stroke-linejoin="round"/>
<polygon points="1065.1,356.8 1080.5,358.9 1076.4,366.6 1061.0,364.5" fill="rgb(192,217,196)" fill-opacity="0.93" stroke="#061006" stroke-width="1" stroke-linejoin="round"/>
<polygon points="1080.5,358.9 1096.0,375.8 1091.8,383.5 1076.4,366.6" fill="rgb(191,217,196)" fill-opacity="0.93" stroke="#061006" stroke-width="1" stroke-linejoin="round"/>
<polygon points="1096.0,375.8 1111.4,377.9 1107.3,385.6 1091.8,383.5" fill="rgb(190,216,195)" fill-opacity="0.93" stroke="#061006" stroke-width="1" stroke-linejoin="round"/>
<polygon points="1111.4,377.9 1126.8,380.0 1122.7,387.7 1107.3,385.6" fill="rgb(190,216,195)" fill-opacity="0.93" stroke="#061006" stroke-width="1" stroke-linejoin="round"/>
<polygon points="1126.8,380.0 1142.3,382.1 1138.2,389.7 1122.7,387.7" fill="rgb(190,216,195)" fill-opacity="0.93" stroke="#061006" stroke-width="1" stroke-linejoin="round"/>
<polygon points="1142.3,382.1 1157.7,384.1 1153.6,391.8 1138.2,389.7" fill="rgb(190,216,195)" fill-opacity="0.93" stroke="#061006" stroke-width="1" stroke-linejoin="round"/>
<polygon points="922.0,301.3 937.4,303.4 933.3,311.1 917.9,309.0" fill="rgb(198,223,198)" fill-opacity="0.93" stroke="#061006" stroke-width="1" stroke-linejoin="round"/>
<polygon points="937.4,303.4 952.9,305.4 948.8,313.1 933.3,311.1" fill="rgb(198,223,198)" fill-opacity="0.93" stroke="#061006" stroke-width="1" stroke-linejoin="round"/>
<polygon points="952.9,305.4 968.3,307.5 964.2,315.2 948.8,313.1" fill="rgb(198,223,198)" fill-opacity="0.93" stroke="#061006" stroke-width="1" stroke-linejoin="round"/>
<polygon points="968.3,307.5 983.8,309.6 979.7,317.3 964.2,315.2" fill="rgb(198,223,198)" fill-opacity="0.93" stroke="#061006" stroke-width="1" stroke-linejoin="round"/>
<polygon points="983.8,309.6 999.2,311.7 995.1,319.4 979.7,317.3" fill="rgb(198,223,198)" fill-opacity="0.93" stroke="#061006" stroke-width="1" stroke-linejoin="round"/>
<polygon points="999.2,311.7 1014.6,313.7 1010.5,321.4 995.1,319.4" fill="rgb(198,223,198)" fill-opacity="0.93" stroke="#061006" stroke-width="1" stroke-linejoin="round"/>
<polygon points="1014.6,313.7 1030.1,330.7 1026.0,338.4 1010.5,321.4" fill="rgb(197,222,198)" fill-opacity="0.93" stroke="#061006" stroke-width="1" stroke-linejoin="round"/>
<polygon points="1030.1,330.7 1045.5,347.6 1041.4,355.3 1026.0,338.4" fill="rgb(195,220,197)" fill-opacity="0.93" stroke="#061006" stroke-width="1" stroke-linejoin="round"/>
<polygon points="1045.5,347.6 1061.0,364.5 1056.9,372.2 1041.4,355.3" fill="rgb(193,219,197)" fill-opacity="0.93" stroke="#061006" stroke-width="1" stroke-linejoin="round"/>
<polygon points="1061.0,364.5 1076.4,366.6 1072.3,374.3 1056.9,372.2" fill="rgb(192,217,196)" fill-opacity="0.93" stroke="#061006" stroke-width="1" stroke-linejoin="round"/>
<polygon points="1076.4,366.6 1091.8,383.5 1087.7,391.2 1072.3,374.3" fill="rgb(191,217,196)" fill-opacity="0.93" stroke="#061006" stroke-width="1" stroke-linejoin="round"/>
<polygon points="1091.8,383.5 1107.3,385.6 1103.2,393.3 1087.7,391.2" fill="rgb(190,216,195)" fill-opacity="0.93" stroke="#061006" stroke-width="1" stroke-linejoin="round"/>
<polygon points="1107.3,385.6 1122.7,387.7 1118.6,395.4 1103.2,393.3" fill="rgb(190,216,195)" fill-opacity="0.93" stroke="#061006" stroke-width="1" stroke-linejoin="round"/>
<polygon points="1122.7,387.7 1138.2,389.7 1134.1,397.4 1118.6,395.4" fill="rgb(190,216,195)" fill-opacity="0.93" stroke="#061006" stroke-width="1" stroke-linejoin="round"/>
<polygon points="1138.2,389.7 1153.6,391.8 1149.5,399.5 1134.1,397.4" fill="rgb(190,216,195)" fill-opacity="0.93" stroke="#061006" stroke-width="1" stroke-linejoin="round"/>
<line x1="979.5" y1="119.3" x2="1211.1" y2="150.4" stroke="#2a2a30" stroke-width="1" stroke-opacity="1"/>
<line x1="979.5" y1="119.3" x2="917.9" y2="234.7" stroke="#2a2a30" stroke-width="1" stroke-opacity="1"/>
<line x1="917.9" y1="234.7" x2="917.9" y2="442.7" stroke="#2a2a30" stroke-width="1" stroke-opacity="1"/>
<line x1="917.9" y1="442.7" x2="1149.5" y2="473.8" stroke="#2a2a30" stroke-width="1" stroke-opacity="1"/>
<line x1="1149.5" y1="473.8" x2="1211.1" y2="358.4" stroke="#2a2a30" stroke-width="1" stroke-opacity="1"/>
<line x1="1211.1" y1="358.4" x2="1211.1" y2="150.4" stroke="#2a2a30" stroke-width="1" stroke-opacity="1"/>
<line x1="1149.5" y1="473.8" x2="1149.5" y2="265.8" stroke="#2a2a30" stroke-width="1" stroke-opacity="0.55"/>
<line x1="917.9" y1="234.7" x2="1149.5" y2="265.8" stroke="#2a2a30" stroke-width="1" stroke-opacity="0.3"/>
<line x1="1149.5" y1="265.8" x2="1211.1" y2="150.4" stroke="#2a2a30" stroke-width="1" stroke-opacity="0.75"/>
<line x1="1211.1" y1="150.4" x2="1218.1" y2="150.4" stroke="#222" stroke-width="1"/>
<text x="1221.6" y="154.4" font-size="11" fill="#1c1c38">0.20</text>
<line x1="1211.1" y1="187.5" x2="1218.1" y2="187.5" stroke="#222" stroke-width="1"/>
<text x="1221.6" y="191.5" font-size="11" fill="#1c1c38">0.10</text>
<line x1="1211.1" y1="224.7" x2="1218.1" y2="224.7" stroke="#222" stroke-width="1"/>
<text x="1221.6" y="228.7" font-size="11" fill="#1c1c38">0.00</text>
<line x1="1211.1" y1="261.8" x2="1218.1" y2="261.8" stroke="#222" stroke-width="1"/>
<text x="1222.4" y="265.8" font-size="11" fill="#1c1c38">-0.10</text>
<line x1="1211.1" y1="299.0" x2="1218.1" y2="299.0" stroke="#222" stroke-width="1"/>
<text x="1222.4" y="303.0" font-size="11" fill="#1c1c38">-0.20</text>
<line x1="1211.1" y1="336.1" x2="1218.1" y2="336.1" stroke="#222" stroke-width="1"/>
<text x="1222.4" y="340.1" font-size="11" fill="#1c1c38">-0.30</text>
<text x="1231.1" y="255.9" font-size="10.500" fill="#1c1c38">Z</text>
<line x1="931.5" y1="444.5" x2="931.5" y2="451.5" stroke="#c01030" stroke-width="1"/>
<text x="929.0" y="463.0" text-anchor="middle" font-size="10.500" fill="#c01030">0,0</text>
<line x1="1004.1" y1="454.3" x2="1004.1" y2="461.3" stroke="#c01030" stroke-width="1"/>
<text x="1001.6" y="472.8" text-anchor="middle" font-size="10.500" fill="#c01030">1,7</text>
<line x1="1076.8" y1="464.0" x2="1076.8" y2="471.0" stroke="#c01030" stroke-width="1"/>
<text x="1074.3" y="482.5" text-anchor="middle" font-size="10.500" fill="#c01030">3,3</text>
<line x1="1149.5" y1="473.8" x2="1149.5" y2="480.8" stroke="#c01030" stroke-width="1"/>
<text x="1147.0" y="492.3" text-anchor="middle" font-size="10.500" fill="#c01030">5,0</text>
<line x1="1207.3" y1="365.6" x2="1207.3" y2="372.6" stroke="#2e7d32" stroke-width="1"/>
<text x="1214.8" y="383.6" text-anchor="middle" font-size="10.500" fill="#3a7a3a">0,0</text>
<line x1="1188.0" y1="401.6" x2="1188.0" y2="408.6" stroke="#2e7d32" stroke-width="1"/>
<text x="1195.5" y="419.6" text-anchor="middle" font-size="10.500" fill="#3a7a3a">1,7</text>
<line x1="1168.8" y1="437.7" x2="1168.8" y2="444.7" stroke="#2e7d32" stroke-width="1"/>
<text x="1176.3" y="455.7" text-anchor="middle" font-size="10.500" fill="#3a7a3a">3,3</text>
<line x1="1149.5" y1="473.8" x2="1149.5" y2="480.8" stroke="#2e7d32" stroke-width="1"/>
<text x="1157.0" y="491.8" text-anchor="middle" font-size="10.500" fill="#3a7a3a">5,0</text>
<text x="1211.6" y="439.4" font-size="10.500" fill="#5a8a5a">Y</text>
<circle cx="979.5" cy="193.6" r="3" fill="#fff" stroke="#222" stroke-width="0.9"/>
<circle cx="1195.7" cy="222.6" r="4.300" fill="#e01010" stroke="#900" stroke-width="0.600"/>
<circle cx="1211.1" cy="224.7" r="4.300" fill="#e01010" stroke="#900" stroke-width="0.600"/>
</svg>
</body></html>
